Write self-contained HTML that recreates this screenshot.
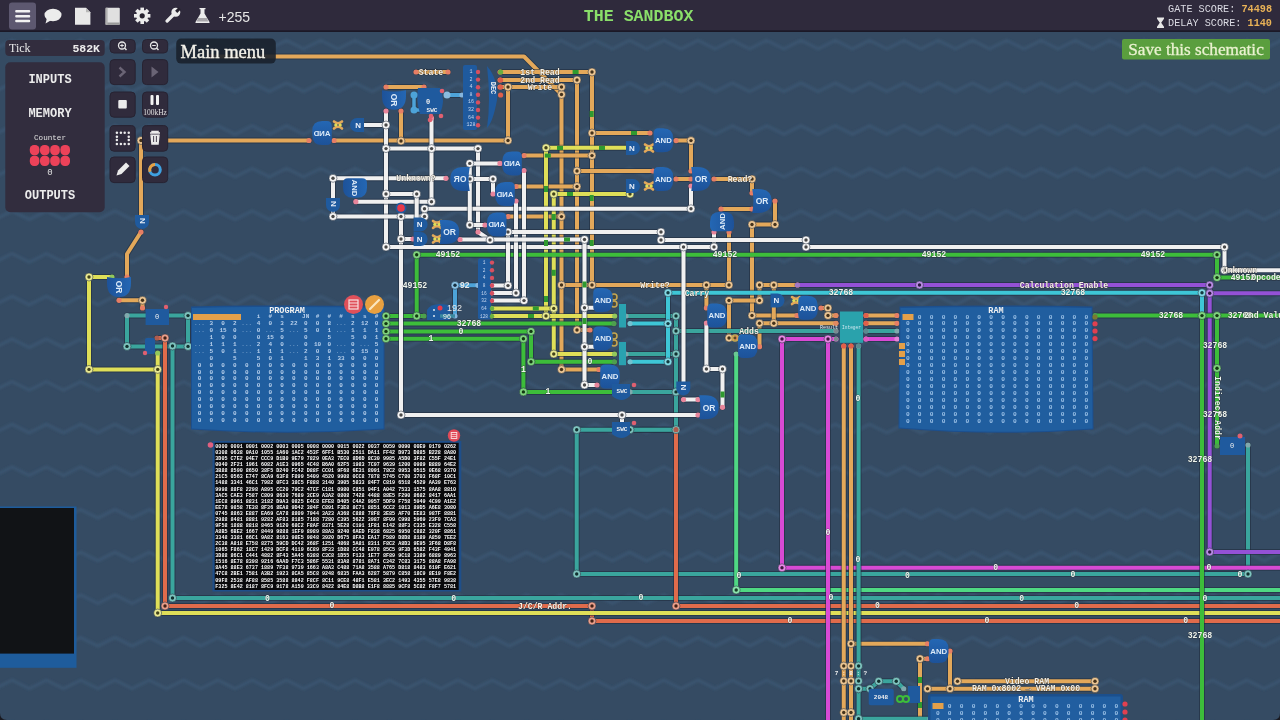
<!DOCTYPE html>
<html><head><meta charset="utf-8"><style>
html,body{margin:0;padding:0;width:1280px;height:720px;overflow:hidden;background:#354b63;}
svg{display:block;will-change:transform;}
</style></head><body>
<svg width="1280" height="720" viewBox="0 0 1280 720">
<defs><linearGradient id="gg" x1="0" y1="0" x2="0" y2="1"><stop offset="0" stop-color="#2467b4"/><stop offset="1" stop-color="#1d5299"/></linearGradient><filter id="bl" x="-5%" y="-50%" width="110%" height="200%"><feGaussianBlur stdDeviation="1.1"/></filter></defs>
<rect width="1280" height="720" fill="#354b63"/>
<path d="M-56.5,40.4 L-39.35,48.9 L-22.2,40.4 L-5.05,48.9 L12.1,40.4 L29.25,48.9 L46.4,40.4 L63.55,48.9 L80.7,40.4 L97.85,48.9 L115.0,40.4 L132.15,48.9 L149.3,40.4 L166.45,48.9 L183.6,40.4 L200.75,48.9 L217.9,40.4 L235.05,48.9 L252.2,40.4 L269.35,48.9 L286.5,40.4 L303.65,48.9 L320.8,40.4 L337.95,48.9 L355.1,40.4 L372.25,48.9 L389.4,40.4 L406.55,48.9 L423.7,40.4 L440.85,48.9 L458.0,40.4 L475.15,48.9 L492.3,40.4 L509.45,48.9 L526.6,40.4 L543.75,48.9 L560.9,40.4 L578.05,48.9 L595.2,40.4 L612.35,48.9 L629.5,40.4 L646.65,48.9 L663.8,40.4 L680.95,48.9 L698.1,40.4 L715.25,48.9 L732.4,40.4 L749.55,48.9 L766.7,40.4 L783.85,48.9 L801.0,40.4 L818.15,48.9 L835.3,40.4 L852.45,48.9 L869.6,40.4 L886.75,48.9 L903.9,40.4 L921.05,48.9 L938.2,40.4 L955.35,48.9 L972.5,40.4 L989.65,48.9 L1006.8,40.4 L1023.95,48.9 L1041.1,40.4 L1058.25,48.9 L1075.4,40.4 L1092.55,48.9 L1109.7,40.4 L1126.85,48.9 L1144.0,40.4 L1161.15,48.9 L1178.3,40.4 L1195.45,48.9 L1212.6,40.4 L1229.75,48.9 L1246.9,40.4 L1264.05,48.9 L1281.2,40.4 L1298.35,48.9 L1315.5,40.4 L1332.65,48.9" stroke="#3a5470" stroke-width="3.2" fill="none" stroke-linejoin="round" filter="url(#bl)"/>
<path d="M-56.5,83.05 L-39.35,91.55 L-22.2,83.05 L-5.05,91.55 L12.1,83.05 L29.25,91.55 L46.4,83.05 L63.55,91.55 L80.7,83.05 L97.85,91.55 L115.0,83.05 L132.15,91.55 L149.3,83.05 L166.45,91.55 L183.6,83.05 L200.75,91.55 L217.9,83.05 L235.05,91.55 L252.2,83.05 L269.35,91.55 L286.5,83.05 L303.65,91.55 L320.8,83.05 L337.95,91.55 L355.1,83.05 L372.25,91.55 L389.4,83.05 L406.55,91.55 L423.7,83.05 L440.85,91.55 L458.0,83.05 L475.15,91.55 L492.3,83.05 L509.45,91.55 L526.6,83.05 L543.75,91.55 L560.9,83.05 L578.05,91.55 L595.2,83.05 L612.35,91.55 L629.5,83.05 L646.65,91.55 L663.8,83.05 L680.95,91.55 L698.1,83.05 L715.25,91.55 L732.4,83.05 L749.55,91.55 L766.7,83.05 L783.85,91.55 L801.0,83.05 L818.15,91.55 L835.3,83.05 L852.45,91.55 L869.6,83.05 L886.75,91.55 L903.9,83.05 L921.05,91.55 L938.2,83.05 L955.35,91.55 L972.5,83.05 L989.65,91.55 L1006.8,83.05 L1023.95,91.55 L1041.1,83.05 L1058.25,91.55 L1075.4,83.05 L1092.55,91.55 L1109.7,83.05 L1126.85,91.55 L1144.0,83.05 L1161.15,91.55 L1178.3,83.05 L1195.45,91.55 L1212.6,83.05 L1229.75,91.55 L1246.9,83.05 L1264.05,91.55 L1281.2,83.05 L1298.35,91.55 L1315.5,83.05 L1332.65,91.55" stroke="#3a5470" stroke-width="3.2" fill="none" stroke-linejoin="round" filter="url(#bl)"/>
<path d="M-56.5,125.7 L-39.35,134.2 L-22.2,125.7 L-5.05,134.2 L12.1,125.7 L29.25,134.2 L46.4,125.7 L63.55,134.2 L80.7,125.7 L97.85,134.2 L115.0,125.7 L132.15,134.2 L149.3,125.7 L166.45,134.2 L183.6,125.7 L200.75,134.2 L217.9,125.7 L235.05,134.2 L252.2,125.7 L269.35,134.2 L286.5,125.7 L303.65,134.2 L320.8,125.7 L337.95,134.2 L355.1,125.7 L372.25,134.2 L389.4,125.7 L406.55,134.2 L423.7,125.7 L440.85,134.2 L458.0,125.7 L475.15,134.2 L492.3,125.7 L509.45,134.2 L526.6,125.7 L543.75,134.2 L560.9,125.7 L578.05,134.2 L595.2,125.7 L612.35,134.2 L629.5,125.7 L646.65,134.2 L663.8,125.7 L680.95,134.2 L698.1,125.7 L715.25,134.2 L732.4,125.7 L749.55,134.2 L766.7,125.7 L783.85,134.2 L801.0,125.7 L818.15,134.2 L835.3,125.7 L852.45,134.2 L869.6,125.7 L886.75,134.2 L903.9,125.7 L921.05,134.2 L938.2,125.7 L955.35,134.2 L972.5,125.7 L989.65,134.2 L1006.8,125.7 L1023.95,134.2 L1041.1,125.7 L1058.25,134.2 L1075.4,125.7 L1092.55,134.2 L1109.7,125.7 L1126.85,134.2 L1144.0,125.7 L1161.15,134.2 L1178.3,125.7 L1195.45,134.2 L1212.6,125.7 L1229.75,134.2 L1246.9,125.7 L1264.05,134.2 L1281.2,125.7 L1298.35,134.2 L1315.5,125.7 L1332.65,134.2" stroke="#3a5470" stroke-width="3.2" fill="none" stroke-linejoin="round" filter="url(#bl)"/>
<path d="M-56.5,168.35 L-39.35,176.85 L-22.2,168.35 L-5.05,176.85 L12.1,168.35 L29.25,176.85 L46.4,168.35 L63.55,176.85 L80.7,168.35 L97.85,176.85 L115.0,168.35 L132.15,176.85 L149.3,168.35 L166.45,176.85 L183.6,168.35 L200.75,176.85 L217.9,168.35 L235.05,176.85 L252.2,168.35 L269.35,176.85 L286.5,168.35 L303.65,176.85 L320.8,168.35 L337.95,176.85 L355.1,168.35 L372.25,176.85 L389.4,168.35 L406.55,176.85 L423.7,168.35 L440.85,176.85 L458.0,168.35 L475.15,176.85 L492.3,168.35 L509.45,176.85 L526.6,168.35 L543.75,176.85 L560.9,168.35 L578.05,176.85 L595.2,168.35 L612.35,176.85 L629.5,168.35 L646.65,176.85 L663.8,168.35 L680.95,176.85 L698.1,168.35 L715.25,176.85 L732.4,168.35 L749.55,176.85 L766.7,168.35 L783.85,176.85 L801.0,168.35 L818.15,176.85 L835.3,168.35 L852.45,176.85 L869.6,168.35 L886.75,176.85 L903.9,168.35 L921.05,176.85 L938.2,168.35 L955.35,176.85 L972.5,168.35 L989.65,176.85 L1006.8,168.35 L1023.95,176.85 L1041.1,168.35 L1058.25,176.85 L1075.4,168.35 L1092.55,176.85 L1109.7,168.35 L1126.85,176.85 L1144.0,168.35 L1161.15,176.85 L1178.3,168.35 L1195.45,176.85 L1212.6,168.35 L1229.75,176.85 L1246.9,168.35 L1264.05,176.85 L1281.2,168.35 L1298.35,176.85 L1315.5,168.35 L1332.65,176.85" stroke="#3a5470" stroke-width="3.2" fill="none" stroke-linejoin="round" filter="url(#bl)"/>
<path d="M-56.5,211.0 L-39.35,219.5 L-22.2,211.0 L-5.05,219.5 L12.1,211.0 L29.25,219.5 L46.4,211.0 L63.55,219.5 L80.7,211.0 L97.85,219.5 L115.0,211.0 L132.15,219.5 L149.3,211.0 L166.45,219.5 L183.6,211.0 L200.75,219.5 L217.9,211.0 L235.05,219.5 L252.2,211.0 L269.35,219.5 L286.5,211.0 L303.65,219.5 L320.8,211.0 L337.95,219.5 L355.1,211.0 L372.25,219.5 L389.4,211.0 L406.55,219.5 L423.7,211.0 L440.85,219.5 L458.0,211.0 L475.15,219.5 L492.3,211.0 L509.45,219.5 L526.6,211.0 L543.75,219.5 L560.9,211.0 L578.05,219.5 L595.2,211.0 L612.35,219.5 L629.5,211.0 L646.65,219.5 L663.8,211.0 L680.95,219.5 L698.1,211.0 L715.25,219.5 L732.4,211.0 L749.55,219.5 L766.7,211.0 L783.85,219.5 L801.0,211.0 L818.15,219.5 L835.3,211.0 L852.45,219.5 L869.6,211.0 L886.75,219.5 L903.9,211.0 L921.05,219.5 L938.2,211.0 L955.35,219.5 L972.5,211.0 L989.65,219.5 L1006.8,211.0 L1023.95,219.5 L1041.1,211.0 L1058.25,219.5 L1075.4,211.0 L1092.55,219.5 L1109.7,211.0 L1126.85,219.5 L1144.0,211.0 L1161.15,219.5 L1178.3,211.0 L1195.45,219.5 L1212.6,211.0 L1229.75,219.5 L1246.9,211.0 L1264.05,219.5 L1281.2,211.0 L1298.35,219.5 L1315.5,211.0 L1332.65,219.5" stroke="#3a5470" stroke-width="3.2" fill="none" stroke-linejoin="round" filter="url(#bl)"/>
<path d="M-56.5,253.65 L-39.35,262.15 L-22.2,253.65 L-5.05,262.15 L12.1,253.65 L29.25,262.15 L46.4,253.65 L63.55,262.15 L80.7,253.65 L97.85,262.15 L115.0,253.65 L132.15,262.15 L149.3,253.65 L166.45,262.15 L183.6,253.65 L200.75,262.15 L217.9,253.65 L235.05,262.15 L252.2,253.65 L269.35,262.15 L286.5,253.65 L303.65,262.15 L320.8,253.65 L337.95,262.15 L355.1,253.65 L372.25,262.15 L389.4,253.65 L406.55,262.15 L423.7,253.65 L440.85,262.15 L458.0,253.65 L475.15,262.15 L492.3,253.65 L509.45,262.15 L526.6,253.65 L543.75,262.15 L560.9,253.65 L578.05,262.15 L595.2,253.65 L612.35,262.15 L629.5,253.65 L646.65,262.15 L663.8,253.65 L680.95,262.15 L698.1,253.65 L715.25,262.15 L732.4,253.65 L749.55,262.15 L766.7,253.65 L783.85,262.15 L801.0,253.65 L818.15,262.15 L835.3,253.65 L852.45,262.15 L869.6,253.65 L886.75,262.15 L903.9,253.65 L921.05,262.15 L938.2,253.65 L955.35,262.15 L972.5,253.65 L989.65,262.15 L1006.8,253.65 L1023.95,262.15 L1041.1,253.65 L1058.25,262.15 L1075.4,253.65 L1092.55,262.15 L1109.7,253.65 L1126.85,262.15 L1144.0,253.65 L1161.15,262.15 L1178.3,253.65 L1195.45,262.15 L1212.6,253.65 L1229.75,262.15 L1246.9,253.65 L1264.05,262.15 L1281.2,253.65 L1298.35,262.15 L1315.5,253.65 L1332.65,262.15" stroke="#3a5470" stroke-width="3.2" fill="none" stroke-linejoin="round" filter="url(#bl)"/>
<path d="M-56.5,296.3 L-39.35,304.8 L-22.2,296.3 L-5.05,304.8 L12.1,296.3 L29.25,304.8 L46.4,296.3 L63.55,304.8 L80.7,296.3 L97.85,304.8 L115.0,296.3 L132.15,304.8 L149.3,296.3 L166.45,304.8 L183.6,296.3 L200.75,304.8 L217.9,296.3 L235.05,304.8 L252.2,296.3 L269.35,304.8 L286.5,296.3 L303.65,304.8 L320.8,296.3 L337.95,304.8 L355.1,296.3 L372.25,304.8 L389.4,296.3 L406.55,304.8 L423.7,296.3 L440.85,304.8 L458.0,296.3 L475.15,304.8 L492.3,296.3 L509.45,304.8 L526.6,296.3 L543.75,304.8 L560.9,296.3 L578.05,304.8 L595.2,296.3 L612.35,304.8 L629.5,296.3 L646.65,304.8 L663.8,296.3 L680.95,304.8 L698.1,296.3 L715.25,304.8 L732.4,296.3 L749.55,304.8 L766.7,296.3 L783.85,304.8 L801.0,296.3 L818.15,304.8 L835.3,296.3 L852.45,304.8 L869.6,296.3 L886.75,304.8 L903.9,296.3 L921.05,304.8 L938.2,296.3 L955.35,304.8 L972.5,296.3 L989.65,304.8 L1006.8,296.3 L1023.95,304.8 L1041.1,296.3 L1058.25,304.8 L1075.4,296.3 L1092.55,304.8 L1109.7,296.3 L1126.85,304.8 L1144.0,296.3 L1161.15,304.8 L1178.3,296.3 L1195.45,304.8 L1212.6,296.3 L1229.75,304.8 L1246.9,296.3 L1264.05,304.8 L1281.2,296.3 L1298.35,304.8 L1315.5,296.3 L1332.65,304.8" stroke="#3a5470" stroke-width="3.2" fill="none" stroke-linejoin="round" filter="url(#bl)"/>
<path d="M-56.5,338.95 L-39.35,347.45 L-22.2,338.95 L-5.05,347.45 L12.1,338.95 L29.25,347.45 L46.4,338.95 L63.55,347.45 L80.7,338.95 L97.85,347.45 L115.0,338.95 L132.15,347.45 L149.3,338.95 L166.45,347.45 L183.6,338.95 L200.75,347.45 L217.9,338.95 L235.05,347.45 L252.2,338.95 L269.35,347.45 L286.5,338.95 L303.65,347.45 L320.8,338.95 L337.95,347.45 L355.1,338.95 L372.25,347.45 L389.4,338.95 L406.55,347.45 L423.7,338.95 L440.85,347.45 L458.0,338.95 L475.15,347.45 L492.3,338.95 L509.45,347.45 L526.6,338.95 L543.75,347.45 L560.9,338.95 L578.05,347.45 L595.2,338.95 L612.35,347.45 L629.5,338.95 L646.65,347.45 L663.8,338.95 L680.95,347.45 L698.1,338.95 L715.25,347.45 L732.4,338.95 L749.55,347.45 L766.7,338.95 L783.85,347.45 L801.0,338.95 L818.15,347.45 L835.3,338.95 L852.45,347.45 L869.6,338.95 L886.75,347.45 L903.9,338.95 L921.05,347.45 L938.2,338.95 L955.35,347.45 L972.5,338.95 L989.65,347.45 L1006.8,338.95 L1023.95,347.45 L1041.1,338.95 L1058.25,347.45 L1075.4,338.95 L1092.55,347.45 L1109.7,338.95 L1126.85,347.45 L1144.0,338.95 L1161.15,347.45 L1178.3,338.95 L1195.45,347.45 L1212.6,338.95 L1229.75,347.45 L1246.9,338.95 L1264.05,347.45 L1281.2,338.95 L1298.35,347.45 L1315.5,338.95 L1332.65,347.45" stroke="#3a5470" stroke-width="3.2" fill="none" stroke-linejoin="round" filter="url(#bl)"/>
<path d="M-56.5,381.6 L-39.35,390.1 L-22.2,381.6 L-5.05,390.1 L12.1,381.6 L29.25,390.1 L46.4,381.6 L63.55,390.1 L80.7,381.6 L97.85,390.1 L115.0,381.6 L132.15,390.1 L149.3,381.6 L166.45,390.1 L183.6,381.6 L200.75,390.1 L217.9,381.6 L235.05,390.1 L252.2,381.6 L269.35,390.1 L286.5,381.6 L303.65,390.1 L320.8,381.6 L337.95,390.1 L355.1,381.6 L372.25,390.1 L389.4,381.6 L406.55,390.1 L423.7,381.6 L440.85,390.1 L458.0,381.6 L475.15,390.1 L492.3,381.6 L509.45,390.1 L526.6,381.6 L543.75,390.1 L560.9,381.6 L578.05,390.1 L595.2,381.6 L612.35,390.1 L629.5,381.6 L646.65,390.1 L663.8,381.6 L680.95,390.1 L698.1,381.6 L715.25,390.1 L732.4,381.6 L749.55,390.1 L766.7,381.6 L783.85,390.1 L801.0,381.6 L818.15,390.1 L835.3,381.6 L852.45,390.1 L869.6,381.6 L886.75,390.1 L903.9,381.6 L921.05,390.1 L938.2,381.6 L955.35,390.1 L972.5,381.6 L989.65,390.1 L1006.8,381.6 L1023.95,390.1 L1041.1,381.6 L1058.25,390.1 L1075.4,381.6 L1092.55,390.1 L1109.7,381.6 L1126.85,390.1 L1144.0,381.6 L1161.15,390.1 L1178.3,381.6 L1195.45,390.1 L1212.6,381.6 L1229.75,390.1 L1246.9,381.6 L1264.05,390.1 L1281.2,381.6 L1298.35,390.1 L1315.5,381.6 L1332.65,390.1" stroke="#3a5470" stroke-width="3.2" fill="none" stroke-linejoin="round" filter="url(#bl)"/>
<path d="M-56.5,424.25 L-39.35,432.75 L-22.2,424.25 L-5.05,432.75 L12.1,424.25 L29.25,432.75 L46.4,424.25 L63.55,432.75 L80.7,424.25 L97.85,432.75 L115.0,424.25 L132.15,432.75 L149.3,424.25 L166.45,432.75 L183.6,424.25 L200.75,432.75 L217.9,424.25 L235.05,432.75 L252.2,424.25 L269.35,432.75 L286.5,424.25 L303.65,432.75 L320.8,424.25 L337.95,432.75 L355.1,424.25 L372.25,432.75 L389.4,424.25 L406.55,432.75 L423.7,424.25 L440.85,432.75 L458.0,424.25 L475.15,432.75 L492.3,424.25 L509.45,432.75 L526.6,424.25 L543.75,432.75 L560.9,424.25 L578.05,432.75 L595.2,424.25 L612.35,432.75 L629.5,424.25 L646.65,432.75 L663.8,424.25 L680.95,432.75 L698.1,424.25 L715.25,432.75 L732.4,424.25 L749.55,432.75 L766.7,424.25 L783.85,432.75 L801.0,424.25 L818.15,432.75 L835.3,424.25 L852.45,432.75 L869.6,424.25 L886.75,432.75 L903.9,424.25 L921.05,432.75 L938.2,424.25 L955.35,432.75 L972.5,424.25 L989.65,432.75 L1006.8,424.25 L1023.95,432.75 L1041.1,424.25 L1058.25,432.75 L1075.4,424.25 L1092.55,432.75 L1109.7,424.25 L1126.85,432.75 L1144.0,424.25 L1161.15,432.75 L1178.3,424.25 L1195.45,432.75 L1212.6,424.25 L1229.75,432.75 L1246.9,424.25 L1264.05,432.75 L1281.2,424.25 L1298.35,432.75 L1315.5,424.25 L1332.65,432.75" stroke="#3a5470" stroke-width="3.2" fill="none" stroke-linejoin="round" filter="url(#bl)"/>
<path d="M-56.5,466.9 L-39.35,475.4 L-22.2,466.9 L-5.05,475.4 L12.1,466.9 L29.25,475.4 L46.4,466.9 L63.55,475.4 L80.7,466.9 L97.85,475.4 L115.0,466.9 L132.15,475.4 L149.3,466.9 L166.45,475.4 L183.6,466.9 L200.75,475.4 L217.9,466.9 L235.05,475.4 L252.2,466.9 L269.35,475.4 L286.5,466.9 L303.65,475.4 L320.8,466.9 L337.95,475.4 L355.1,466.9 L372.25,475.4 L389.4,466.9 L406.55,475.4 L423.7,466.9 L440.85,475.4 L458.0,466.9 L475.15,475.4 L492.3,466.9 L509.45,475.4 L526.6,466.9 L543.75,475.4 L560.9,466.9 L578.05,475.4 L595.2,466.9 L612.35,475.4 L629.5,466.9 L646.65,475.4 L663.8,466.9 L680.95,475.4 L698.1,466.9 L715.25,475.4 L732.4,466.9 L749.55,475.4 L766.7,466.9 L783.85,475.4 L801.0,466.9 L818.15,475.4 L835.3,466.9 L852.45,475.4 L869.6,466.9 L886.75,475.4 L903.9,466.9 L921.05,475.4 L938.2,466.9 L955.35,475.4 L972.5,466.9 L989.65,475.4 L1006.8,466.9 L1023.95,475.4 L1041.1,466.9 L1058.25,475.4 L1075.4,466.9 L1092.55,475.4 L1109.7,466.9 L1126.85,475.4 L1144.0,466.9 L1161.15,475.4 L1178.3,466.9 L1195.45,475.4 L1212.6,466.9 L1229.75,475.4 L1246.9,466.9 L1264.05,475.4 L1281.2,466.9 L1298.35,475.4 L1315.5,466.9 L1332.65,475.4" stroke="#3a5470" stroke-width="3.2" fill="none" stroke-linejoin="round" filter="url(#bl)"/>
<path d="M-56.5,509.55 L-39.35,518.05 L-22.2,509.55 L-5.05,518.05 L12.1,509.55 L29.25,518.05 L46.4,509.55 L63.55,518.05 L80.7,509.55 L97.85,518.05 L115.0,509.55 L132.15,518.05 L149.3,509.55 L166.45,518.05 L183.6,509.55 L200.75,518.05 L217.9,509.55 L235.05,518.05 L252.2,509.55 L269.35,518.05 L286.5,509.55 L303.65,518.05 L320.8,509.55 L337.95,518.05 L355.1,509.55 L372.25,518.05 L389.4,509.55 L406.55,518.05 L423.7,509.55 L440.85,518.05 L458.0,509.55 L475.15,518.05 L492.3,509.55 L509.45,518.05 L526.6,509.55 L543.75,518.05 L560.9,509.55 L578.05,518.05 L595.2,509.55 L612.35,518.05 L629.5,509.55 L646.65,518.05 L663.8,509.55 L680.95,518.05 L698.1,509.55 L715.25,518.05 L732.4,509.55 L749.55,518.05 L766.7,509.55 L783.85,518.05 L801.0,509.55 L818.15,518.05 L835.3,509.55 L852.45,518.05 L869.6,509.55 L886.75,518.05 L903.9,509.55 L921.05,518.05 L938.2,509.55 L955.35,518.05 L972.5,509.55 L989.65,518.05 L1006.8,509.55 L1023.95,518.05 L1041.1,509.55 L1058.25,518.05 L1075.4,509.55 L1092.55,518.05 L1109.7,509.55 L1126.85,518.05 L1144.0,509.55 L1161.15,518.05 L1178.3,509.55 L1195.45,518.05 L1212.6,509.55 L1229.75,518.05 L1246.9,509.55 L1264.05,518.05 L1281.2,509.55 L1298.35,518.05 L1315.5,509.55 L1332.65,518.05" stroke="#3a5470" stroke-width="3.2" fill="none" stroke-linejoin="round" filter="url(#bl)"/>
<path d="M-56.5,552.2 L-39.35,560.7 L-22.2,552.2 L-5.05,560.7 L12.1,552.2 L29.25,560.7 L46.4,552.2 L63.55,560.7 L80.7,552.2 L97.85,560.7 L115.0,552.2 L132.15,560.7 L149.3,552.2 L166.45,560.7 L183.6,552.2 L200.75,560.7 L217.9,552.2 L235.05,560.7 L252.2,552.2 L269.35,560.7 L286.5,552.2 L303.65,560.7 L320.8,552.2 L337.95,560.7 L355.1,552.2 L372.25,560.7 L389.4,552.2 L406.55,560.7 L423.7,552.2 L440.85,560.7 L458.0,552.2 L475.15,560.7 L492.3,552.2 L509.45,560.7 L526.6,552.2 L543.75,560.7 L560.9,552.2 L578.05,560.7 L595.2,552.2 L612.35,560.7 L629.5,552.2 L646.65,560.7 L663.8,552.2 L680.95,560.7 L698.1,552.2 L715.25,560.7 L732.4,552.2 L749.55,560.7 L766.7,552.2 L783.85,560.7 L801.0,552.2 L818.15,560.7 L835.3,552.2 L852.45,560.7 L869.6,552.2 L886.75,560.7 L903.9,552.2 L921.05,560.7 L938.2,552.2 L955.35,560.7 L972.5,552.2 L989.65,560.7 L1006.8,552.2 L1023.95,560.7 L1041.1,552.2 L1058.25,560.7 L1075.4,552.2 L1092.55,560.7 L1109.7,552.2 L1126.85,560.7 L1144.0,552.2 L1161.15,560.7 L1178.3,552.2 L1195.45,560.7 L1212.6,552.2 L1229.75,560.7 L1246.9,552.2 L1264.05,560.7 L1281.2,552.2 L1298.35,560.7 L1315.5,552.2 L1332.65,560.7" stroke="#3a5470" stroke-width="3.2" fill="none" stroke-linejoin="round" filter="url(#bl)"/>
<path d="M-56.5,594.85 L-39.35,603.35 L-22.2,594.85 L-5.05,603.35 L12.1,594.85 L29.25,603.35 L46.4,594.85 L63.55,603.35 L80.7,594.85 L97.85,603.35 L115.0,594.85 L132.15,603.35 L149.3,594.85 L166.45,603.35 L183.6,594.85 L200.75,603.35 L217.9,594.85 L235.05,603.35 L252.2,594.85 L269.35,603.35 L286.5,594.85 L303.65,603.35 L320.8,594.85 L337.95,603.35 L355.1,594.85 L372.25,603.35 L389.4,594.85 L406.55,603.35 L423.7,594.85 L440.85,603.35 L458.0,594.85 L475.15,603.35 L492.3,594.85 L509.45,603.35 L526.6,594.85 L543.75,603.35 L560.9,594.85 L578.05,603.35 L595.2,594.85 L612.35,603.35 L629.5,594.85 L646.65,603.35 L663.8,594.85 L680.95,603.35 L698.1,594.85 L715.25,603.35 L732.4,594.85 L749.55,603.35 L766.7,594.85 L783.85,603.35 L801.0,594.85 L818.15,603.35 L835.3,594.85 L852.45,603.35 L869.6,594.85 L886.75,603.35 L903.9,594.85 L921.05,603.35 L938.2,594.85 L955.35,603.35 L972.5,594.85 L989.65,603.35 L1006.8,594.85 L1023.95,603.35 L1041.1,594.85 L1058.25,603.35 L1075.4,594.85 L1092.55,603.35 L1109.7,594.85 L1126.85,603.35 L1144.0,594.85 L1161.15,603.35 L1178.3,594.85 L1195.45,603.35 L1212.6,594.85 L1229.75,603.35 L1246.9,594.85 L1264.05,603.35 L1281.2,594.85 L1298.35,603.35 L1315.5,594.85 L1332.65,603.35" stroke="#3a5470" stroke-width="3.2" fill="none" stroke-linejoin="round" filter="url(#bl)"/>
<path d="M-56.5,637.5 L-39.35,646.0 L-22.2,637.5 L-5.05,646.0 L12.1,637.5 L29.25,646.0 L46.4,637.5 L63.55,646.0 L80.7,637.5 L97.85,646.0 L115.0,637.5 L132.15,646.0 L149.3,637.5 L166.45,646.0 L183.6,637.5 L200.75,646.0 L217.9,637.5 L235.05,646.0 L252.2,637.5 L269.35,646.0 L286.5,637.5 L303.65,646.0 L320.8,637.5 L337.95,646.0 L355.1,637.5 L372.25,646.0 L389.4,637.5 L406.55,646.0 L423.7,637.5 L440.85,646.0 L458.0,637.5 L475.15,646.0 L492.3,637.5 L509.45,646.0 L526.6,637.5 L543.75,646.0 L560.9,637.5 L578.05,646.0 L595.2,637.5 L612.35,646.0 L629.5,637.5 L646.65,646.0 L663.8,637.5 L680.95,646.0 L698.1,637.5 L715.25,646.0 L732.4,637.5 L749.55,646.0 L766.7,637.5 L783.85,646.0 L801.0,637.5 L818.15,646.0 L835.3,637.5 L852.45,646.0 L869.6,637.5 L886.75,646.0 L903.9,637.5 L921.05,646.0 L938.2,637.5 L955.35,646.0 L972.5,637.5 L989.65,646.0 L1006.8,637.5 L1023.95,646.0 L1041.1,637.5 L1058.25,646.0 L1075.4,637.5 L1092.55,646.0 L1109.7,637.5 L1126.85,646.0 L1144.0,637.5 L1161.15,646.0 L1178.3,637.5 L1195.45,646.0 L1212.6,637.5 L1229.75,646.0 L1246.9,637.5 L1264.05,646.0 L1281.2,637.5 L1298.35,646.0 L1315.5,637.5 L1332.65,646.0" stroke="#3a5470" stroke-width="3.2" fill="none" stroke-linejoin="round" filter="url(#bl)"/>
<path d="M-56.5,680.15 L-39.35,688.65 L-22.2,680.15 L-5.05,688.65 L12.1,680.15 L29.25,688.65 L46.4,680.15 L63.55,688.65 L80.7,680.15 L97.85,688.65 L115.0,680.15 L132.15,688.65 L149.3,680.15 L166.45,688.65 L183.6,680.15 L200.75,688.65 L217.9,680.15 L235.05,688.65 L252.2,680.15 L269.35,688.65 L286.5,680.15 L303.65,688.65 L320.8,680.15 L337.95,688.65 L355.1,680.15 L372.25,688.65 L389.4,680.15 L406.55,688.65 L423.7,680.15 L440.85,688.65 L458.0,680.15 L475.15,688.65 L492.3,680.15 L509.45,688.65 L526.6,680.15 L543.75,688.65 L560.9,680.15 L578.05,688.65 L595.2,680.15 L612.35,688.65 L629.5,680.15 L646.65,688.65 L663.8,680.15 L680.95,688.65 L698.1,680.15 L715.25,688.65 L732.4,680.15 L749.55,688.65 L766.7,680.15 L783.85,688.65 L801.0,680.15 L818.15,688.65 L835.3,680.15 L852.45,688.65 L869.6,680.15 L886.75,688.65 L903.9,680.15 L921.05,688.65 L938.2,680.15 L955.35,688.65 L972.5,680.15 L989.65,688.65 L1006.8,680.15 L1023.95,688.65 L1041.1,680.15 L1058.25,688.65 L1075.4,680.15 L1092.55,688.65 L1109.7,680.15 L1126.85,688.65 L1144.0,680.15 L1161.15,688.65 L1178.3,680.15 L1195.45,688.65 L1212.6,680.15 L1229.75,688.65 L1246.9,680.15 L1264.05,688.65 L1281.2,680.15 L1298.35,688.65 L1315.5,680.15 L1332.65,688.65" stroke="#3a5470" stroke-width="3.2" fill="none" stroke-linejoin="round" filter="url(#bl)"/>
<path d="M-56.5,722.8 L-39.35,731.3 L-22.2,722.8 L-5.05,731.3 L12.1,722.8 L29.25,731.3 L46.4,722.8 L63.55,731.3 L80.7,722.8 L97.85,731.3 L115.0,722.8 L132.15,731.3 L149.3,722.8 L166.45,731.3 L183.6,722.8 L200.75,731.3 L217.9,722.8 L235.05,731.3 L252.2,722.8 L269.35,731.3 L286.5,722.8 L303.65,731.3 L320.8,722.8 L337.95,731.3 L355.1,722.8 L372.25,731.3 L389.4,722.8 L406.55,731.3 L423.7,722.8 L440.85,731.3 L458.0,722.8 L475.15,731.3 L492.3,722.8 L509.45,731.3 L526.6,722.8 L543.75,731.3 L560.9,722.8 L578.05,731.3 L595.2,722.8 L612.35,731.3 L629.5,722.8 L646.65,731.3 L663.8,722.8 L680.95,731.3 L698.1,722.8 L715.25,731.3 L732.4,722.8 L749.55,731.3 L766.7,722.8 L783.85,731.3 L801.0,722.8 L818.15,731.3 L835.3,722.8 L852.45,731.3 L869.6,722.8 L886.75,731.3 L903.9,722.8 L921.05,731.3 L938.2,722.8 L955.35,731.3 L972.5,722.8 L989.65,731.3 L1006.8,722.8 L1023.95,731.3 L1041.1,722.8 L1058.25,731.3 L1075.4,722.8 L1092.55,731.3 L1109.7,722.8 L1126.85,731.3 L1144.0,722.8 L1161.15,731.3 L1178.3,722.8 L1195.45,731.3 L1212.6,722.8 L1229.75,731.3 L1246.9,722.8 L1264.05,731.3 L1281.2,722.8 L1298.35,731.3 L1315.5,722.8 L1332.65,731.3" stroke="#3a5470" stroke-width="3.2" fill="none" stroke-linejoin="round" filter="url(#bl)"/>
<path d="M210,56.5 L524,56.5 L561.5,94.5" stroke="#1d2a3a" stroke-opacity="0.55" stroke-width="6" fill="none" stroke-linecap="round" stroke-linejoin="round"/>
<path d="M210,56.5 L524,56.5 L561.5,94.5" stroke="#e3a85a" stroke-width="4" fill="none" stroke-linecap="round" stroke-linejoin="round"/>
<path d="M141,140.5 L309,140.5" stroke="#1d2a3a" stroke-opacity="0.55" stroke-width="6" fill="none" stroke-linecap="round" stroke-linejoin="round"/>
<path d="M141,140.5 L309,140.5" stroke="#e3a85a" stroke-width="4" fill="none" stroke-linecap="round" stroke-linejoin="round"/>
<path d="M141,140.5 L141,218" stroke="#1d2a3a" stroke-opacity="0.55" stroke-width="6" fill="none" stroke-linecap="round" stroke-linejoin="round"/>
<path d="M141,140.5 L141,218" stroke="#e3a85a" stroke-width="4" fill="none" stroke-linecap="round" stroke-linejoin="round"/>
<path d="M141,232 L127,254 L127,277" stroke="#1d2a3a" stroke-opacity="0.55" stroke-width="6" fill="none" stroke-linecap="round" stroke-linejoin="round"/>
<path d="M141,232 L127,254 L127,277" stroke="#e3a85a" stroke-width="4" fill="none" stroke-linecap="round" stroke-linejoin="round"/>
<path d="M119,300.3 L142.5,300.3 L142.5,308" stroke="#1d2a3a" stroke-opacity="0.55" stroke-width="6" fill="none" stroke-linecap="round" stroke-linejoin="round"/>
<path d="M119,300.3 L142.5,300.3 L142.5,308" stroke="#e3a85a" stroke-width="4" fill="none" stroke-linecap="round" stroke-linejoin="round"/>
<path d="M334,140.5 L508,140.5 L508,87" stroke="#1d2a3a" stroke-opacity="0.55" stroke-width="6" fill="none" stroke-linecap="round" stroke-linejoin="round"/>
<path d="M334,140.5 L508,140.5 L508,87" stroke="#e3a85a" stroke-width="4" fill="none" stroke-linecap="round" stroke-linejoin="round"/>
<path d="M386,87 L424,87" stroke="#1d2a3a" stroke-opacity="0.55" stroke-width="6" fill="none" stroke-linecap="round" stroke-linejoin="round"/>
<path d="M386,87 L424,87" stroke="#e3a85a" stroke-width="4" fill="none" stroke-linecap="round" stroke-linejoin="round"/>
<path d="M401,111 L401,141" stroke="#1d2a3a" stroke-opacity="0.55" stroke-width="6" fill="none" stroke-linecap="round" stroke-linejoin="round"/>
<path d="M401,111 L401,141" stroke="#e3a85a" stroke-width="4" fill="none" stroke-linecap="round" stroke-linejoin="round"/>
<path d="M416,72 L448,72" stroke="#1d2a3a" stroke-opacity="0.55" stroke-width="6" fill="none" stroke-linecap="round" stroke-linejoin="round"/>
<path d="M416,72 L448,72" stroke="#e3a85a" stroke-width="4" fill="none" stroke-linecap="round" stroke-linejoin="round"/>
<path d="M500,72 L592,72 L592,285" stroke="#1d2a3a" stroke-opacity="0.55" stroke-width="6" fill="none" stroke-linecap="round" stroke-linejoin="round"/>
<path d="M500,72 L592,72 L592,285" stroke="#e3a85a" stroke-width="4" fill="none" stroke-linecap="round" stroke-linejoin="round"/>
<path d="M592,133 L650,133" stroke="#1d2a3a" stroke-opacity="0.55" stroke-width="6" fill="none" stroke-linecap="round" stroke-linejoin="round"/>
<path d="M592,133 L650,133" stroke="#e3a85a" stroke-width="4" fill="none" stroke-linecap="round" stroke-linejoin="round"/>
<path d="M500,80 L577,80 L577,330 L590,330" stroke="#1d2a3a" stroke-opacity="0.55" stroke-width="6" fill="none" stroke-linecap="round" stroke-linejoin="round"/>
<path d="M500,80 L577,80 L577,330 L590,330" stroke="#e3a85a" stroke-width="4" fill="none" stroke-linecap="round" stroke-linejoin="round"/>
<path d="M500,87 L561.5,87 L561.5,369.5 L599,369.5" stroke="#1d2a3a" stroke-opacity="0.55" stroke-width="6" fill="none" stroke-linecap="round" stroke-linejoin="round"/>
<path d="M500,87 L561.5,87 L561.5,369.5 L599,369.5" stroke="#e3a85a" stroke-width="4" fill="none" stroke-linecap="round" stroke-linejoin="round"/>
<path d="M524,155.6 L592,155.6" stroke="#1d2a3a" stroke-opacity="0.55" stroke-width="6" fill="none" stroke-linecap="round" stroke-linejoin="round"/>
<path d="M524,155.6 L592,155.6" stroke="#e3a85a" stroke-width="4" fill="none" stroke-linecap="round" stroke-linejoin="round"/>
<path d="M577,171 L653,171" stroke="#1d2a3a" stroke-opacity="0.55" stroke-width="6" fill="none" stroke-linecap="round" stroke-linejoin="round"/>
<path d="M577,171 L653,171" stroke="#e3a85a" stroke-width="4" fill="none" stroke-linecap="round" stroke-linejoin="round"/>
<path d="M516,186.5 L577,186.5" stroke="#1d2a3a" stroke-opacity="0.55" stroke-width="6" fill="none" stroke-linecap="round" stroke-linejoin="round"/>
<path d="M516,186.5 L577,186.5" stroke="#e3a85a" stroke-width="4" fill="none" stroke-linecap="round" stroke-linejoin="round"/>
<path d="M508,216.6 L561.5,216.6" stroke="#1d2a3a" stroke-opacity="0.55" stroke-width="6" fill="none" stroke-linecap="round" stroke-linejoin="round"/>
<path d="M508,216.6 L561.5,216.6" stroke="#e3a85a" stroke-width="4" fill="none" stroke-linecap="round" stroke-linejoin="round"/>
<path d="M676,140.6 L691,140.6 L691,171" stroke="#1d2a3a" stroke-opacity="0.55" stroke-width="6" fill="none" stroke-linecap="round" stroke-linejoin="round"/>
<path d="M676,140.6 L691,140.6 L691,171" stroke="#e3a85a" stroke-width="4" fill="none" stroke-linecap="round" stroke-linejoin="round"/>
<path d="M676,179 L691,179" stroke="#1d2a3a" stroke-opacity="0.55" stroke-width="6" fill="none" stroke-linecap="round" stroke-linejoin="round"/>
<path d="M676,179 L691,179" stroke="#e3a85a" stroke-width="4" fill="none" stroke-linecap="round" stroke-linejoin="round"/>
<path d="M714,179 L752,179 L752,193" stroke="#1d2a3a" stroke-opacity="0.55" stroke-width="6" fill="none" stroke-linecap="round" stroke-linejoin="round"/>
<path d="M714,179 L752,179 L752,193" stroke="#e3a85a" stroke-width="4" fill="none" stroke-linecap="round" stroke-linejoin="round"/>
<path d="M775,201 L775,224.5 L752,224.5 L752,315.5 L797,315.5" stroke="#1d2a3a" stroke-opacity="0.55" stroke-width="6" fill="none" stroke-linecap="round" stroke-linejoin="round"/>
<path d="M775,201 L775,224.5 L752,224.5 L752,315.5 L797,315.5" stroke="#e3a85a" stroke-width="4" fill="none" stroke-linecap="round" stroke-linejoin="round"/>
<path d="M721,209 L752,209" stroke="#1d2a3a" stroke-opacity="0.55" stroke-width="6" fill="none" stroke-linecap="round" stroke-linejoin="round"/>
<path d="M721,209 L752,209" stroke="#e3a85a" stroke-width="4" fill="none" stroke-linecap="round" stroke-linejoin="round"/>
<path d="M729,232 L729,285" stroke="#1d2a3a" stroke-opacity="0.55" stroke-width="6" fill="none" stroke-linecap="round" stroke-linejoin="round"/>
<path d="M729,232 L729,285" stroke="#e3a85a" stroke-width="4" fill="none" stroke-linecap="round" stroke-linejoin="round"/>
<path d="M729,300.5 L729,338 L737,338" stroke="#1d2a3a" stroke-opacity="0.55" stroke-width="6" fill="none" stroke-linecap="round" stroke-linejoin="round"/>
<path d="M729,300.5 L729,338 L737,338" stroke="#e3a85a" stroke-width="4" fill="none" stroke-linecap="round" stroke-linejoin="round"/>
<path d="M561.5,285 L729,285" stroke="#1d2a3a" stroke-opacity="0.55" stroke-width="6" fill="none" stroke-linecap="round" stroke-linejoin="round"/>
<path d="M561.5,285 L729,285" stroke="#e3a85a" stroke-width="4" fill="none" stroke-linecap="round" stroke-linejoin="round"/>
<path d="M706.4,285 L706.4,308" stroke="#1d2a3a" stroke-opacity="0.55" stroke-width="6" fill="none" stroke-linecap="round" stroke-linejoin="round"/>
<path d="M706.4,285 L706.4,308" stroke="#e3a85a" stroke-width="4" fill="none" stroke-linecap="round" stroke-linejoin="round"/>
<path d="M729,300.5 L759.5,300.5 L759.5,285 L797.5,285" stroke="#1d2a3a" stroke-opacity="0.55" stroke-width="6" fill="none" stroke-linecap="round" stroke-linejoin="round"/>
<path d="M729,300.5 L759.5,300.5 L759.5,285 L797.5,285" stroke="#e3a85a" stroke-width="4" fill="none" stroke-linecap="round" stroke-linejoin="round"/>
<path d="M759.5,323.3 L836,323.3" stroke="#1d2a3a" stroke-opacity="0.55" stroke-width="6" fill="none" stroke-linecap="round" stroke-linejoin="round"/>
<path d="M759.5,323.3 L836,323.3" stroke="#e3a85a" stroke-width="4" fill="none" stroke-linecap="round" stroke-linejoin="round"/>
<path d="M773.8,285 L773.8,323.3" stroke="#1d2a3a" stroke-opacity="0.55" stroke-width="6" fill="none" stroke-linecap="round" stroke-linejoin="round"/>
<path d="M773.8,285 L773.8,323.3" stroke="#e3a85a" stroke-width="4" fill="none" stroke-linecap="round" stroke-linejoin="round"/>
<path d="M821,308 L828,308 L828,315.5 L836,315.5" stroke="#1d2a3a" stroke-opacity="0.55" stroke-width="6" fill="none" stroke-linecap="round" stroke-linejoin="round"/>
<path d="M821,308 L828,308 L828,315.5 L836,315.5" stroke="#e3a85a" stroke-width="4" fill="none" stroke-linecap="round" stroke-linejoin="round"/>
<path d="M759.5,323.3 L759.5,346.7" stroke="#1d2a3a" stroke-opacity="0.55" stroke-width="6" fill="none" stroke-linecap="round" stroke-linejoin="round"/>
<path d="M759.5,323.3 L759.5,346.7" stroke="#e3a85a" stroke-width="4" fill="none" stroke-linecap="round" stroke-linejoin="round"/>
<path d="M866,315.5 L897,315.5" stroke="#1d2a3a" stroke-opacity="0.55" stroke-width="6" fill="none" stroke-linecap="round" stroke-linejoin="round"/>
<path d="M866,315.5 L897,315.5" stroke="#e3a85a" stroke-width="4" fill="none" stroke-linecap="round" stroke-linejoin="round"/>
<path d="M866,323.3 L897,323.3" stroke="#1d2a3a" stroke-opacity="0.55" stroke-width="6" fill="none" stroke-linecap="round" stroke-linejoin="round"/>
<path d="M866,323.3 L897,323.3" stroke="#e3a85a" stroke-width="4" fill="none" stroke-linecap="round" stroke-linejoin="round"/>
<path d="M851,643.75 L927.5,643.75" stroke="#1d2a3a" stroke-opacity="0.55" stroke-width="6" fill="none" stroke-linecap="round" stroke-linejoin="round"/>
<path d="M851,643.75 L927.5,643.75" stroke="#e3a85a" stroke-width="4" fill="none" stroke-linecap="round" stroke-linejoin="round"/>
<path d="M950,651 L950,688.75" stroke="#1d2a3a" stroke-opacity="0.55" stroke-width="6" fill="none" stroke-linecap="round" stroke-linejoin="round"/>
<path d="M950,651 L950,688.75" stroke="#e3a85a" stroke-width="4" fill="none" stroke-linecap="round" stroke-linejoin="round"/>
<path d="M920,658.75 L927.5,658.75" stroke="#1d2a3a" stroke-opacity="0.55" stroke-width="6" fill="none" stroke-linecap="round" stroke-linejoin="round"/>
<path d="M920,658.75 L927.5,658.75" stroke="#e3a85a" stroke-width="4" fill="none" stroke-linecap="round" stroke-linejoin="round"/>
<path d="M920,658.75 L920,720" stroke="#1d2a3a" stroke-opacity="0.55" stroke-width="6" fill="none" stroke-linecap="round" stroke-linejoin="round"/>
<path d="M920,658.75 L920,720" stroke="#e3a85a" stroke-width="4" fill="none" stroke-linecap="round" stroke-linejoin="round"/>
<path d="M957.5,681.25 L1095,681.25" stroke="#1d2a3a" stroke-opacity="0.55" stroke-width="6" fill="none" stroke-linecap="round" stroke-linejoin="round"/>
<path d="M957.5,681.25 L1095,681.25" stroke="#e3a85a" stroke-width="4" fill="none" stroke-linecap="round" stroke-linejoin="round"/>
<path d="M927.5,688.75 L1095,688.75" stroke="#1d2a3a" stroke-opacity="0.55" stroke-width="6" fill="none" stroke-linecap="round" stroke-linejoin="round"/>
<path d="M927.5,688.75 L1095,688.75" stroke="#e3a85a" stroke-width="4" fill="none" stroke-linecap="round" stroke-linejoin="round"/>
<path d="M172.5,346 L172.5,598 L1280,598" stroke="#1d2a3a" stroke-opacity="0.55" stroke-width="6" fill="none" stroke-linecap="round" stroke-linejoin="round"/>
<path d="M172.5,346 L172.5,598 L1280,598" stroke="#3aa59d" stroke-width="4" fill="none" stroke-linecap="round" stroke-linejoin="round"/>
<path d="M127,315.6 L127,346.4 L188,346.4 L188,315.6 L127,315.6" stroke="#1d2a3a" stroke-opacity="0.55" stroke-width="6" fill="none" stroke-linecap="round" stroke-linejoin="round"/>
<path d="M127,315.6 L127,346.4 L188,346.4 L188,315.6 L127,315.6" stroke="#3aa59d" stroke-width="4" fill="none" stroke-linecap="round" stroke-linejoin="round"/>
<path d="M626,316 L676,316" stroke="#1d2a3a" stroke-opacity="0.55" stroke-width="6" fill="none" stroke-linecap="round" stroke-linejoin="round"/>
<path d="M626,316 L676,316" stroke="#3aa59d" stroke-width="4" fill="none" stroke-linecap="round" stroke-linejoin="round"/>
<path d="M676,315.5 L676,429.7" stroke="#1d2a3a" stroke-opacity="0.55" stroke-width="6" fill="none" stroke-linecap="round" stroke-linejoin="round"/>
<path d="M676,315.5 L676,429.7" stroke="#3aa59d" stroke-width="4" fill="none" stroke-linecap="round" stroke-linejoin="round"/>
<path d="M576.7,429.7 L676,429.7" stroke="#1d2a3a" stroke-opacity="0.55" stroke-width="6" fill="none" stroke-linecap="round" stroke-linejoin="round"/>
<path d="M576.7,429.7 L676,429.7" stroke="#3aa59d" stroke-width="4" fill="none" stroke-linecap="round" stroke-linejoin="round"/>
<path d="M576.7,429.7 L576.7,574 L1248,574 L1248,445" stroke="#1d2a3a" stroke-opacity="0.55" stroke-width="6" fill="none" stroke-linecap="round" stroke-linejoin="round"/>
<path d="M576.7,429.7 L576.7,574 L1248,574 L1248,445" stroke="#3aa59d" stroke-width="4" fill="none" stroke-linecap="round" stroke-linejoin="round"/>
<path d="M676,331 L836,331" stroke="#1d2a3a" stroke-opacity="0.55" stroke-width="6" fill="none" stroke-linecap="round" stroke-linejoin="round"/>
<path d="M676,331 L836,331" stroke="#3aa59d" stroke-width="4" fill="none" stroke-linecap="round" stroke-linejoin="round"/>
<path d="M866,331 L897,331" stroke="#1d2a3a" stroke-opacity="0.55" stroke-width="6" fill="none" stroke-linecap="round" stroke-linejoin="round"/>
<path d="M866,331 L897,331" stroke="#3aa59d" stroke-width="4" fill="none" stroke-linecap="round" stroke-linejoin="round"/>
<path d="M626,354 L676,354" stroke="#1d2a3a" stroke-opacity="0.55" stroke-width="6" fill="none" stroke-linecap="round" stroke-linejoin="round"/>
<path d="M626,354 L676,354" stroke="#3aa59d" stroke-width="4" fill="none" stroke-linecap="round" stroke-linejoin="round"/>
<path d="M630,391.9 L676,391.9" stroke="#1d2a3a" stroke-opacity="0.55" stroke-width="6" fill="none" stroke-linecap="round" stroke-linejoin="round"/>
<path d="M630,391.9 L676,391.9" stroke="#3aa59d" stroke-width="4" fill="none" stroke-linecap="round" stroke-linejoin="round"/>
<path d="M630,429.7 L676,429.7" stroke="#1d2a3a" stroke-opacity="0.55" stroke-width="6" fill="none" stroke-linecap="round" stroke-linejoin="round"/>
<path d="M630,429.7 L676,429.7" stroke="#3aa59d" stroke-width="4" fill="none" stroke-linecap="round" stroke-linejoin="round"/>
<path d="M858.6,688.75 L870,688.75 L878.75,681.25 L896.25,681.25 L903.75,688.75" stroke="#1d2a3a" stroke-opacity="0.55" stroke-width="6" fill="none" stroke-linecap="round" stroke-linejoin="round"/>
<path d="M858.6,688.75 L870,688.75 L878.75,681.25 L896.25,681.25 L903.75,688.75" stroke="#3aa59d" stroke-width="4" fill="none" stroke-linecap="round" stroke-linejoin="round"/>
<path d="M858.6,718.75 L930,718.75" stroke="#1d2a3a" stroke-opacity="0.55" stroke-width="6" fill="none" stroke-linecap="round" stroke-linejoin="round"/>
<path d="M858.6,718.75 L930,718.75" stroke="#3aa59d" stroke-width="4" fill="none" stroke-linecap="round" stroke-linejoin="round"/>
<path d="M668,292.8 L1202,292.8 L1202,316" stroke="#1d2a3a" stroke-opacity="0.55" stroke-width="6" fill="none" stroke-linecap="round" stroke-linejoin="round"/>
<path d="M668,292.8 L1202,292.8 L1202,316" stroke="#3ec6d6" stroke-width="4" fill="none" stroke-linecap="round" stroke-linejoin="round"/>
<path d="M668,292.8 L668,361.8 L630,361.8" stroke="#1d2a3a" stroke-opacity="0.55" stroke-width="6" fill="none" stroke-linecap="round" stroke-linejoin="round"/>
<path d="M668,292.8 L668,361.8 L630,361.8" stroke="#3ec6d6" stroke-width="4" fill="none" stroke-linecap="round" stroke-linejoin="round"/>
<path d="M630,323.6 L668,323.6" stroke="#1d2a3a" stroke-opacity="0.55" stroke-width="6" fill="none" stroke-linecap="round" stroke-linejoin="round"/>
<path d="M630,323.6 L668,323.6" stroke="#3ec6d6" stroke-width="4" fill="none" stroke-linecap="round" stroke-linejoin="round"/>
<path d="M157,338 L165,338 L165,606 L592,606 L592,621 L1280,621" stroke="#1d2a3a" stroke-opacity="0.55" stroke-width="6" fill="none" stroke-linecap="round" stroke-linejoin="round"/>
<path d="M157,338 L165,338 L165,606 L592,606 L592,621 L1280,621" stroke="#e06b4b" stroke-width="4" fill="none" stroke-linecap="round" stroke-linejoin="round"/>
<path d="M676,429.7 L676,606 L1280,606" stroke="#1d2a3a" stroke-opacity="0.55" stroke-width="6" fill="none" stroke-linecap="round" stroke-linejoin="round"/>
<path d="M676,429.7 L676,606 L1280,606" stroke="#e06b4b" stroke-width="4" fill="none" stroke-linecap="round" stroke-linejoin="round"/>
<path d="M836,339 L782,339 L782,567.8 L1280,567.8" stroke="#1d2a3a" stroke-opacity="0.55" stroke-width="6" fill="none" stroke-linecap="round" stroke-linejoin="round"/>
<path d="M836,339 L782,339 L782,567.8 L1280,567.8" stroke="#d84ad4" stroke-width="4" fill="none" stroke-linecap="round" stroke-linejoin="round"/>
<path d="M866,339 L897,339" stroke="#1d2a3a" stroke-opacity="0.55" stroke-width="6" fill="none" stroke-linecap="round" stroke-linejoin="round"/>
<path d="M866,339 L897,339" stroke="#d84ad4" stroke-width="4" fill="none" stroke-linecap="round" stroke-linejoin="round"/>
<path d="M797.5,285 L1209.7,285 L1209.7,552 L1280,552" stroke="#1d2a3a" stroke-opacity="0.55" stroke-width="6" fill="none" stroke-linecap="round" stroke-linejoin="round"/>
<path d="M797.5,285 L1209.7,285 L1209.7,552 L1280,552" stroke="#9451d6" stroke-width="4" fill="none" stroke-linecap="round" stroke-linejoin="round"/>
<path d="M1209.7,293.3 L1280,293.3" stroke="#1d2a3a" stroke-opacity="0.55" stroke-width="6" fill="none" stroke-linecap="round" stroke-linejoin="round"/>
<path d="M1209.7,293.3 L1280,293.3" stroke="#9451d6" stroke-width="4" fill="none" stroke-linecap="round" stroke-linejoin="round"/>
<path d="M736.2,354 L736.2,590 L1280,590" stroke="#1d2a3a" stroke-opacity="0.55" stroke-width="6" fill="none" stroke-linecap="round" stroke-linejoin="round"/>
<path d="M736.2,354 L736.2,590 L1280,590" stroke="#4fd883" stroke-width="4" fill="none" stroke-linecap="round" stroke-linejoin="round"/>
<path d="M447,95 L462,95" stroke="#1d2a3a" stroke-opacity="0.55" stroke-width="6" fill="none" stroke-linecap="round" stroke-linejoin="round"/>
<path d="M447,95 L462,95" stroke="#4da3d8" stroke-width="4" fill="none" stroke-linecap="round" stroke-linejoin="round"/>
<path d="M455,316 L455,285.3 L478,285.3" stroke="#1d2a3a" stroke-opacity="0.55" stroke-width="6" fill="none" stroke-linecap="round" stroke-linejoin="round"/>
<path d="M455,316 L455,285.3 L478,285.3" stroke="#4da3d8" stroke-width="4" fill="none" stroke-linecap="round" stroke-linejoin="round"/>
<path d="M629,147.8 L546,147.8 L546,316" stroke="#1d2a3a" stroke-opacity="0.55" stroke-width="6" fill="none" stroke-linecap="round" stroke-linejoin="round"/>
<path d="M629,147.8 L546,147.8 L546,316" stroke="#dfdf58" stroke-width="4" fill="none" stroke-linecap="round" stroke-linejoin="round"/>
<path d="M630,186 L630,194 L553.75,194 L553.75,354 L614.5,354" stroke="#1d2a3a" stroke-opacity="0.55" stroke-width="6" fill="none" stroke-linecap="round" stroke-linejoin="round"/>
<path d="M630,186 L630,194 L553.75,194 L553.75,354 L614.5,354" stroke="#dfdf58" stroke-width="4" fill="none" stroke-linecap="round" stroke-linejoin="round"/>
<path d="M491,308.4 L553.75,308.4" stroke="#1d2a3a" stroke-opacity="0.55" stroke-width="6" fill="none" stroke-linecap="round" stroke-linejoin="round"/>
<path d="M491,308.4 L553.75,308.4" stroke="#dfdf58" stroke-width="4" fill="none" stroke-linecap="round" stroke-linejoin="round"/>
<path d="M491,316 L614.7,316" stroke="#1d2a3a" stroke-opacity="0.55" stroke-width="6" fill="none" stroke-linecap="round" stroke-linejoin="round"/>
<path d="M491,316 L614.7,316" stroke="#dfdf58" stroke-width="4" fill="none" stroke-linecap="round" stroke-linejoin="round"/>
<path d="M157.7,353 L157.7,369.4" stroke="#1d2a3a" stroke-opacity="0.55" stroke-width="6" fill="none" stroke-linecap="round" stroke-linejoin="round"/>
<path d="M157.7,353 L157.7,369.4" stroke="#dfdf58" stroke-width="4" fill="none" stroke-linecap="round" stroke-linejoin="round"/>
<path d="M112,277 L89,277 L89,369.4 L157.7,369.4 L157.7,613 L1280,613" stroke="#1d2a3a" stroke-opacity="0.55" stroke-width="6" fill="none" stroke-linecap="round" stroke-linejoin="round"/>
<path d="M112,277 L89,277 L89,369.4 L157.7,369.4 L157.7,613 L1280,613" stroke="#dfdf58" stroke-width="4" fill="none" stroke-linecap="round" stroke-linejoin="round"/>
<path d="M416.7,254.8 L1217,254.8 L1217,277.6 L1280,277.6" stroke="#1d2a3a" stroke-opacity="0.55" stroke-width="6" fill="none" stroke-linecap="round" stroke-linejoin="round"/>
<path d="M416.7,254.8 L1217,254.8 L1217,277.6 L1280,277.6" stroke="#3dbd3a" stroke-width="4" fill="none" stroke-linecap="round" stroke-linejoin="round"/>
<path d="M416.7,254.8 L416.7,316" stroke="#1d2a3a" stroke-opacity="0.55" stroke-width="6" fill="none" stroke-linecap="round" stroke-linejoin="round"/>
<path d="M416.7,254.8 L416.7,316" stroke="#3dbd3a" stroke-width="4" fill="none" stroke-linecap="round" stroke-linejoin="round"/>
<path d="M386,316 L424,316" stroke="#1d2a3a" stroke-opacity="0.55" stroke-width="6" fill="none" stroke-linecap="round" stroke-linejoin="round"/>
<path d="M386,316 L424,316" stroke="#3dbd3a" stroke-width="4" fill="none" stroke-linecap="round" stroke-linejoin="round"/>
<path d="M386,323.6 L614,323.6" stroke="#1d2a3a" stroke-opacity="0.55" stroke-width="6" fill="none" stroke-linecap="round" stroke-linejoin="round"/>
<path d="M386,323.6 L614,323.6" stroke="#3dbd3a" stroke-width="4" fill="none" stroke-linecap="round" stroke-linejoin="round"/>
<path d="M386,331.4 L531,331.4 L531,361.8 L614.5,361.8" stroke="#1d2a3a" stroke-opacity="0.55" stroke-width="6" fill="none" stroke-linecap="round" stroke-linejoin="round"/>
<path d="M386,331.4 L531,331.4 L531,361.8 L614.5,361.8" stroke="#3dbd3a" stroke-width="4" fill="none" stroke-linecap="round" stroke-linejoin="round"/>
<path d="M386,338.75 L523.4,338.75 L523.4,391.9 L614.5,391.9" stroke="#1d2a3a" stroke-opacity="0.55" stroke-width="6" fill="none" stroke-linecap="round" stroke-linejoin="round"/>
<path d="M386,338.75 L523.4,338.75 L523.4,391.9 L614.5,391.9" stroke="#3dbd3a" stroke-width="4" fill="none" stroke-linecap="round" stroke-linejoin="round"/>
<path d="M1095,315.6 L1280,315.6" stroke="#1d2a3a" stroke-opacity="0.55" stroke-width="6" fill="none" stroke-linecap="round" stroke-linejoin="round"/>
<path d="M1095,315.6 L1280,315.6" stroke="#3dbd3a" stroke-width="4" fill="none" stroke-linecap="round" stroke-linejoin="round"/>
<path d="M1217,315.6 L1217,446" stroke="#1d2a3a" stroke-opacity="0.55" stroke-width="6" fill="none" stroke-linecap="round" stroke-linejoin="round"/>
<path d="M1217,315.6 L1217,446" stroke="#3dbd3a" stroke-width="4" fill="none" stroke-linecap="round" stroke-linejoin="round"/>
<path d="M333,178.3 L446,178.3" stroke="#1d2a3a" stroke-opacity="0.55" stroke-width="6" fill="none" stroke-linecap="round" stroke-linejoin="round"/>
<path d="M333,178.3 L446,178.3" stroke="#f0f0f0" stroke-width="4" fill="none" stroke-linecap="round" stroke-linejoin="round"/>
<path d="M386,111 L386,247" stroke="#1d2a3a" stroke-opacity="0.55" stroke-width="6" fill="none" stroke-linecap="round" stroke-linejoin="round"/>
<path d="M386,111 L386,247" stroke="#f0f0f0" stroke-width="4" fill="none" stroke-linecap="round" stroke-linejoin="round"/>
<path d="M358,125 L386,125" stroke="#1d2a3a" stroke-opacity="0.55" stroke-width="6" fill="none" stroke-linecap="round" stroke-linejoin="round"/>
<path d="M358,125 L386,125" stroke="#f0f0f0" stroke-width="4" fill="none" stroke-linecap="round" stroke-linejoin="round"/>
<path d="M431.5,118 L431.5,201.7" stroke="#1d2a3a" stroke-opacity="0.55" stroke-width="6" fill="none" stroke-linecap="round" stroke-linejoin="round"/>
<path d="M431.5,118 L431.5,201.7" stroke="#f0f0f0" stroke-width="4" fill="none" stroke-linecap="round" stroke-linejoin="round"/>
<path d="M386,148.6 L478,148.6 L478,232" stroke="#1d2a3a" stroke-opacity="0.55" stroke-width="6" fill="none" stroke-linecap="round" stroke-linejoin="round"/>
<path d="M386,148.6 L478,148.6 L478,232" stroke="#f0f0f0" stroke-width="4" fill="none" stroke-linecap="round" stroke-linejoin="round"/>
<path d="M355.8,201.7 L431.6,201.7" stroke="#1d2a3a" stroke-opacity="0.55" stroke-width="6" fill="none" stroke-linecap="round" stroke-linejoin="round"/>
<path d="M355.8,201.7 L431.6,201.7" stroke="#f0f0f0" stroke-width="4" fill="none" stroke-linecap="round" stroke-linejoin="round"/>
<path d="M333,178.3 L333,216.5 L424.5,216.5 L424.5,208.75 L691,208.75 L691,186" stroke="#1d2a3a" stroke-opacity="0.55" stroke-width="6" fill="none" stroke-linecap="round" stroke-linejoin="round"/>
<path d="M333,178.3 L333,216.5 L424.5,216.5 L424.5,208.75 L691,208.75 L691,186" stroke="#f0f0f0" stroke-width="4" fill="none" stroke-linecap="round" stroke-linejoin="round"/>
<path d="M386,194 L416.7,194 L416.7,224" stroke="#1d2a3a" stroke-opacity="0.55" stroke-width="6" fill="none" stroke-linecap="round" stroke-linejoin="round"/>
<path d="M386,194 L416.7,194 L416.7,224" stroke="#f0f0f0" stroke-width="4" fill="none" stroke-linecap="round" stroke-linejoin="round"/>
<path d="M401,216.5 L401,415 L698,415" stroke="#1d2a3a" stroke-opacity="0.55" stroke-width="6" fill="none" stroke-linecap="round" stroke-linejoin="round"/>
<path d="M401,216.5 L401,415 L698,415" stroke="#f0f0f0" stroke-width="4" fill="none" stroke-linecap="round" stroke-linejoin="round"/>
<path d="M401,239 L413,239" stroke="#1d2a3a" stroke-opacity="0.55" stroke-width="6" fill="none" stroke-linecap="round" stroke-linejoin="round"/>
<path d="M401,239 L413,239" stroke="#f0f0f0" stroke-width="4" fill="none" stroke-linecap="round" stroke-linejoin="round"/>
<path d="M386,247 L714,247 L714,232" stroke="#1d2a3a" stroke-opacity="0.55" stroke-width="6" fill="none" stroke-linecap="round" stroke-linejoin="round"/>
<path d="M386,247 L714,247 L714,232" stroke="#f0f0f0" stroke-width="4" fill="none" stroke-linecap="round" stroke-linejoin="round"/>
<path d="M806,247 L1224.5,247 L1224.5,270.3 L1280,270.3" stroke="#1d2a3a" stroke-opacity="0.55" stroke-width="6" fill="none" stroke-linecap="round" stroke-linejoin="round"/>
<path d="M806,247 L1224.5,247 L1224.5,270.3 L1280,270.3" stroke="#f0f0f0" stroke-width="4" fill="none" stroke-linecap="round" stroke-linejoin="round"/>
<path d="M469.8,163.4 L469.8,225 L485,225" stroke="#1d2a3a" stroke-opacity="0.55" stroke-width="6" fill="none" stroke-linecap="round" stroke-linejoin="round"/>
<path d="M469.8,163.4 L469.8,225 L485,225" stroke="#f0f0f0" stroke-width="4" fill="none" stroke-linecap="round" stroke-linejoin="round"/>
<path d="M470,163.4 L500,163.4" stroke="#1d2a3a" stroke-opacity="0.55" stroke-width="6" fill="none" stroke-linecap="round" stroke-linejoin="round"/>
<path d="M470,163.4 L500,163.4" stroke="#f0f0f0" stroke-width="4" fill="none" stroke-linecap="round" stroke-linejoin="round"/>
<path d="M470,179 L493,179 L493,194" stroke="#1d2a3a" stroke-opacity="0.55" stroke-width="6" fill="none" stroke-linecap="round" stroke-linejoin="round"/>
<path d="M470,179 L493,179 L493,194" stroke="#f0f0f0" stroke-width="4" fill="none" stroke-linecap="round" stroke-linejoin="round"/>
<path d="M524,170.5 L524,300.6 L491,300.6" stroke="#1d2a3a" stroke-opacity="0.55" stroke-width="6" fill="none" stroke-linecap="round" stroke-linejoin="round"/>
<path d="M524,170.5 L524,300.6 L491,300.6" stroke="#f0f0f0" stroke-width="4" fill="none" stroke-linecap="round" stroke-linejoin="round"/>
<path d="M516,201 L516,293 L491,293" stroke="#1d2a3a" stroke-opacity="0.55" stroke-width="6" fill="none" stroke-linecap="round" stroke-linejoin="round"/>
<path d="M516,201 L516,293 L491,293" stroke="#f0f0f0" stroke-width="4" fill="none" stroke-linecap="round" stroke-linejoin="round"/>
<path d="M478,232 L490,240" stroke="#1d2a3a" stroke-opacity="0.55" stroke-width="6" fill="none" stroke-linecap="round" stroke-linejoin="round"/>
<path d="M478,232 L490,240" stroke="#f0f0f0" stroke-width="4" fill="none" stroke-linecap="round" stroke-linejoin="round"/>
<path d="M508,232 L508,285.6 L491,285.6" stroke="#1d2a3a" stroke-opacity="0.55" stroke-width="6" fill="none" stroke-linecap="round" stroke-linejoin="round"/>
<path d="M508,232 L508,285.6 L491,285.6" stroke="#f0f0f0" stroke-width="4" fill="none" stroke-linecap="round" stroke-linejoin="round"/>
<path d="M508,232 L661,232 L661,240 L806,240 L806,247" stroke="#1d2a3a" stroke-opacity="0.55" stroke-width="6" fill="none" stroke-linecap="round" stroke-linejoin="round"/>
<path d="M508,232 L661,232 L661,240 L806,240 L806,247" stroke="#f0f0f0" stroke-width="4" fill="none" stroke-linecap="round" stroke-linejoin="round"/>
<path d="M460,239.5 L584.5,239.5 L584.5,385 L597,385" stroke="#1d2a3a" stroke-opacity="0.55" stroke-width="6" fill="none" stroke-linecap="round" stroke-linejoin="round"/>
<path d="M460,239.5 L584.5,239.5 L584.5,385 L597,385" stroke="#f0f0f0" stroke-width="4" fill="none" stroke-linecap="round" stroke-linejoin="round"/>
<path d="M683.5,247 L683.5,385" stroke="#1d2a3a" stroke-opacity="0.55" stroke-width="6" fill="none" stroke-linecap="round" stroke-linejoin="round"/>
<path d="M683.5,247 L683.5,385" stroke="#f0f0f0" stroke-width="4" fill="none" stroke-linecap="round" stroke-linejoin="round"/>
<path d="M683.5,399.6 L698,399.6" stroke="#1d2a3a" stroke-opacity="0.55" stroke-width="6" fill="none" stroke-linecap="round" stroke-linejoin="round"/>
<path d="M683.5,399.6 L698,399.6" stroke="#f0f0f0" stroke-width="4" fill="none" stroke-linecap="round" stroke-linejoin="round"/>
<path d="M706.4,323 L706.4,369 L722.5,369 L722.5,407.3" stroke="#1d2a3a" stroke-opacity="0.55" stroke-width="6" fill="none" stroke-linecap="round" stroke-linejoin="round"/>
<path d="M706.4,323 L706.4,369 L722.5,369 L722.5,407.3" stroke="#f0f0f0" stroke-width="4" fill="none" stroke-linecap="round" stroke-linejoin="round"/>
<path d="M622,415 L622,425" stroke="#1d2a3a" stroke-opacity="0.55" stroke-width="6" fill="none" stroke-linecap="round" stroke-linejoin="round"/>
<path d="M622,415 L622,425" stroke="#f0f0f0" stroke-width="4" fill="none" stroke-linecap="round" stroke-linejoin="round"/>
<path d="M584.5,307.8 L597,307.8" stroke="#1d2a3a" stroke-opacity="0.55" stroke-width="6" fill="none" stroke-linecap="round" stroke-linejoin="round"/>
<path d="M584.5,307.8 L597,307.8" stroke="#f0f0f0" stroke-width="4" fill="none" stroke-linecap="round" stroke-linejoin="round"/>
<path d="M584.5,346.7 L597,346.7" stroke="#1d2a3a" stroke-opacity="0.55" stroke-width="6" fill="none" stroke-linecap="round" stroke-linejoin="round"/>
<path d="M584.5,346.7 L597,346.7" stroke="#f0f0f0" stroke-width="4" fill="none" stroke-linecap="round" stroke-linejoin="round"/>
<path d="M843.75,346 L843.75,720" stroke="#1d2a3a" stroke-opacity="0.55" stroke-width="6" fill="none" stroke-linecap="round" stroke-linejoin="round"/>
<path d="M843.75,346 L843.75,720" stroke="#e3a85a" stroke-width="4" fill="none" stroke-linecap="round" stroke-linejoin="round"/>
<path d="M851,346 L851,720" stroke="#1d2a3a" stroke-opacity="0.55" stroke-width="6" fill="none" stroke-linecap="round" stroke-linejoin="round"/>
<path d="M851,346 L851,720" stroke="#e3a85a" stroke-width="4" fill="none" stroke-linecap="round" stroke-linejoin="round"/>
<path d="M858.6,346 L858.6,720" stroke="#1d2a3a" stroke-opacity="0.55" stroke-width="6" fill="none" stroke-linecap="round" stroke-linejoin="round"/>
<path d="M858.6,346 L858.6,720" stroke="#3aa59d" stroke-width="4" fill="none" stroke-linecap="round" stroke-linejoin="round"/>
<path d="M828,339 L828,720" stroke="#1d2a3a" stroke-opacity="0.55" stroke-width="6" fill="none" stroke-linecap="round" stroke-linejoin="round"/>
<path d="M828,339 L828,720" stroke="#d84ad4" stroke-width="4" fill="none" stroke-linecap="round" stroke-linejoin="round"/>
<path d="M1202,315.6 L1202,720" stroke="#1d2a3a" stroke-opacity="0.55" stroke-width="6" fill="none" stroke-linecap="round" stroke-linejoin="round"/>
<path d="M1202,315.6 L1202,720" stroke="#3dbd3a" stroke-width="4" fill="none" stroke-linecap="round" stroke-linejoin="round"/>
<circle cx="210" cy="56.5" r="2.6" fill="#e67e65"/>
<circle cx="561.5" cy="94.5" r="4" fill="#ecc693" stroke="#1d2a3a" stroke-opacity="0.5" stroke-width="1"/>
<circle cx="561.5" cy="94.5" r="1.7" fill="#44321b"/>
<circle cx="141" cy="140.5" r="4" fill="#ecc693" stroke="#1d2a3a" stroke-opacity="0.5" stroke-width="1"/>
<circle cx="141" cy="140.5" r="1.7" fill="#44321b"/>
<circle cx="309" cy="140.5" r="2.6" fill="#e67e65"/>
<circle cx="141" cy="218" r="2.6" fill="#e67e65"/>
<circle cx="141" cy="232" r="2.6" fill="#e67e65"/>
<circle cx="127" cy="277" r="2.6" fill="#e67e65"/>
<circle cx="119" cy="300.3" r="2.6" fill="#e67e65"/>
<circle cx="142.5" cy="300.3" r="4" fill="#ecc693" stroke="#1d2a3a" stroke-opacity="0.5" stroke-width="1"/>
<circle cx="142.5" cy="300.3" r="1.7" fill="#44321b"/>
<circle cx="142.5" cy="308" r="2.6" fill="#e67e65"/>
<circle cx="334" cy="140.5" r="2.6" fill="#e67e65"/>
<circle cx="508" cy="140.5" r="4" fill="#ecc693" stroke="#1d2a3a" stroke-opacity="0.5" stroke-width="1"/>
<circle cx="508" cy="140.5" r="1.7" fill="#44321b"/>
<circle cx="508" cy="87" r="4" fill="#ecc693" stroke="#1d2a3a" stroke-opacity="0.5" stroke-width="1"/>
<circle cx="508" cy="87" r="1.7" fill="#44321b"/>
<circle cx="386" cy="87" r="2.6" fill="#e67e65"/>
<circle cx="424" cy="87" r="2.6" fill="#e67e65"/>
<circle cx="401" cy="111" r="2.6" fill="#e67e65"/>
<circle cx="401" cy="141" r="4" fill="#ecc693" stroke="#1d2a3a" stroke-opacity="0.5" stroke-width="1"/>
<circle cx="401" cy="141" r="1.7" fill="#44321b"/>
<circle cx="416" cy="72" r="2.6" fill="#e67e65"/>
<circle cx="448" cy="72" r="2.6" fill="#e67e65"/>
<circle cx="500" cy="72" r="2.6" fill="#e67e65"/>
<circle cx="592" cy="72" r="4" fill="#ecc693" stroke="#1d2a3a" stroke-opacity="0.5" stroke-width="1"/>
<circle cx="592" cy="72" r="1.7" fill="#44321b"/>
<circle cx="592" cy="285" r="4" fill="#ecc693" stroke="#1d2a3a" stroke-opacity="0.5" stroke-width="1"/>
<circle cx="592" cy="285" r="1.7" fill="#44321b"/>
<circle cx="592" cy="133" r="4" fill="#ecc693" stroke="#1d2a3a" stroke-opacity="0.5" stroke-width="1"/>
<circle cx="592" cy="133" r="1.7" fill="#44321b"/>
<circle cx="650" cy="133" r="2.6" fill="#e67e65"/>
<circle cx="500" cy="80" r="2.6" fill="#e67e65"/>
<circle cx="577" cy="80" r="4" fill="#ecc693" stroke="#1d2a3a" stroke-opacity="0.5" stroke-width="1"/>
<circle cx="577" cy="80" r="1.7" fill="#44321b"/>
<circle cx="577" cy="330" r="4" fill="#ecc693" stroke="#1d2a3a" stroke-opacity="0.5" stroke-width="1"/>
<circle cx="577" cy="330" r="1.7" fill="#44321b"/>
<circle cx="590" cy="330" r="2.6" fill="#e67e65"/>
<circle cx="500" cy="87" r="2.6" fill="#e67e65"/>
<circle cx="561.5" cy="87" r="4" fill="#ecc693" stroke="#1d2a3a" stroke-opacity="0.5" stroke-width="1"/>
<circle cx="561.5" cy="87" r="1.7" fill="#44321b"/>
<circle cx="561.5" cy="369.5" r="4" fill="#ecc693" stroke="#1d2a3a" stroke-opacity="0.5" stroke-width="1"/>
<circle cx="561.5" cy="369.5" r="1.7" fill="#44321b"/>
<circle cx="599" cy="369.5" r="2.6" fill="#e67e65"/>
<circle cx="524" cy="155.6" r="2.6" fill="#e67e65"/>
<circle cx="592" cy="155.6" r="4" fill="#ecc693" stroke="#1d2a3a" stroke-opacity="0.5" stroke-width="1"/>
<circle cx="592" cy="155.6" r="1.7" fill="#44321b"/>
<circle cx="577" cy="171" r="4" fill="#ecc693" stroke="#1d2a3a" stroke-opacity="0.5" stroke-width="1"/>
<circle cx="577" cy="171" r="1.7" fill="#44321b"/>
<circle cx="653" cy="171" r="2.6" fill="#e67e65"/>
<circle cx="516" cy="186.5" r="2.6" fill="#e67e65"/>
<circle cx="577" cy="186.5" r="4" fill="#ecc693" stroke="#1d2a3a" stroke-opacity="0.5" stroke-width="1"/>
<circle cx="577" cy="186.5" r="1.7" fill="#44321b"/>
<circle cx="508" cy="216.6" r="2.6" fill="#e67e65"/>
<circle cx="561.5" cy="216.6" r="4" fill="#ecc693" stroke="#1d2a3a" stroke-opacity="0.5" stroke-width="1"/>
<circle cx="561.5" cy="216.6" r="1.7" fill="#44321b"/>
<circle cx="676" cy="140.6" r="2.6" fill="#e67e65"/>
<circle cx="691" cy="140.6" r="4" fill="#ecc693" stroke="#1d2a3a" stroke-opacity="0.5" stroke-width="1"/>
<circle cx="691" cy="140.6" r="1.7" fill="#44321b"/>
<circle cx="691" cy="171" r="2.6" fill="#e67e65"/>
<circle cx="676" cy="179" r="2.6" fill="#e67e65"/>
<circle cx="691" cy="179" r="2.6" fill="#e67e65"/>
<circle cx="714" cy="179" r="2.6" fill="#e67e65"/>
<circle cx="752" cy="179" r="4" fill="#ecc693" stroke="#1d2a3a" stroke-opacity="0.5" stroke-width="1"/>
<circle cx="752" cy="179" r="1.7" fill="#44321b"/>
<circle cx="752" cy="193" r="2.6" fill="#e67e65"/>
<circle cx="775" cy="201" r="2.6" fill="#e67e65"/>
<circle cx="775" cy="224.5" r="4" fill="#ecc693" stroke="#1d2a3a" stroke-opacity="0.5" stroke-width="1"/>
<circle cx="775" cy="224.5" r="1.7" fill="#44321b"/>
<circle cx="752" cy="224.5" r="4" fill="#ecc693" stroke="#1d2a3a" stroke-opacity="0.5" stroke-width="1"/>
<circle cx="752" cy="224.5" r="1.7" fill="#44321b"/>
<circle cx="752" cy="315.5" r="4" fill="#ecc693" stroke="#1d2a3a" stroke-opacity="0.5" stroke-width="1"/>
<circle cx="752" cy="315.5" r="1.7" fill="#44321b"/>
<circle cx="797" cy="315.5" r="2.6" fill="#e67e65"/>
<circle cx="721" cy="209" r="2.6" fill="#e67e65"/>
<circle cx="752" cy="209" r="2.6" fill="#e67e65"/>
<circle cx="729" cy="232" r="2.6" fill="#e67e65"/>
<circle cx="729" cy="285" r="4" fill="#ecc693" stroke="#1d2a3a" stroke-opacity="0.5" stroke-width="1"/>
<circle cx="729" cy="285" r="1.7" fill="#44321b"/>
<circle cx="729" cy="300.5" r="4" fill="#ecc693" stroke="#1d2a3a" stroke-opacity="0.5" stroke-width="1"/>
<circle cx="729" cy="300.5" r="1.7" fill="#44321b"/>
<circle cx="729" cy="338" r="4" fill="#ecc693" stroke="#1d2a3a" stroke-opacity="0.5" stroke-width="1"/>
<circle cx="729" cy="338" r="1.7" fill="#44321b"/>
<circle cx="737" cy="338" r="2.6" fill="#e67e65"/>
<circle cx="561.5" cy="285" r="4" fill="#ecc693" stroke="#1d2a3a" stroke-opacity="0.5" stroke-width="1"/>
<circle cx="561.5" cy="285" r="1.7" fill="#44321b"/>
<circle cx="706.4" cy="285" r="4" fill="#ecc693" stroke="#1d2a3a" stroke-opacity="0.5" stroke-width="1"/>
<circle cx="706.4" cy="285" r="1.7" fill="#44321b"/>
<circle cx="706.4" cy="308" r="2.6" fill="#e67e65"/>
<circle cx="759.5" cy="300.5" r="4" fill="#ecc693" stroke="#1d2a3a" stroke-opacity="0.5" stroke-width="1"/>
<circle cx="759.5" cy="300.5" r="1.7" fill="#44321b"/>
<circle cx="759.5" cy="285" r="4" fill="#ecc693" stroke="#1d2a3a" stroke-opacity="0.5" stroke-width="1"/>
<circle cx="759.5" cy="285" r="1.7" fill="#44321b"/>
<circle cx="797.5" cy="285" r="2.6" fill="#e67e65"/>
<circle cx="759.5" cy="323.3" r="4" fill="#ecc693" stroke="#1d2a3a" stroke-opacity="0.5" stroke-width="1"/>
<circle cx="759.5" cy="323.3" r="1.7" fill="#44321b"/>
<circle cx="836" cy="323.3" r="2.6" fill="#e67e65"/>
<circle cx="773.8" cy="285" r="4" fill="#ecc693" stroke="#1d2a3a" stroke-opacity="0.5" stroke-width="1"/>
<circle cx="773.8" cy="285" r="1.7" fill="#44321b"/>
<circle cx="773.8" cy="323.3" r="4" fill="#ecc693" stroke="#1d2a3a" stroke-opacity="0.5" stroke-width="1"/>
<circle cx="773.8" cy="323.3" r="1.7" fill="#44321b"/>
<circle cx="821" cy="308" r="2.6" fill="#e67e65"/>
<circle cx="828" cy="308" r="4" fill="#ecc693" stroke="#1d2a3a" stroke-opacity="0.5" stroke-width="1"/>
<circle cx="828" cy="308" r="1.7" fill="#44321b"/>
<circle cx="828" cy="315.5" r="4" fill="#ecc693" stroke="#1d2a3a" stroke-opacity="0.5" stroke-width="1"/>
<circle cx="828" cy="315.5" r="1.7" fill="#44321b"/>
<circle cx="836" cy="315.5" r="2.6" fill="#e67e65"/>
<circle cx="759.5" cy="346.7" r="2.6" fill="#e67e65"/>
<circle cx="843.75" cy="346" r="2.6" fill="#e67e65"/>
<circle cx="851" cy="346" r="2.6" fill="#e67e65"/>
<circle cx="866" cy="315.5" r="2.6" fill="#e67e65"/>
<circle cx="897" cy="315.5" r="2.6" fill="#e67e65"/>
<circle cx="866" cy="323.3" r="2.6" fill="#e67e65"/>
<circle cx="897" cy="323.3" r="2.6" fill="#e67e65"/>
<circle cx="851" cy="643.75" r="4" fill="#ecc693" stroke="#1d2a3a" stroke-opacity="0.5" stroke-width="1"/>
<circle cx="851" cy="643.75" r="1.7" fill="#44321b"/>
<circle cx="927.5" cy="643.75" r="2.6" fill="#e67e65"/>
<circle cx="950" cy="651" r="2.6" fill="#e67e65"/>
<circle cx="950" cy="688.75" r="4" fill="#ecc693" stroke="#1d2a3a" stroke-opacity="0.5" stroke-width="1"/>
<circle cx="950" cy="688.75" r="1.7" fill="#44321b"/>
<circle cx="920" cy="658.75" r="4" fill="#ecc693" stroke="#1d2a3a" stroke-opacity="0.5" stroke-width="1"/>
<circle cx="920" cy="658.75" r="1.7" fill="#44321b"/>
<circle cx="927.5" cy="658.75" r="2.6" fill="#e67e65"/>
<circle cx="957.5" cy="681.25" r="2.6" fill="#e67e65"/>
<circle cx="1095" cy="681.25" r="2.6" fill="#e67e65"/>
<circle cx="927.5" cy="688.75" r="2.6" fill="#e67e65"/>
<circle cx="1095" cy="688.75" r="2.6" fill="#e67e65"/>
<circle cx="172.5" cy="346" r="4" fill="#7ec4bf" stroke="#1d2a3a" stroke-opacity="0.5" stroke-width="1"/>
<circle cx="172.5" cy="346" r="1.7" fill="#11312f"/>
<circle cx="172.5" cy="598" r="4" fill="#7ec4bf" stroke="#1d2a3a" stroke-opacity="0.5" stroke-width="1"/>
<circle cx="172.5" cy="598" r="1.7" fill="#11312f"/>
<circle cx="127" cy="315.6" r="2.6" fill="#80a9ae"/>
<circle cx="127" cy="346.4" r="4" fill="#7ec4bf" stroke="#1d2a3a" stroke-opacity="0.5" stroke-width="1"/>
<circle cx="127" cy="346.4" r="1.7" fill="#11312f"/>
<circle cx="188" cy="346.4" r="4" fill="#7ec4bf" stroke="#1d2a3a" stroke-opacity="0.5" stroke-width="1"/>
<circle cx="188" cy="346.4" r="1.7" fill="#11312f"/>
<circle cx="188" cy="315.6" r="4" fill="#7ec4bf" stroke="#1d2a3a" stroke-opacity="0.5" stroke-width="1"/>
<circle cx="188" cy="315.6" r="1.7" fill="#11312f"/>
<circle cx="626" cy="316" r="2.6" fill="#80a9ae"/>
<circle cx="676" cy="316" r="4" fill="#7ec4bf" stroke="#1d2a3a" stroke-opacity="0.5" stroke-width="1"/>
<circle cx="676" cy="316" r="1.7" fill="#11312f"/>
<circle cx="676" cy="429.7" r="4" fill="#7ec4bf" stroke="#1d2a3a" stroke-opacity="0.5" stroke-width="1"/>
<circle cx="676" cy="429.7" r="1.7" fill="#11312f"/>
<circle cx="576.7" cy="429.7" r="4" fill="#7ec4bf" stroke="#1d2a3a" stroke-opacity="0.5" stroke-width="1"/>
<circle cx="576.7" cy="429.7" r="1.7" fill="#11312f"/>
<circle cx="576.7" cy="574" r="4" fill="#7ec4bf" stroke="#1d2a3a" stroke-opacity="0.5" stroke-width="1"/>
<circle cx="576.7" cy="574" r="1.7" fill="#11312f"/>
<circle cx="1248" cy="574" r="4" fill="#7ec4bf" stroke="#1d2a3a" stroke-opacity="0.5" stroke-width="1"/>
<circle cx="1248" cy="574" r="1.7" fill="#11312f"/>
<circle cx="1248" cy="445" r="2.6" fill="#80a9ae"/>
<circle cx="676" cy="331" r="4" fill="#7ec4bf" stroke="#1d2a3a" stroke-opacity="0.5" stroke-width="1"/>
<circle cx="676" cy="331" r="1.7" fill="#11312f"/>
<circle cx="836" cy="331" r="2.6" fill="#80a9ae"/>
<circle cx="858.6" cy="346" r="2.6" fill="#80a9ae"/>
<circle cx="866" cy="331" r="2.6" fill="#80a9ae"/>
<circle cx="897" cy="331" r="2.6" fill="#80a9ae"/>
<circle cx="626" cy="354" r="2.6" fill="#80a9ae"/>
<circle cx="676" cy="354" r="4" fill="#7ec4bf" stroke="#1d2a3a" stroke-opacity="0.5" stroke-width="1"/>
<circle cx="676" cy="354" r="1.7" fill="#11312f"/>
<circle cx="630" cy="391.9" r="2.6" fill="#80a9ae"/>
<circle cx="676" cy="391.9" r="4" fill="#7ec4bf" stroke="#1d2a3a" stroke-opacity="0.5" stroke-width="1"/>
<circle cx="676" cy="391.9" r="1.7" fill="#11312f"/>
<circle cx="630" cy="429.7" r="4" fill="#7ec4bf" stroke="#1d2a3a" stroke-opacity="0.5" stroke-width="1"/>
<circle cx="630" cy="429.7" r="1.7" fill="#11312f"/>
<circle cx="858.6" cy="688.75" r="4" fill="#7ec4bf" stroke="#1d2a3a" stroke-opacity="0.5" stroke-width="1"/>
<circle cx="858.6" cy="688.75" r="1.7" fill="#11312f"/>
<circle cx="870" cy="688.75" r="4" fill="#7ec4bf" stroke="#1d2a3a" stroke-opacity="0.5" stroke-width="1"/>
<circle cx="870" cy="688.75" r="1.7" fill="#11312f"/>
<circle cx="878.75" cy="681.25" r="4" fill="#7ec4bf" stroke="#1d2a3a" stroke-opacity="0.5" stroke-width="1"/>
<circle cx="878.75" cy="681.25" r="1.7" fill="#11312f"/>
<circle cx="896.25" cy="681.25" r="4" fill="#7ec4bf" stroke="#1d2a3a" stroke-opacity="0.5" stroke-width="1"/>
<circle cx="896.25" cy="681.25" r="1.7" fill="#11312f"/>
<circle cx="903.75" cy="688.75" r="2.6" fill="#80a9ae"/>
<circle cx="858.6" cy="718.75" r="4" fill="#7ec4bf" stroke="#1d2a3a" stroke-opacity="0.5" stroke-width="1"/>
<circle cx="858.6" cy="718.75" r="1.7" fill="#11312f"/>
<circle cx="930" cy="718.75" r="2.6" fill="#80a9ae"/>
<circle cx="668" cy="292.8" r="4" fill="#81d9e4" stroke="#1d2a3a" stroke-opacity="0.5" stroke-width="1"/>
<circle cx="668" cy="292.8" r="1.7" fill="#123b40"/>
<circle cx="1202" cy="292.8" r="4" fill="#81d9e4" stroke="#1d2a3a" stroke-opacity="0.5" stroke-width="1"/>
<circle cx="1202" cy="292.8" r="1.7" fill="#123b40"/>
<circle cx="1202" cy="316" r="2.6" fill="#72c2d0"/>
<circle cx="668" cy="361.8" r="4" fill="#81d9e4" stroke="#1d2a3a" stroke-opacity="0.5" stroke-width="1"/>
<circle cx="668" cy="361.8" r="1.7" fill="#123b40"/>
<circle cx="630" cy="361.8" r="2.6" fill="#72c2d0"/>
<circle cx="630" cy="323.6" r="2.6" fill="#72c2d0"/>
<circle cx="668" cy="323.6" r="4" fill="#81d9e4" stroke="#1d2a3a" stroke-opacity="0.5" stroke-width="1"/>
<circle cx="668" cy="323.6" r="1.7" fill="#123b40"/>
<circle cx="157" cy="338" r="2.6" fill="#ae5c4f"/>
<circle cx="165" cy="338" r="4" fill="#ea9e8a" stroke="#1d2a3a" stroke-opacity="0.5" stroke-width="1"/>
<circle cx="165" cy="338" r="1.7" fill="#432016"/>
<circle cx="165" cy="606" r="4" fill="#ea9e8a" stroke="#1d2a3a" stroke-opacity="0.5" stroke-width="1"/>
<circle cx="165" cy="606" r="1.7" fill="#432016"/>
<circle cx="592" cy="606" r="4" fill="#ea9e8a" stroke="#1d2a3a" stroke-opacity="0.5" stroke-width="1"/>
<circle cx="592" cy="606" r="1.7" fill="#432016"/>
<circle cx="592" cy="621" r="4" fill="#ea9e8a" stroke="#1d2a3a" stroke-opacity="0.5" stroke-width="1"/>
<circle cx="592" cy="621" r="1.7" fill="#432016"/>
<circle cx="676" cy="429.7" r="2.6" fill="#ae5c4f"/>
<circle cx="676" cy="606" r="4" fill="#ea9e8a" stroke="#1d2a3a" stroke-opacity="0.5" stroke-width="1"/>
<circle cx="676" cy="606" r="1.7" fill="#432016"/>
<circle cx="836" cy="339" r="2.6" fill="#e485d7"/>
<circle cx="782" cy="339" r="4" fill="#e589e3" stroke="#1d2a3a" stroke-opacity="0.5" stroke-width="1"/>
<circle cx="782" cy="339" r="1.7" fill="#40163f"/>
<circle cx="782" cy="567.8" r="4" fill="#e589e3" stroke="#1d2a3a" stroke-opacity="0.5" stroke-width="1"/>
<circle cx="782" cy="567.8" r="1.7" fill="#40163f"/>
<circle cx="828" cy="339" r="4" fill="#e589e3" stroke="#1d2a3a" stroke-opacity="0.5" stroke-width="1"/>
<circle cx="828" cy="339" r="1.7" fill="#40163f"/>
<circle cx="866" cy="339" r="2.6" fill="#e485d7"/>
<circle cx="897" cy="339" r="2.6" fill="#e485d7"/>
<circle cx="797.5" cy="285" r="2.6" fill="#a077c9"/>
<circle cx="1209.7" cy="285" r="4" fill="#b98de4" stroke="#1d2a3a" stroke-opacity="0.5" stroke-width="1"/>
<circle cx="1209.7" cy="285" r="1.7" fill="#2c1840"/>
<circle cx="1209.7" cy="552" r="4" fill="#b98de4" stroke="#1d2a3a" stroke-opacity="0.5" stroke-width="1"/>
<circle cx="1209.7" cy="552" r="1.7" fill="#2c1840"/>
<circle cx="1209.7" cy="293.3" r="4" fill="#b98de4" stroke="#1d2a3a" stroke-opacity="0.5" stroke-width="1"/>
<circle cx="1209.7" cy="293.3" r="1.7" fill="#2c1840"/>
<circle cx="736.2" cy="354" r="2.6" fill="#6ac993"/>
<circle cx="736.2" cy="590" r="4" fill="#8ce5ae" stroke="#1d2a3a" stroke-opacity="0.5" stroke-width="1"/>
<circle cx="736.2" cy="590" r="1.7" fill="#174027"/>
<circle cx="447" cy="95" r="2.6" fill="#85b5dd"/>
<circle cx="462" cy="95" r="2.6" fill="#85b5dd"/>
<circle cx="455" cy="316" r="2.6" fill="#85b5dd"/>
<circle cx="455" cy="285.3" r="4" fill="#8bc3e5" stroke="#1d2a3a" stroke-opacity="0.5" stroke-width="1"/>
<circle cx="455" cy="285.3" r="1.7" fill="#173040"/>
<circle cx="478" cy="285.3" r="2.6" fill="#85b5dd"/>
<circle cx="629" cy="147.8" r="2.6" fill="#92c85c"/>
<circle cx="546" cy="147.8" r="4" fill="#eaea92" stroke="#1d2a3a" stroke-opacity="0.5" stroke-width="1"/>
<circle cx="546" cy="147.8" r="1.7" fill="#42421a"/>
<circle cx="546" cy="316" r="4" fill="#eaea92" stroke="#1d2a3a" stroke-opacity="0.5" stroke-width="1"/>
<circle cx="546" cy="316" r="1.7" fill="#42421a"/>
<circle cx="630" cy="186" r="2.6" fill="#92c85c"/>
<circle cx="630" cy="194" r="4" fill="#eaea92" stroke="#1d2a3a" stroke-opacity="0.5" stroke-width="1"/>
<circle cx="630" cy="194" r="1.7" fill="#42421a"/>
<circle cx="553.75" cy="194" r="4" fill="#eaea92" stroke="#1d2a3a" stroke-opacity="0.5" stroke-width="1"/>
<circle cx="553.75" cy="194" r="1.7" fill="#42421a"/>
<circle cx="553.75" cy="354" r="4" fill="#eaea92" stroke="#1d2a3a" stroke-opacity="0.5" stroke-width="1"/>
<circle cx="553.75" cy="354" r="1.7" fill="#42421a"/>
<circle cx="614.5" cy="354" r="2.6" fill="#92c85c"/>
<circle cx="491" cy="308.4" r="2.6" fill="#92c85c"/>
<circle cx="553.75" cy="308.4" r="4" fill="#eaea92" stroke="#1d2a3a" stroke-opacity="0.5" stroke-width="1"/>
<circle cx="553.75" cy="308.4" r="1.7" fill="#42421a"/>
<circle cx="491" cy="316" r="2.6" fill="#92c85c"/>
<circle cx="614.7" cy="316" r="2.6" fill="#92c85c"/>
<circle cx="157.7" cy="353" r="2.6" fill="#92c85c"/>
<circle cx="157.7" cy="369.4" r="4" fill="#eaea92" stroke="#1d2a3a" stroke-opacity="0.5" stroke-width="1"/>
<circle cx="157.7" cy="369.4" r="1.7" fill="#42421a"/>
<circle cx="112" cy="277" r="2.6" fill="#92c85c"/>
<circle cx="89" cy="277" r="4" fill="#eaea92" stroke="#1d2a3a" stroke-opacity="0.5" stroke-width="1"/>
<circle cx="89" cy="277" r="1.7" fill="#42421a"/>
<circle cx="89" cy="369.4" r="4" fill="#eaea92" stroke="#1d2a3a" stroke-opacity="0.5" stroke-width="1"/>
<circle cx="89" cy="369.4" r="1.7" fill="#42421a"/>
<circle cx="157.7" cy="613" r="4" fill="#eaea92" stroke="#1d2a3a" stroke-opacity="0.5" stroke-width="1"/>
<circle cx="157.7" cy="613" r="1.7" fill="#42421a"/>
<circle cx="416.7" cy="254.8" r="4" fill="#80d47e" stroke="#1d2a3a" stroke-opacity="0.5" stroke-width="1"/>
<circle cx="416.7" cy="254.8" r="1.7" fill="#123811"/>
<circle cx="1217" cy="254.8" r="4" fill="#80d47e" stroke="#1d2a3a" stroke-opacity="0.5" stroke-width="1"/>
<circle cx="1217" cy="254.8" r="1.7" fill="#123811"/>
<circle cx="1217" cy="277.6" r="4" fill="#80d47e" stroke="#1d2a3a" stroke-opacity="0.5" stroke-width="1"/>
<circle cx="1217" cy="277.6" r="1.7" fill="#123811"/>
<circle cx="416.7" cy="316" r="4" fill="#80d47e" stroke="#1d2a3a" stroke-opacity="0.5" stroke-width="1"/>
<circle cx="416.7" cy="316" r="1.7" fill="#123811"/>
<circle cx="386" cy="316" r="2.6" fill="#4e9f4f"/>
<circle cx="424" cy="316" r="2.6" fill="#4e9f4f"/>
<circle cx="386" cy="323.6" r="2.6" fill="#4e9f4f"/>
<circle cx="614" cy="323.6" r="2.6" fill="#4e9f4f"/>
<circle cx="386" cy="331.4" r="2.6" fill="#4e9f4f"/>
<circle cx="531" cy="331.4" r="4" fill="#80d47e" stroke="#1d2a3a" stroke-opacity="0.5" stroke-width="1"/>
<circle cx="531" cy="331.4" r="1.7" fill="#123811"/>
<circle cx="531" cy="361.8" r="4" fill="#80d47e" stroke="#1d2a3a" stroke-opacity="0.5" stroke-width="1"/>
<circle cx="531" cy="361.8" r="1.7" fill="#123811"/>
<circle cx="614.5" cy="361.8" r="2.6" fill="#4e9f4f"/>
<circle cx="386" cy="338.75" r="2.6" fill="#4e9f4f"/>
<circle cx="523.4" cy="338.75" r="4" fill="#80d47e" stroke="#1d2a3a" stroke-opacity="0.5" stroke-width="1"/>
<circle cx="523.4" cy="338.75" r="1.7" fill="#123811"/>
<circle cx="523.4" cy="391.9" r="4" fill="#80d47e" stroke="#1d2a3a" stroke-opacity="0.5" stroke-width="1"/>
<circle cx="523.4" cy="391.9" r="1.7" fill="#123811"/>
<circle cx="614.5" cy="391.9" r="2.6" fill="#4e9f4f"/>
<circle cx="1095" cy="315.6" r="2.6" fill="#4e9f4f"/>
<circle cx="1202" cy="315.6" r="4" fill="#80d47e" stroke="#1d2a3a" stroke-opacity="0.5" stroke-width="1"/>
<circle cx="1202" cy="315.6" r="1.7" fill="#123811"/>
<circle cx="1217" cy="315.6" r="4" fill="#80d47e" stroke="#1d2a3a" stroke-opacity="0.5" stroke-width="1"/>
<circle cx="1217" cy="315.6" r="1.7" fill="#123811"/>
<circle cx="1217" cy="446" r="2.6" fill="#4e9f4f"/>
<circle cx="333" cy="178.3" r="4" fill="#f5f5f5" stroke="#1d2a3a" stroke-opacity="0.5" stroke-width="1"/>
<circle cx="333" cy="178.3" r="1.7" fill="#484848"/>
<circle cx="446" cy="178.3" r="2.6" fill="#e8859b"/>
<circle cx="386" cy="111" r="2.6" fill="#e8859b"/>
<circle cx="386" cy="247" r="4" fill="#f5f5f5" stroke="#1d2a3a" stroke-opacity="0.5" stroke-width="1"/>
<circle cx="386" cy="247" r="1.7" fill="#484848"/>
<circle cx="358" cy="125" r="2.6" fill="#e8859b"/>
<circle cx="386" cy="125" r="4" fill="#f5f5f5" stroke="#1d2a3a" stroke-opacity="0.5" stroke-width="1"/>
<circle cx="386" cy="125" r="1.7" fill="#484848"/>
<circle cx="431.5" cy="118" r="2.6" fill="#e8859b"/>
<circle cx="431.5" cy="201.7" r="4" fill="#f5f5f5" stroke="#1d2a3a" stroke-opacity="0.5" stroke-width="1"/>
<circle cx="431.5" cy="201.7" r="1.7" fill="#484848"/>
<circle cx="386" cy="148.6" r="4" fill="#f5f5f5" stroke="#1d2a3a" stroke-opacity="0.5" stroke-width="1"/>
<circle cx="386" cy="148.6" r="1.7" fill="#484848"/>
<circle cx="478" cy="148.6" r="4" fill="#f5f5f5" stroke="#1d2a3a" stroke-opacity="0.5" stroke-width="1"/>
<circle cx="478" cy="148.6" r="1.7" fill="#484848"/>
<circle cx="478" cy="232" r="2.6" fill="#e8859b"/>
<circle cx="355.8" cy="201.7" r="2.6" fill="#e8859b"/>
<circle cx="333" cy="216.5" r="4" fill="#f5f5f5" stroke="#1d2a3a" stroke-opacity="0.5" stroke-width="1"/>
<circle cx="333" cy="216.5" r="1.7" fill="#484848"/>
<circle cx="424.5" cy="216.5" r="4" fill="#f5f5f5" stroke="#1d2a3a" stroke-opacity="0.5" stroke-width="1"/>
<circle cx="424.5" cy="216.5" r="1.7" fill="#484848"/>
<circle cx="424.5" cy="208.75" r="4" fill="#f5f5f5" stroke="#1d2a3a" stroke-opacity="0.5" stroke-width="1"/>
<circle cx="424.5" cy="208.75" r="1.7" fill="#484848"/>
<circle cx="691" cy="208.75" r="4" fill="#f5f5f5" stroke="#1d2a3a" stroke-opacity="0.5" stroke-width="1"/>
<circle cx="691" cy="208.75" r="1.7" fill="#484848"/>
<circle cx="691" cy="186" r="2.6" fill="#e8859b"/>
<circle cx="386" cy="194" r="4" fill="#f5f5f5" stroke="#1d2a3a" stroke-opacity="0.5" stroke-width="1"/>
<circle cx="386" cy="194" r="1.7" fill="#484848"/>
<circle cx="416.7" cy="194" r="4" fill="#f5f5f5" stroke="#1d2a3a" stroke-opacity="0.5" stroke-width="1"/>
<circle cx="416.7" cy="194" r="1.7" fill="#484848"/>
<circle cx="416.7" cy="224" r="2.6" fill="#e8859b"/>
<circle cx="401" cy="216.5" r="4" fill="#f5f5f5" stroke="#1d2a3a" stroke-opacity="0.5" stroke-width="1"/>
<circle cx="401" cy="216.5" r="1.7" fill="#484848"/>
<circle cx="401" cy="415" r="4" fill="#f5f5f5" stroke="#1d2a3a" stroke-opacity="0.5" stroke-width="1"/>
<circle cx="401" cy="415" r="1.7" fill="#484848"/>
<circle cx="698" cy="415" r="2.6" fill="#e8859b"/>
<circle cx="401" cy="239" r="4" fill="#f5f5f5" stroke="#1d2a3a" stroke-opacity="0.5" stroke-width="1"/>
<circle cx="401" cy="239" r="1.7" fill="#484848"/>
<circle cx="413" cy="239" r="2.6" fill="#e8859b"/>
<circle cx="714" cy="247" r="4" fill="#f5f5f5" stroke="#1d2a3a" stroke-opacity="0.5" stroke-width="1"/>
<circle cx="714" cy="247" r="1.7" fill="#484848"/>
<circle cx="714" cy="232" r="2.6" fill="#e8859b"/>
<circle cx="806" cy="247" r="4" fill="#f5f5f5" stroke="#1d2a3a" stroke-opacity="0.5" stroke-width="1"/>
<circle cx="806" cy="247" r="1.7" fill="#484848"/>
<circle cx="1224.5" cy="247" r="4" fill="#f5f5f5" stroke="#1d2a3a" stroke-opacity="0.5" stroke-width="1"/>
<circle cx="1224.5" cy="247" r="1.7" fill="#484848"/>
<circle cx="1224.5" cy="270.3" r="4" fill="#f5f5f5" stroke="#1d2a3a" stroke-opacity="0.5" stroke-width="1"/>
<circle cx="1224.5" cy="270.3" r="1.7" fill="#484848"/>
<circle cx="469.8" cy="163.4" r="4" fill="#f5f5f5" stroke="#1d2a3a" stroke-opacity="0.5" stroke-width="1"/>
<circle cx="469.8" cy="163.4" r="1.7" fill="#484848"/>
<circle cx="469.8" cy="225" r="4" fill="#f5f5f5" stroke="#1d2a3a" stroke-opacity="0.5" stroke-width="1"/>
<circle cx="469.8" cy="225" r="1.7" fill="#484848"/>
<circle cx="485" cy="225" r="2.6" fill="#e8859b"/>
<circle cx="500" cy="163.4" r="2.6" fill="#e8859b"/>
<circle cx="470" cy="179" r="4" fill="#f5f5f5" stroke="#1d2a3a" stroke-opacity="0.5" stroke-width="1"/>
<circle cx="470" cy="179" r="1.7" fill="#484848"/>
<circle cx="493" cy="179" r="4" fill="#f5f5f5" stroke="#1d2a3a" stroke-opacity="0.5" stroke-width="1"/>
<circle cx="493" cy="179" r="1.7" fill="#484848"/>
<circle cx="493" cy="194" r="2.6" fill="#e8859b"/>
<circle cx="524" cy="170.5" r="2.6" fill="#e8859b"/>
<circle cx="524" cy="300.6" r="4" fill="#f5f5f5" stroke="#1d2a3a" stroke-opacity="0.5" stroke-width="1"/>
<circle cx="524" cy="300.6" r="1.7" fill="#484848"/>
<circle cx="491" cy="300.6" r="2.6" fill="#e8859b"/>
<circle cx="516" cy="201" r="2.6" fill="#e8859b"/>
<circle cx="516" cy="293" r="4" fill="#f5f5f5" stroke="#1d2a3a" stroke-opacity="0.5" stroke-width="1"/>
<circle cx="516" cy="293" r="1.7" fill="#484848"/>
<circle cx="491" cy="293" r="2.6" fill="#e8859b"/>
<circle cx="490" cy="240" r="4" fill="#f5f5f5" stroke="#1d2a3a" stroke-opacity="0.5" stroke-width="1"/>
<circle cx="490" cy="240" r="1.7" fill="#484848"/>
<circle cx="508" cy="232" r="4" fill="#f5f5f5" stroke="#1d2a3a" stroke-opacity="0.5" stroke-width="1"/>
<circle cx="508" cy="232" r="1.7" fill="#484848"/>
<circle cx="508" cy="285.6" r="4" fill="#f5f5f5" stroke="#1d2a3a" stroke-opacity="0.5" stroke-width="1"/>
<circle cx="508" cy="285.6" r="1.7" fill="#484848"/>
<circle cx="491" cy="285.6" r="2.6" fill="#e8859b"/>
<circle cx="661" cy="232" r="4" fill="#f5f5f5" stroke="#1d2a3a" stroke-opacity="0.5" stroke-width="1"/>
<circle cx="661" cy="232" r="1.7" fill="#484848"/>
<circle cx="661" cy="240" r="4" fill="#f5f5f5" stroke="#1d2a3a" stroke-opacity="0.5" stroke-width="1"/>
<circle cx="661" cy="240" r="1.7" fill="#484848"/>
<circle cx="806" cy="240" r="4" fill="#f5f5f5" stroke="#1d2a3a" stroke-opacity="0.5" stroke-width="1"/>
<circle cx="806" cy="240" r="1.7" fill="#484848"/>
<circle cx="460" cy="239.5" r="2.6" fill="#e8859b"/>
<circle cx="584.5" cy="239.5" r="4" fill="#f5f5f5" stroke="#1d2a3a" stroke-opacity="0.5" stroke-width="1"/>
<circle cx="584.5" cy="239.5" r="1.7" fill="#484848"/>
<circle cx="584.5" cy="385" r="4" fill="#f5f5f5" stroke="#1d2a3a" stroke-opacity="0.5" stroke-width="1"/>
<circle cx="584.5" cy="385" r="1.7" fill="#484848"/>
<circle cx="597" cy="385" r="2.6" fill="#e8859b"/>
<circle cx="683.5" cy="247" r="4" fill="#f5f5f5" stroke="#1d2a3a" stroke-opacity="0.5" stroke-width="1"/>
<circle cx="683.5" cy="247" r="1.7" fill="#484848"/>
<circle cx="683.5" cy="385" r="2.6" fill="#e8859b"/>
<circle cx="683.5" cy="399.6" r="2.6" fill="#e8859b"/>
<circle cx="698" cy="399.6" r="2.6" fill="#e8859b"/>
<circle cx="706.4" cy="323" r="2.6" fill="#e8859b"/>
<circle cx="706.4" cy="369" r="4" fill="#f5f5f5" stroke="#1d2a3a" stroke-opacity="0.5" stroke-width="1"/>
<circle cx="706.4" cy="369" r="1.7" fill="#484848"/>
<circle cx="722.5" cy="369" r="4" fill="#f5f5f5" stroke="#1d2a3a" stroke-opacity="0.5" stroke-width="1"/>
<circle cx="722.5" cy="369" r="1.7" fill="#484848"/>
<circle cx="722.5" cy="407.3" r="2.6" fill="#e8859b"/>
<circle cx="622" cy="415" r="4" fill="#f5f5f5" stroke="#1d2a3a" stroke-opacity="0.5" stroke-width="1"/>
<circle cx="622" cy="415" r="1.7" fill="#484848"/>
<circle cx="622" cy="425" r="2.6" fill="#e8859b"/>
<circle cx="584.5" cy="307.8" r="4" fill="#f5f5f5" stroke="#1d2a3a" stroke-opacity="0.5" stroke-width="1"/>
<circle cx="584.5" cy="307.8" r="1.7" fill="#484848"/>
<circle cx="597" cy="307.8" r="2.6" fill="#e8859b"/>
<circle cx="584.5" cy="346.7" r="4" fill="#f5f5f5" stroke="#1d2a3a" stroke-opacity="0.5" stroke-width="1"/>
<circle cx="584.5" cy="346.7" r="1.7" fill="#484848"/>
<circle cx="597" cy="346.7" r="2.6" fill="#e8859b"/>
<rect x="572.6" y="70" width="6" height="4" fill="#2f9a2f"/>
<rect x="589.7" y="111" width="4" height="6" fill="#2f9a2f"/>
<rect x="631" y="131" width="6" height="4" fill="#2f9a2f"/>
<rect x="557" y="146" width="6" height="4" fill="#2f9a2f"/>
<rect x="599" y="146" width="6" height="4" fill="#2f9a2f"/>
<rect x="544.8" y="153.6" width="6" height="4" fill="#2f9a2f"/>
<rect x="544" y="186" width="4" height="6" fill="#2f9a2f"/>
<rect x="567" y="192" width="6" height="4" fill="#2f9a2f"/>
<rect x="589.7" y="195" width="4" height="6" fill="#2f9a2f"/>
<rect x="551.75" y="214" width="4" height="6" fill="#2f9a2f"/>
<rect x="564" y="237.5" width="6" height="4" fill="#2f9a2f"/>
<rect x="589.7" y="240" width="4" height="6" fill="#2f9a2f"/>
<rect x="544" y="240" width="4" height="6" fill="#2f9a2f"/>
<rect x="551.75" y="269.8" width="4" height="6" fill="#2f9a2f"/>
<rect x="544" y="296" width="4" height="6" fill="#2f9a2f"/>
<rect x="532.8" y="306.4" width="6" height="4" fill="#2f9a2f"/>
<rect x="528" y="314" width="6" height="4" fill="#2f9a2f"/>
<rect x="582.5" y="281.5" width="4" height="6" fill="#2f9a2f"/>
<rect x="582.5" y="318" width="4" height="6" fill="#2f9a2f"/>
<rect x="720.5" y="391.5" width="4" height="6" fill="#2f9a2f"/>
<rect x="918" y="677" width="4" height="6" fill="#2f9a2f"/>
<rect x="918" y="702" width="4" height="6" fill="#2f9a2f"/>
<path d="M334,121.5 Q338,125 342,121.5 M334,128.5 Q338,125 342,128.5" stroke="#e3a85a" stroke-width="2.6" fill="none" stroke-linecap="round"/>
<circle cx="335.8" cy="125" r="1.6" fill="#dfdf58"/><circle cx="340.2" cy="125" r="1.6" fill="#dfdf58"/>
<path d="M645,144.5 Q649,148 653,144.5 M645,151.5 Q649,148 653,151.5" stroke="#e3a85a" stroke-width="2.6" fill="none" stroke-linecap="round"/>
<circle cx="646.8" cy="148" r="1.6" fill="#dfdf58"/><circle cx="651.2" cy="148" r="1.6" fill="#dfdf58"/>
<path d="M645,182.5 Q649,186 653,182.5 M645,189.5 Q649,186 653,189.5" stroke="#e3a85a" stroke-width="2.6" fill="none" stroke-linecap="round"/>
<circle cx="646.8" cy="186" r="1.6" fill="#dfdf58"/><circle cx="651.2" cy="186" r="1.6" fill="#dfdf58"/>
<path d="M433,220.9 Q437,224.4 441,220.9 M433,227.9 Q437,224.4 441,227.9" stroke="#e3a85a" stroke-width="2.6" fill="none" stroke-linecap="round"/>
<circle cx="434.8" cy="224.4" r="1.6" fill="#dfdf58"/><circle cx="439.2" cy="224.4" r="1.6" fill="#dfdf58"/>
<path d="M433,235.5 Q437,239 441,235.5 M433,242.5 Q437,239 441,242.5" stroke="#e3a85a" stroke-width="2.6" fill="none" stroke-linecap="round"/>
<circle cx="434.8" cy="239" r="1.6" fill="#dfdf58"/><circle cx="439.2" cy="239" r="1.6" fill="#dfdf58"/>
<path d="M792,297.1 Q796,300.6 800,297.1 M792,304.1 Q796,300.6 800,304.1" stroke="#e3a85a" stroke-width="2.6" fill="none" stroke-linecap="round"/>
<circle cx="793.8" cy="300.6" r="1.6" fill="#dfdf58"/><circle cx="798.2" cy="300.6" r="1.6" fill="#dfdf58"/>
<circle cx="614" cy="297" r="3" fill="none" stroke="#c8a850" stroke-width="1.5"/><circle cx="614" cy="297" r="1.4" fill="#5a4a20"/>
<circle cx="614" cy="304" r="3" fill="none" stroke="#c8a850" stroke-width="1.5"/><circle cx="614" cy="304" r="1.4" fill="#5a4a20"/>
<circle cx="614" cy="336" r="3" fill="none" stroke="#c8a850" stroke-width="1.5"/><circle cx="614" cy="336" r="1.4" fill="#5a4a20"/>
<circle cx="614" cy="343" r="3" fill="none" stroke="#c8a850" stroke-width="1.5"/><circle cx="614" cy="343" r="1.4" fill="#5a4a20"/>
<circle cx="735" cy="338" r="3" fill="none" stroke="#c8a850" stroke-width="1.5"/><circle cx="735" cy="338" r="1.4" fill="#5a4a20"/>
<circle cx="742" cy="338" r="3" fill="none" stroke="#c8a850" stroke-width="1.5"/><circle cx="742" cy="338" r="1.4" fill="#5a4a20"/>
<g transform="translate(322,133) rotate(0) scale(-1,1)"><path d="M-4.75,-12.0 L-0.25,-12.0 Q9.75,-12.0 9.75,-2.0 L9.75,2.0 Q9.75,12.0 -0.25,12.0 L-4.75,12.0 Q-9.75,12.0 -9.75,7.0 L-9.75,-7.0 Q-9.75,-12.0 -4.75,-12.0 Z" fill="url(#gg)"/></g>
<text x="322" y="133.3" transform="rotate(0 322 133) translate(322,133) scale(-1,1) translate(-322,-133)" font-family="Liberation Sans, sans-serif" font-weight="bold" font-size="7.8" fill="#dceaf8" text-anchor="middle" dominant-baseline="central">AND</text>
<g transform="translate(357,125) rotate(180)"><path d="M-7,-7 L0,-7 A7,7 0 0 1 0,7 L-7,7 Z" fill="#1f5a9e"/></g>
<text x="356" y="125" transform="rotate(180 357 125)" font-family="Liberation Sans, sans-serif" font-weight="bold" font-size="8" fill="#e8eef8" text-anchor="middle" dominant-baseline="central">N</text>
<g transform="translate(394,100) rotate(90) scale(1,1)"><path d="M-9.75,-12.0 L-3.9000000000000004,-12.0 Q9.75,-12.0 9.75,0 Q9.75,12.0 -3.9000000000000004,12.0 L-9.75,12.0 Q-7.41,0 -9.75,-12.0 Z" fill="url(#gg)"/></g>
<text x="394" y="100.3" transform="rotate(90 394 100)" font-family="Liberation Sans, sans-serif" font-weight="bold" font-size="8.5" fill="#dceaf8" text-anchor="middle" dominant-baseline="central">OR</text>
<path d="M414,95 L414,110 L438,110" stroke="#1d2a3a" stroke-opacity="0.5" stroke-width="5" fill="none"/>
<path d="M414,95 L414,110 L438,110" stroke="#4da3d8" stroke-width="3.5" fill="none"/>
<path d="M418,88 L440,88 Q446,100 440,114 L420,114 Q416,100 418,88 Z" fill="#1f5a9e"/>
<circle cx="414" cy="95" r="3.5" fill="#4da3d8"/>
<circle cx="414" cy="110" r="3.5" fill="#4da3d8"/>
<circle cx="447" cy="95" r="3.5" fill="#8abce0"/>
<circle cx="442" cy="91" r="2.3" fill="#e06070"/>
<circle cx="441" cy="116" r="2.3" fill="#e06070"/>
<circle cx="430" cy="120" r="2.3" fill="#e06070"/>
<circle cx="431" cy="116" r="2.3" fill="#e06070"/>
<text x="428" y="102" font-family="Liberation Mono, monospace" font-weight="bold" font-size="7" fill="#f0f0f0" text-anchor="middle" dominant-baseline="central">0</text>
<text x="432" y="110" font-family="Liberation Mono, monospace" font-weight="bold" font-size="6" fill="#f0f0f0" text-anchor="middle" dominant-baseline="central">SWC</text>
<rect x="463" y="65" width="14" height="65" rx="2" fill="#1f5a9e"/>
<path d="M487,66 Q499,80 497,100 Q493,122 487,128 Q491,100 487,66 Z" fill="#1f5a9e"/>
<text x="493" y="88" transform="rotate(90 493 88)" font-family="Liberation Mono, monospace" font-weight="bold" font-size="7" fill="#f0f0f0" text-anchor="middle" dominant-baseline="central">DEC</text>
<text x="471" y="72.0" font-family="Liberation Mono, monospace" font-weight="normal" font-size="5" fill="#c8d8f0" text-anchor="middle" dominant-baseline="central">1</text>
<circle cx="478" cy="72.0" r="2.2" fill="#d85060"/>
<text x="471" y="79.6" font-family="Liberation Mono, monospace" font-weight="normal" font-size="5" fill="#c8d8f0" text-anchor="middle" dominant-baseline="central">2</text>
<circle cx="478" cy="79.6" r="2.2" fill="#d85060"/>
<text x="471" y="87.2" font-family="Liberation Mono, monospace" font-weight="normal" font-size="5" fill="#c8d8f0" text-anchor="middle" dominant-baseline="central">4</text>
<circle cx="478" cy="87.2" r="2.2" fill="#d85060"/>
<text x="471" y="94.8" font-family="Liberation Mono, monospace" font-weight="normal" font-size="5" fill="#c8d8f0" text-anchor="middle" dominant-baseline="central">8</text>
<circle cx="478" cy="94.8" r="2.2" fill="#d85060"/>
<text x="471" y="102.4" font-family="Liberation Mono, monospace" font-weight="normal" font-size="5" fill="#c8d8f0" text-anchor="middle" dominant-baseline="central">16</text>
<circle cx="478" cy="102.4" r="2.2" fill="#d85060"/>
<text x="471" y="110.0" font-family="Liberation Mono, monospace" font-weight="normal" font-size="5" fill="#c8d8f0" text-anchor="middle" dominant-baseline="central">32</text>
<circle cx="478" cy="110.0" r="2.2" fill="#d85060"/>
<text x="471" y="117.6" font-family="Liberation Mono, monospace" font-weight="normal" font-size="5" fill="#c8d8f0" text-anchor="middle" dominant-baseline="central">64</text>
<circle cx="478" cy="117.6" r="2.2" fill="#d85060"/>
<text x="471" y="125.19999999999999" font-family="Liberation Mono, monospace" font-weight="normal" font-size="5" fill="#c8d8f0" text-anchor="middle" dominant-baseline="central">128</text>
<circle cx="478" cy="125.19999999999999" r="2.2" fill="#d85060"/>
<circle cx="500.6" cy="72" r="2.6" fill="#6ab040"/>
<circle cx="500.6" cy="80" r="2.6" fill="#e0604a"/>
<circle cx="500.6" cy="87" r="2.6" fill="#e0604a"/>
<circle cx="500.6" cy="95" r="2.6" fill="#e0604a"/>
<g transform="translate(355,188) rotate(90) scale(1,1)"><path d="M-4.75,-12.0 L-0.25,-12.0 Q9.75,-12.0 9.75,-2.0 L9.75,2.0 Q9.75,12.0 -0.25,12.0 L-4.75,12.0 Q-9.75,12.0 -9.75,7.0 L-9.75,-7.0 Q-9.75,-12.0 -4.75,-12.0 Z" fill="url(#gg)"/></g>
<text x="355" y="188.3" transform="rotate(90 355 188)" font-family="Liberation Sans, sans-serif" font-weight="bold" font-size="7.8" fill="#dceaf8" text-anchor="middle" dominant-baseline="central">AND</text>
<g transform="translate(333,205) rotate(90)"><path d="M-7,-7 L0,-7 A7,7 0 0 1 0,7 L-7,7 Z" fill="#1f5a9e"/></g>
<text x="332" y="205" transform="rotate(90 333 205)" font-family="Liberation Sans, sans-serif" font-weight="bold" font-size="8" fill="#e8eef8" text-anchor="middle" dominant-baseline="central">N</text>
<g transform="translate(460,179) rotate(0) scale(-1,1)"><path d="M-9.75,-12.0 L-3.9000000000000004,-12.0 Q9.75,-12.0 9.75,0 Q9.75,12.0 -3.9000000000000004,12.0 L-9.75,12.0 Q-7.41,0 -9.75,-12.0 Z" fill="url(#gg)"/></g>
<text x="460" y="179.3" transform="rotate(0 460 179) translate(460,179) scale(-1,1) translate(-460,-179)" font-family="Liberation Sans, sans-serif" font-weight="bold" font-size="8.5" fill="#dceaf8" text-anchor="middle" dominant-baseline="central">OR</text>
<circle cx="401" cy="208" r="5.5" fill="#1f5a9e"/><circle cx="401" cy="208" r="3.8" fill="#e83a4a"/>
<g transform="translate(420.6,224.4) rotate(0)"><path d="M-7,-7 L0,-7 A7,7 0 0 1 0,7 L-7,7 Z" fill="#1f5a9e"/></g>
<text x="419.6" y="224.4" transform="rotate(0 420.6 224.4)" font-family="Liberation Sans, sans-serif" font-weight="bold" font-size="8" fill="#e8eef8" text-anchor="middle" dominant-baseline="central">N</text>
<g transform="translate(420.6,239) rotate(0)"><path d="M-7,-7 L0,-7 A7,7 0 0 1 0,7 L-7,7 Z" fill="#1f5a9e"/></g>
<text x="419.6" y="239" transform="rotate(0 420.6 239)" font-family="Liberation Sans, sans-serif" font-weight="bold" font-size="8" fill="#e8eef8" text-anchor="middle" dominant-baseline="central">N</text>
<g transform="translate(449.5,232) rotate(0) scale(1,1)"><path d="M-9.75,-12.0 L-3.9000000000000004,-12.0 Q9.75,-12.0 9.75,0 Q9.75,12.0 -3.9000000000000004,12.0 L-9.75,12.0 Q-7.41,0 -9.75,-12.0 Z" fill="url(#gg)"/></g>
<text x="449.5" y="232.3" transform="rotate(0 449.5 232)" font-family="Liberation Sans, sans-serif" font-weight="bold" font-size="8.5" fill="#dceaf8" text-anchor="middle" dominant-baseline="central">OR</text>
<g transform="translate(512,163.4) rotate(0) scale(-1,1)"><path d="M-4.75,-12.0 L-0.25,-12.0 Q9.75,-12.0 9.75,-2.0 L9.75,2.0 Q9.75,12.0 -0.25,12.0 L-4.75,12.0 Q-9.75,12.0 -9.75,7.0 L-9.75,-7.0 Q-9.75,-12.0 -4.75,-12.0 Z" fill="url(#gg)"/></g>
<text x="512" y="163.70000000000002" transform="rotate(0 512 163.4) translate(512,163.4) scale(-1,1) translate(-512,-163.4)" font-family="Liberation Sans, sans-serif" font-weight="bold" font-size="7.8" fill="#dceaf8" text-anchor="middle" dominant-baseline="central">AND</text>
<g transform="translate(505,194) rotate(0) scale(-1,1)"><path d="M-4.75,-12.0 L-0.25,-12.0 Q9.75,-12.0 9.75,-2.0 L9.75,2.0 Q9.75,12.0 -0.25,12.0 L-4.75,12.0 Q-9.75,12.0 -9.75,7.0 L-9.75,-7.0 Q-9.75,-12.0 -4.75,-12.0 Z" fill="url(#gg)"/></g>
<text x="505" y="194.3" transform="rotate(0 505 194) translate(505,194) scale(-1,1) translate(-505,-194)" font-family="Liberation Sans, sans-serif" font-weight="bold" font-size="7.8" fill="#dceaf8" text-anchor="middle" dominant-baseline="central">AND</text>
<g transform="translate(496.7,224.4) rotate(0) scale(-1,1)"><path d="M-4.75,-12.0 L-0.25,-12.0 Q9.75,-12.0 9.75,-2.0 L9.75,2.0 Q9.75,12.0 -0.25,12.0 L-4.75,12.0 Q-9.75,12.0 -9.75,7.0 L-9.75,-7.0 Q-9.75,-12.0 -4.75,-12.0 Z" fill="url(#gg)"/></g>
<text x="496.7" y="224.70000000000002" transform="rotate(0 496.7 224.4) translate(496.7,224.4) scale(-1,1) translate(-496.7,-224.4)" font-family="Liberation Sans, sans-serif" font-weight="bold" font-size="7.8" fill="#dceaf8" text-anchor="middle" dominant-baseline="central">AND</text>
<g transform="translate(633,148) rotate(0)"><path d="M-7,-7 L0,-7 A7,7 0 0 1 0,7 L-7,7 Z" fill="#1f5a9e"/></g>
<text x="632" y="148" transform="rotate(0 633 148)" font-family="Liberation Sans, sans-serif" font-weight="bold" font-size="8" fill="#e8eef8" text-anchor="middle" dominant-baseline="central">N</text>
<g transform="translate(633,186) rotate(0)"><path d="M-7,-7 L0,-7 A7,7 0 0 1 0,7 L-7,7 Z" fill="#1f5a9e"/></g>
<text x="632" y="186" transform="rotate(0 633 186)" font-family="Liberation Sans, sans-serif" font-weight="bold" font-size="8" fill="#e8eef8" text-anchor="middle" dominant-baseline="central">N</text>
<g transform="translate(663.4,140.3) rotate(0) scale(1,1)"><path d="M-4.75,-12.0 L-0.25,-12.0 Q9.75,-12.0 9.75,-2.0 L9.75,2.0 Q9.75,12.0 -0.25,12.0 L-4.75,12.0 Q-9.75,12.0 -9.75,7.0 L-9.75,-7.0 Q-9.75,-12.0 -4.75,-12.0 Z" fill="url(#gg)"/></g>
<text x="663.4" y="140.60000000000002" transform="rotate(0 663.4 140.3)" font-family="Liberation Sans, sans-serif" font-weight="bold" font-size="7.8" fill="#dceaf8" text-anchor="middle" dominant-baseline="central">AND</text>
<g transform="translate(663.4,179) rotate(0) scale(1,1)"><path d="M-4.75,-12.0 L-0.25,-12.0 Q9.75,-12.0 9.75,-2.0 L9.75,2.0 Q9.75,12.0 -0.25,12.0 L-4.75,12.0 Q-9.75,12.0 -9.75,7.0 L-9.75,-7.0 Q-9.75,-12.0 -4.75,-12.0 Z" fill="url(#gg)"/></g>
<text x="663.4" y="179.3" transform="rotate(0 663.4 179)" font-family="Liberation Sans, sans-serif" font-weight="bold" font-size="7.8" fill="#dceaf8" text-anchor="middle" dominant-baseline="central">AND</text>
<g transform="translate(701,179) rotate(0) scale(1,1)"><path d="M-9.75,-12.0 L-3.9000000000000004,-12.0 Q9.75,-12.0 9.75,0 Q9.75,12.0 -3.9000000000000004,12.0 L-9.75,12.0 Q-7.41,0 -9.75,-12.0 Z" fill="url(#gg)"/></g>
<text x="701" y="179.3" transform="rotate(0 701 179)" font-family="Liberation Sans, sans-serif" font-weight="bold" font-size="8.5" fill="#dceaf8" text-anchor="middle" dominant-baseline="central">OR</text>
<g transform="translate(762,201) rotate(0) scale(1,1)"><path d="M-9.75,-12.0 L-3.9000000000000004,-12.0 Q9.75,-12.0 9.75,0 Q9.75,12.0 -3.9000000000000004,12.0 L-9.75,12.0 Q-7.41,0 -9.75,-12.0 Z" fill="url(#gg)"/></g>
<text x="762" y="201.3" transform="rotate(0 762 201)" font-family="Liberation Sans, sans-serif" font-weight="bold" font-size="8.5" fill="#dceaf8" text-anchor="middle" dominant-baseline="central">OR</text>
<g transform="translate(722,221.5) rotate(-90) scale(1,1)"><path d="M-4.75,-12.0 L-0.25,-12.0 Q9.75,-12.0 9.75,-2.0 L9.75,2.0 Q9.75,12.0 -0.25,12.0 L-4.75,12.0 Q-9.75,12.0 -9.75,7.0 L-9.75,-7.0 Q-9.75,-12.0 -4.75,-12.0 Z" fill="url(#gg)"/></g>
<text x="722" y="221.8" transform="rotate(-90 722 221.5)" font-family="Liberation Sans, sans-serif" font-weight="bold" font-size="7.8" fill="#dceaf8" text-anchor="middle" dominant-baseline="central">AND</text>
<rect x="478" y="258.5" width="13" height="61" rx="2" fill="#1f5a9e"/>
<text x="484" y="262.6" font-family="Liberation Mono, monospace" font-weight="normal" font-size="4.5" fill="#c8d8f0" text-anchor="middle" dominant-baseline="central">1</text>
<circle cx="492" cy="262.6" r="2.2" fill="#d85060"/>
<text x="484" y="270.25" font-family="Liberation Mono, monospace" font-weight="normal" font-size="4.5" fill="#c8d8f0" text-anchor="middle" dominant-baseline="central">2</text>
<circle cx="492" cy="270.25" r="2.2" fill="#d85060"/>
<text x="484" y="277.90000000000003" font-family="Liberation Mono, monospace" font-weight="normal" font-size="4.5" fill="#c8d8f0" text-anchor="middle" dominant-baseline="central">4</text>
<circle cx="492" cy="277.90000000000003" r="2.2" fill="#d85060"/>
<text x="484" y="285.55" font-family="Liberation Mono, monospace" font-weight="normal" font-size="4.5" fill="#c8d8f0" text-anchor="middle" dominant-baseline="central">8</text>
<circle cx="492" cy="285.55" r="2.2" fill="#d85060"/>
<text x="484" y="293.20000000000005" font-family="Liberation Mono, monospace" font-weight="normal" font-size="4.5" fill="#c8d8f0" text-anchor="middle" dominant-baseline="central">16</text>
<circle cx="492" cy="293.20000000000005" r="2.2" fill="#d85060"/>
<text x="484" y="300.85" font-family="Liberation Mono, monospace" font-weight="normal" font-size="4.5" fill="#c8d8f0" text-anchor="middle" dominant-baseline="central">32</text>
<circle cx="492" cy="300.85" r="2.2" fill="#d85060"/>
<text x="484" y="308.5" font-family="Liberation Mono, monospace" font-weight="normal" font-size="4.5" fill="#c8d8f0" text-anchor="middle" dominant-baseline="central">64</text>
<circle cx="492" cy="308.5" r="2.2" fill="#6ab040"/>
<text x="484" y="316.15000000000003" font-family="Liberation Mono, monospace" font-weight="normal" font-size="4.5" fill="#c8d8f0" text-anchor="middle" dominant-baseline="central">128</text>
<circle cx="492" cy="316.15000000000003" r="2.2" fill="#6ab040"/>
<path d="M427,320 L427,310 Q430,304 440,304 L450,305 L450,320 Z" fill="#1f5a9e"/>
<circle cx="440" cy="308" r="2.5" fill="#e83a4a"/>
<circle cx="434" cy="310" r="1" fill="#dfe8f0"/>
<circle cx="434" cy="316" r="1" fill="#dfe8f0"/>
<path d="M440,316 L455,316" stroke="#3a8aa0" stroke-width="3.5"/>
<text x="447" y="316" font-family="Liberation Sans, sans-serif" font-weight="normal" font-size="7" fill="#f0f0f0" text-anchor="middle" dominant-baseline="central">96</text>
<text x="447" y="308" font-family="Liberation Sans, sans-serif" font-weight="normal" font-size="9" fill="#e8e8e8" text-anchor="start" dominant-baseline="central">192</text>
<text x="460" y="285.3" font-family="Liberation Sans, sans-serif" font-weight="bold" font-size="8.5" fill="#e8e8e8" text-anchor="start" dominant-baseline="central">92</text>
<g transform="translate(603,300) rotate(0) scale(1,1)"><path d="M-4.75,-12.0 L-0.25,-12.0 Q9.75,-12.0 9.75,-2.0 L9.75,2.0 Q9.75,12.0 -0.25,12.0 L-4.75,12.0 Q-9.75,12.0 -9.75,7.0 L-9.75,-7.0 Q-9.75,-12.0 -4.75,-12.0 Z" fill="url(#gg)"/></g>
<text x="603" y="300.3" transform="rotate(0 603 300)" font-family="Liberation Sans, sans-serif" font-weight="bold" font-size="7.8" fill="#dceaf8" text-anchor="middle" dominant-baseline="central">AND</text>
<g transform="translate(603,338.4) rotate(0) scale(1,1)"><path d="M-4.75,-12.0 L-0.25,-12.0 Q9.75,-12.0 9.75,-2.0 L9.75,2.0 Q9.75,12.0 -0.25,12.0 L-4.75,12.0 Q-9.75,12.0 -9.75,7.0 L-9.75,-7.0 Q-9.75,-12.0 -4.75,-12.0 Z" fill="url(#gg)"/></g>
<text x="603" y="338.7" transform="rotate(0 603 338.4)" font-family="Liberation Sans, sans-serif" font-weight="bold" font-size="7.8" fill="#dceaf8" text-anchor="middle" dominant-baseline="central">AND</text>
<g transform="translate(610,376.4) rotate(0) scale(1,1)"><path d="M-4.75,-12.0 L-0.25,-12.0 Q9.75,-12.0 9.75,-2.0 L9.75,2.0 Q9.75,12.0 -0.25,12.0 L-4.75,12.0 Q-9.75,12.0 -9.75,7.0 L-9.75,-7.0 Q-9.75,-12.0 -4.75,-12.0 Z" fill="url(#gg)"/></g>
<text x="610" y="376.7" transform="rotate(0 610 376.4)" font-family="Liberation Sans, sans-serif" font-weight="bold" font-size="7.8" fill="#dceaf8" text-anchor="middle" dominant-baseline="central">AND</text>
<rect x="619" y="304" width="7" height="23.5" fill="#2aa2b0"/>
<rect x="619" y="342" width="7" height="23.2" fill="#2aa2b0"/>
<g transform="translate(717,315.5) rotate(0) scale(1,1)"><path d="M-4.75,-12.0 L-0.25,-12.0 Q9.75,-12.0 9.75,-2.0 L9.75,2.0 Q9.75,12.0 -0.25,12.0 L-4.75,12.0 Q-9.75,12.0 -9.75,7.0 L-9.75,-7.0 Q-9.75,-12.0 -4.75,-12.0 Z" fill="url(#gg)"/></g>
<text x="717" y="315.8" transform="rotate(0 717 315.5)" font-family="Liberation Sans, sans-serif" font-weight="bold" font-size="7.8" fill="#dceaf8" text-anchor="middle" dominant-baseline="central">AND</text>
<g transform="translate(777.5,300.6) rotate(0)"><path d="M-7,-7 L0,-7 A7,7 0 0 1 0,7 L-7,7 Z" fill="#1f5a9e"/></g>
<text x="776.5" y="300.6" transform="rotate(0 777.5 300.6)" font-family="Liberation Sans, sans-serif" font-weight="bold" font-size="8" fill="#e8eef8" text-anchor="middle" dominant-baseline="central">N</text>
<g transform="translate(808,307.7) rotate(0) scale(1,1)"><path d="M-4.75,-12.0 L-0.25,-12.0 Q9.75,-12.0 9.75,-2.0 L9.75,2.0 Q9.75,12.0 -0.25,12.0 L-4.75,12.0 Q-9.75,12.0 -9.75,7.0 L-9.75,-7.0 Q-9.75,-12.0 -4.75,-12.0 Z" fill="url(#gg)"/></g>
<text x="808" y="308.0" transform="rotate(0 808 307.7)" font-family="Liberation Sans, sans-serif" font-weight="bold" font-size="7.8" fill="#dceaf8" text-anchor="middle" dominant-baseline="central">AND</text>
<g transform="translate(747.8,346) rotate(0) scale(1,1)"><path d="M-4.75,-12.0 L-0.25,-12.0 Q9.75,-12.0 9.75,-2.0 L9.75,2.0 Q9.75,12.0 -0.25,12.0 L-4.75,12.0 Q-9.75,12.0 -9.75,7.0 L-9.75,-7.0 Q-9.75,-12.0 -4.75,-12.0 Z" fill="url(#gg)"/></g>
<text x="747.8" y="346.3" transform="rotate(0 747.8 346)" font-family="Liberation Sans, sans-serif" font-weight="bold" font-size="7.8" fill="#dceaf8" text-anchor="middle" dominant-baseline="central">AND</text>
<g transform="translate(709,407.3) rotate(0) scale(1,1)"><path d="M-9.75,-12.0 L-3.9000000000000004,-12.0 Q9.75,-12.0 9.75,0 Q9.75,12.0 -3.9000000000000004,12.0 L-9.75,12.0 Q-7.41,0 -9.75,-12.0 Z" fill="url(#gg)"/></g>
<text x="709" y="407.6" transform="rotate(0 709 407.3)" font-family="Liberation Sans, sans-serif" font-weight="bold" font-size="8.5" fill="#dceaf8" text-anchor="middle" dominant-baseline="central">OR</text>
<g transform="translate(683.3,388.4) rotate(90)"><path d="M-7,-7 L0,-7 A7,7 0 0 1 0,7 L-7,7 Z" fill="#1f5a9e"/></g>
<text x="682.3" y="388.4" transform="rotate(90 683.3 388.4)" font-family="Liberation Sans, sans-serif" font-weight="bold" font-size="8" fill="#e8eef8" text-anchor="middle" dominant-baseline="central">N</text>
<path d="M612,384 L630,384 L630,396 Q622,404 612,396 Z" fill="#1f5a9e"/>
<text x="622" y="391" font-family="Liberation Mono, monospace" font-weight="bold" font-size="6" fill="#f0f0f0" text-anchor="middle" dominant-baseline="central">SWC</text>
<circle cx="634" cy="385" r="2.3" fill="#e06070"/>
<path d="M612,422 L630,422 L630,434 Q622,442 612,434 Z" fill="#1f5a9e"/>
<text x="622" y="429" font-family="Liberation Mono, monospace" font-weight="bold" font-size="6" fill="#f0f0f0" text-anchor="middle" dominant-baseline="central">SWC</text>
<circle cx="634" cy="423" r="2.3" fill="#e06070"/>
<rect x="840" y="311.5" width="23" height="31.3" fill="#2aa2ac"/>
<text x="851.5" y="327" font-family="Liberation Mono, monospace" font-weight="normal" font-size="4.5" fill="#cfe8f0" text-anchor="middle" dominant-baseline="central">Integer</text>
<text x="829" y="328" font-family="Liberation Mono, monospace" font-weight="normal" font-size="5" fill="#e8f0f0" text-anchor="middle" dominant-baseline="central">Result</text>
<circle cx="843.75" cy="346" r="2.5" fill="#e0604a"/>
<circle cx="851" cy="346" r="2.5" fill="#e0604a"/>
<circle cx="858.6" cy="346" r="2.5" fill="#5a8a90"/>
<circle cx="866" cy="315.5" r="2.5" fill="#e0604a"/>
<circle cx="836" cy="315.5" r="2.3" fill="#e08a60"/>
<circle cx="866" cy="323.3" r="2.5" fill="#e0604a"/>
<circle cx="836" cy="323.3" r="2.3" fill="#e08a60"/>
<circle cx="866" cy="331" r="2.5" fill="#5a8a90"/>
<circle cx="836" cy="331" r="2.3" fill="#7a8a90"/>
<circle cx="866" cy="339" r="2.5" fill="#e05ac0"/>
<circle cx="836" cy="339" r="2.3" fill="#7a8a90"/>
<g transform="translate(119,287) rotate(90) scale(1,1)"><path d="M-10.0,-12.0 L-4.0,-12.0 Q10.0,-12.0 10.0,0 Q10.0,12.0 -4.0,12.0 L-10.0,12.0 Q-7.6,0 -10.0,-12.0 Z" fill="url(#gg)"/></g>
<text x="119" y="287.3" transform="rotate(90 119 287)" font-family="Liberation Sans, sans-serif" font-weight="bold" font-size="8.5" fill="#dceaf8" text-anchor="middle" dominant-baseline="central">OR</text>
<g transform="translate(142,222) rotate(90)"><path d="M-7,-7 L0,-7 A7,7 0 0 1 0,7 L-7,7 Z" fill="#1f5a9e"/></g>
<text x="141" y="222" transform="rotate(90 142 222)" font-family="Liberation Sans, sans-serif" font-weight="bold" font-size="8" fill="#e8eef8" text-anchor="middle" dominant-baseline="central">N</text>
<rect x="145.6" y="309" width="23.4" height="16" fill="#1f5a9e"/>
<text x="157" y="317" font-family="Liberation Mono, monospace" font-weight="normal" font-size="7" fill="#f0f0f0" text-anchor="middle" dominant-baseline="central">0</text>
<circle cx="166" cy="307" r="2.2" fill="#e06070"/>
<rect x="145" y="338" width="10" height="16" rx="2" fill="#1f5a9e"/>
<circle cx="145" cy="353" r="2.2" fill="#e06070"/>
<rect x="1220" y="437" width="25" height="18" fill="#1f5a9e"/>
<text x="1232" y="446" font-family="Liberation Mono, monospace" font-weight="normal" font-size="7" fill="#f0f0f0" text-anchor="middle" dominant-baseline="central">0</text>
<circle cx="1240" cy="436" r="2.5" fill="#e06070"/>
<g transform="translate(938.75,651) rotate(0) scale(1,1)"><path d="M-4.75,-12.0 L-0.25,-12.0 Q9.75,-12.0 9.75,-2.0 L9.75,2.0 Q9.75,12.0 -0.25,12.0 L-4.75,12.0 Q-9.75,12.0 -9.75,7.0 L-9.75,-7.0 Q-9.75,-12.0 -4.75,-12.0 Z" fill="url(#gg)"/></g>
<text x="938.75" y="651.3" transform="rotate(0 938.75 651)" font-family="Liberation Sans, sans-serif" font-weight="bold" font-size="7.8" fill="#dceaf8" text-anchor="middle" dominant-baseline="central">AND</text>
<rect x="868.75" y="688.75" width="25" height="16.5" rx="2" fill="#1f5a9e"/>
<text x="881" y="697" font-family="Liberation Mono, monospace" font-weight="bold" font-size="6" fill="#f0f0f0" text-anchor="middle" dominant-baseline="central">2048</text>
<path d="M908,686 L920,686 L920,703 L908,703 Z" fill="#1f5a9e"/>
<path d="M897,699 a3,3 0 1 0 6,0 a3,3 0 1 0 6,0 a3,3 0 1 0 -6,0 a3,3 0 1 0 -6,0" stroke="#3dbd3a" stroke-width="2" fill="none"/>
<circle cx="843.75" cy="666" r="4" fill="#ecc693" stroke="#1d2a3a" stroke-opacity="0.5" stroke-width="1"/>
<circle cx="843.75" cy="666" r="1.7" fill="#44321b"/>
<circle cx="851" cy="666" r="4" fill="#ecc693" stroke="#1d2a3a" stroke-opacity="0.5" stroke-width="1"/>
<circle cx="851" cy="666" r="1.7" fill="#44321b"/>
<circle cx="843.75" cy="681" r="4" fill="#ecc693" stroke="#1d2a3a" stroke-opacity="0.5" stroke-width="1"/>
<circle cx="843.75" cy="681" r="1.7" fill="#44321b"/>
<circle cx="851" cy="681" r="4" fill="#ecc693" stroke="#1d2a3a" stroke-opacity="0.5" stroke-width="1"/>
<circle cx="851" cy="681" r="1.7" fill="#44321b"/>
<circle cx="843.75" cy="712.5" r="4" fill="#ecc693" stroke="#1d2a3a" stroke-opacity="0.5" stroke-width="1"/>
<circle cx="843.75" cy="712.5" r="1.7" fill="#44321b"/>
<circle cx="851" cy="712.5" r="4" fill="#ecc693" stroke="#1d2a3a" stroke-opacity="0.5" stroke-width="1"/>
<circle cx="851" cy="712.5" r="1.7" fill="#44321b"/>
<circle cx="858.6" cy="666" r="4" fill="#7ec4bf" stroke="#1d2a3a" stroke-opacity="0.5" stroke-width="1"/>
<circle cx="858.6" cy="666" r="1.7" fill="#11312f"/>
<circle cx="858.6" cy="681" r="4" fill="#7ec4bf" stroke="#1d2a3a" stroke-opacity="0.5" stroke-width="1"/>
<circle cx="858.6" cy="681" r="1.7" fill="#11312f"/>
<circle cx="858.6" cy="688.75" r="4" fill="#7ec4bf" stroke="#1d2a3a" stroke-opacity="0.5" stroke-width="1"/>
<circle cx="858.6" cy="688.75" r="1.7" fill="#11312f"/>
<text x="851" y="673.5" font-family="Liberation Mono, monospace" font-weight="bold" font-size="6" fill="#f0f0f0" text-anchor="middle" dominant-baseline="central">7 : 8 : ?</text>
<path d="M191,306.5 Q287.5,304.5 384.5,306.5 L384.5,429.5 Q287.5,436 191,429.5 Z" fill="#1c4f8e"/>
<path d="M192,308 Q287.5,306 383.5,308 L383.5,428.5 Q287.5,435 192,428.5 Z" fill="#205e9f"/>
<text x="287" y="310.5" font-family="Liberation Mono, monospace" font-weight="bold" font-size="8.5" fill="#f0f0f0" text-anchor="middle" dominant-baseline="central">PROGRAM</text>
<rect x="193" y="314" width="48" height="6" fill="#e3a04a"/>
<text x="258.5" y="316.8" font-family="Liberation Mono, monospace" font-weight="bold" font-size="6" fill="#b8d0ec" text-anchor="middle" dominant-baseline="central">i</text>
<text x="270.3" y="316.8" font-family="Liberation Mono, monospace" font-weight="bold" font-size="6" fill="#b8d0ec" text-anchor="middle" dominant-baseline="central">#</text>
<text x="282.1" y="316.8" font-family="Liberation Mono, monospace" font-weight="bold" font-size="6" fill="#b8d0ec" text-anchor="middle" dominant-baseline="central">s</text>
<text x="305.7" y="316.8" font-family="Liberation Mono, monospace" font-weight="bold" font-size="6" fill="#b8d0ec" text-anchor="middle" dominant-baseline="central">JN</text>
<text x="317.5" y="316.8" font-family="Liberation Mono, monospace" font-weight="bold" font-size="6" fill="#b8d0ec" text-anchor="middle" dominant-baseline="central">#</text>
<text x="329.3" y="316.8" font-family="Liberation Mono, monospace" font-weight="bold" font-size="6" fill="#b8d0ec" text-anchor="middle" dominant-baseline="central">#</text>
<text x="341.1" y="316.8" font-family="Liberation Mono, monospace" font-weight="bold" font-size="6" fill="#b8d0ec" text-anchor="middle" dominant-baseline="central">#</text>
<text x="352.9" y="316.8" font-family="Liberation Mono, monospace" font-weight="bold" font-size="6" fill="#b8d0ec" text-anchor="middle" dominant-baseline="central">s</text>
<text x="364.70000000000005" y="316.8" font-family="Liberation Mono, monospace" font-weight="bold" font-size="6" fill="#b8d0ec" text-anchor="middle" dominant-baseline="central">s</text>
<text x="376.5" y="316.8" font-family="Liberation Mono, monospace" font-weight="bold" font-size="6" fill="#b8d0ec" text-anchor="middle" dominant-baseline="central">#</text>
<text x="199.5" y="323.7" font-family="Liberation Mono, monospace" font-weight="bold" font-size="6" fill="#7fa6d0" text-anchor="middle" dominant-baseline="central">...</text>
<text x="211.3" y="323.7" font-family="Liberation Mono, monospace" font-weight="bold" font-size="6" fill="#b8d0ec" text-anchor="middle" dominant-baseline="central">3</text>
<text x="223.1" y="323.7" font-family="Liberation Mono, monospace" font-weight="bold" font-size="6" fill="#b8d0ec" text-anchor="middle" dominant-baseline="central">0</text>
<text x="234.9" y="323.7" font-family="Liberation Mono, monospace" font-weight="bold" font-size="6" fill="#b8d0ec" text-anchor="middle" dominant-baseline="central">2</text>
<text x="246.7" y="323.7" font-family="Liberation Mono, monospace" font-weight="bold" font-size="6" fill="#7fa6d0" text-anchor="middle" dominant-baseline="central">...</text>
<text x="258.5" y="323.7" font-family="Liberation Mono, monospace" font-weight="bold" font-size="6" fill="#b8d0ec" text-anchor="middle" dominant-baseline="central">4</text>
<text x="270.3" y="323.7" font-family="Liberation Mono, monospace" font-weight="bold" font-size="6" fill="#b8d0ec" text-anchor="middle" dominant-baseline="central">0</text>
<text x="282.1" y="323.7" font-family="Liberation Mono, monospace" font-weight="bold" font-size="6" fill="#b8d0ec" text-anchor="middle" dominant-baseline="central">3</text>
<text x="293.9" y="323.7" font-family="Liberation Mono, monospace" font-weight="bold" font-size="6" fill="#b8d0ec" text-anchor="middle" dominant-baseline="central">22</text>
<text x="305.7" y="323.7" font-family="Liberation Mono, monospace" font-weight="bold" font-size="6" fill="#b8d0ec" text-anchor="middle" dominant-baseline="central">0</text>
<text x="317.5" y="323.7" font-family="Liberation Mono, monospace" font-weight="bold" font-size="6" fill="#b8d0ec" text-anchor="middle" dominant-baseline="central">0</text>
<text x="329.3" y="323.7" font-family="Liberation Mono, monospace" font-weight="bold" font-size="6" fill="#b8d0ec" text-anchor="middle" dominant-baseline="central">8</text>
<text x="341.1" y="323.7" font-family="Liberation Mono, monospace" font-weight="bold" font-size="6" fill="#7fa6d0" text-anchor="middle" dominant-baseline="central">...</text>
<text x="352.9" y="323.7" font-family="Liberation Mono, monospace" font-weight="bold" font-size="6" fill="#b8d0ec" text-anchor="middle" dominant-baseline="central">2</text>
<text x="364.70000000000005" y="323.7" font-family="Liberation Mono, monospace" font-weight="bold" font-size="6" fill="#b8d0ec" text-anchor="middle" dominant-baseline="central">12</text>
<text x="376.5" y="323.7" font-family="Liberation Mono, monospace" font-weight="bold" font-size="6" fill="#b8d0ec" text-anchor="middle" dominant-baseline="central">0</text>
<text x="199.5" y="330.6" font-family="Liberation Mono, monospace" font-weight="bold" font-size="6" fill="#7fa6d0" text-anchor="middle" dominant-baseline="central">...</text>
<text x="211.3" y="330.6" font-family="Liberation Mono, monospace" font-weight="bold" font-size="6" fill="#b8d0ec" text-anchor="middle" dominant-baseline="central">0</text>
<text x="223.1" y="330.6" font-family="Liberation Mono, monospace" font-weight="bold" font-size="6" fill="#b8d0ec" text-anchor="middle" dominant-baseline="central">15</text>
<text x="234.9" y="330.6" font-family="Liberation Mono, monospace" font-weight="bold" font-size="6" fill="#b8d0ec" text-anchor="middle" dominant-baseline="central">0</text>
<text x="246.7" y="330.6" font-family="Liberation Mono, monospace" font-weight="bold" font-size="6" fill="#7fa6d0" text-anchor="middle" dominant-baseline="central">...</text>
<text x="258.5" y="330.6" font-family="Liberation Mono, monospace" font-weight="bold" font-size="6" fill="#b8d0ec" text-anchor="middle" dominant-baseline="central">0</text>
<text x="270.3" y="330.6" font-family="Liberation Mono, monospace" font-weight="bold" font-size="6" fill="#7fa6d0" text-anchor="middle" dominant-baseline="central">...</text>
<text x="282.1" y="330.6" font-family="Liberation Mono, monospace" font-weight="bold" font-size="6" fill="#b8d0ec" text-anchor="middle" dominant-baseline="central">5</text>
<text x="293.9" y="330.6" font-family="Liberation Mono, monospace" font-weight="bold" font-size="6" fill="#7fa6d0" text-anchor="middle" dominant-baseline="central">...</text>
<text x="305.7" y="330.6" font-family="Liberation Mono, monospace" font-weight="bold" font-size="6" fill="#b8d0ec" text-anchor="middle" dominant-baseline="central">5</text>
<text x="317.5" y="330.6" font-family="Liberation Mono, monospace" font-weight="bold" font-size="6" fill="#b8d0ec" text-anchor="middle" dominant-baseline="central">0</text>
<text x="329.3" y="330.6" font-family="Liberation Mono, monospace" font-weight="bold" font-size="6" fill="#b8d0ec" text-anchor="middle" dominant-baseline="central">1</text>
<text x="341.1" y="330.6" font-family="Liberation Mono, monospace" font-weight="bold" font-size="6" fill="#7fa6d0" text-anchor="middle" dominant-baseline="central">...</text>
<text x="352.9" y="330.6" font-family="Liberation Mono, monospace" font-weight="bold" font-size="6" fill="#b8d0ec" text-anchor="middle" dominant-baseline="central">1</text>
<text x="364.70000000000005" y="330.6" font-family="Liberation Mono, monospace" font-weight="bold" font-size="6" fill="#b8d0ec" text-anchor="middle" dominant-baseline="central">1</text>
<text x="376.5" y="330.6" font-family="Liberation Mono, monospace" font-weight="bold" font-size="6" fill="#b8d0ec" text-anchor="middle" dominant-baseline="central">1</text>
<text x="211.3" y="337.5" font-family="Liberation Mono, monospace" font-weight="bold" font-size="6" fill="#b8d0ec" text-anchor="middle" dominant-baseline="central">1</text>
<text x="223.1" y="337.5" font-family="Liberation Mono, monospace" font-weight="bold" font-size="6" fill="#b8d0ec" text-anchor="middle" dominant-baseline="central">0</text>
<text x="234.9" y="337.5" font-family="Liberation Mono, monospace" font-weight="bold" font-size="6" fill="#b8d0ec" text-anchor="middle" dominant-baseline="central">0</text>
<text x="258.5" y="337.5" font-family="Liberation Mono, monospace" font-weight="bold" font-size="6" fill="#b8d0ec" text-anchor="middle" dominant-baseline="central">0</text>
<text x="270.3" y="337.5" font-family="Liberation Mono, monospace" font-weight="bold" font-size="6" fill="#b8d0ec" text-anchor="middle" dominant-baseline="central">15</text>
<text x="282.1" y="337.5" font-family="Liberation Mono, monospace" font-weight="bold" font-size="6" fill="#b8d0ec" text-anchor="middle" dominant-baseline="central">0</text>
<text x="305.7" y="337.5" font-family="Liberation Mono, monospace" font-weight="bold" font-size="6" fill="#b8d0ec" text-anchor="middle" dominant-baseline="central">0</text>
<text x="329.3" y="337.5" font-family="Liberation Mono, monospace" font-weight="bold" font-size="6" fill="#b8d0ec" text-anchor="middle" dominant-baseline="central">5</text>
<text x="352.9" y="337.5" font-family="Liberation Mono, monospace" font-weight="bold" font-size="6" fill="#b8d0ec" text-anchor="middle" dominant-baseline="central">5</text>
<text x="364.70000000000005" y="337.5" font-family="Liberation Mono, monospace" font-weight="bold" font-size="6" fill="#b8d0ec" text-anchor="middle" dominant-baseline="central">0</text>
<text x="376.5" y="337.5" font-family="Liberation Mono, monospace" font-weight="bold" font-size="6" fill="#b8d0ec" text-anchor="middle" dominant-baseline="central">1</text>
<text x="199.5" y="344.40000000000003" font-family="Liberation Mono, monospace" font-weight="bold" font-size="6" fill="#7fa6d0" text-anchor="middle" dominant-baseline="central">...</text>
<text x="211.3" y="344.40000000000003" font-family="Liberation Mono, monospace" font-weight="bold" font-size="6" fill="#b8d0ec" text-anchor="middle" dominant-baseline="central">1</text>
<text x="223.1" y="344.40000000000003" font-family="Liberation Mono, monospace" font-weight="bold" font-size="6" fill="#b8d0ec" text-anchor="middle" dominant-baseline="central">1</text>
<text x="234.9" y="344.40000000000003" font-family="Liberation Mono, monospace" font-weight="bold" font-size="6" fill="#b8d0ec" text-anchor="middle" dominant-baseline="central">1</text>
<text x="246.7" y="344.40000000000003" font-family="Liberation Mono, monospace" font-weight="bold" font-size="6" fill="#7fa6d0" text-anchor="middle" dominant-baseline="central">...</text>
<text x="258.5" y="344.40000000000003" font-family="Liberation Mono, monospace" font-weight="bold" font-size="6" fill="#b8d0ec" text-anchor="middle" dominant-baseline="central">2</text>
<text x="270.3" y="344.40000000000003" font-family="Liberation Mono, monospace" font-weight="bold" font-size="6" fill="#b8d0ec" text-anchor="middle" dominant-baseline="central">4</text>
<text x="282.1" y="344.40000000000003" font-family="Liberation Mono, monospace" font-weight="bold" font-size="6" fill="#b8d0ec" text-anchor="middle" dominant-baseline="central">0</text>
<text x="293.9" y="344.40000000000003" font-family="Liberation Mono, monospace" font-weight="bold" font-size="6" fill="#7fa6d0" text-anchor="middle" dominant-baseline="central">...</text>
<text x="305.7" y="344.40000000000003" font-family="Liberation Mono, monospace" font-weight="bold" font-size="6" fill="#b8d0ec" text-anchor="middle" dominant-baseline="central">0</text>
<text x="317.5" y="344.40000000000003" font-family="Liberation Mono, monospace" font-weight="bold" font-size="6" fill="#b8d0ec" text-anchor="middle" dominant-baseline="central">10</text>
<text x="329.3" y="344.40000000000003" font-family="Liberation Mono, monospace" font-weight="bold" font-size="6" fill="#b8d0ec" text-anchor="middle" dominant-baseline="central">0</text>
<text x="341.1" y="344.40000000000003" font-family="Liberation Mono, monospace" font-weight="bold" font-size="6" fill="#7fa6d0" text-anchor="middle" dominant-baseline="central">...</text>
<text x="352.9" y="344.40000000000003" font-family="Liberation Mono, monospace" font-weight="bold" font-size="6" fill="#b8d0ec" text-anchor="middle" dominant-baseline="central">0</text>
<text x="364.70000000000005" y="344.40000000000003" font-family="Liberation Mono, monospace" font-weight="bold" font-size="6" fill="#7fa6d0" text-anchor="middle" dominant-baseline="central">...</text>
<text x="376.5" y="344.40000000000003" font-family="Liberation Mono, monospace" font-weight="bold" font-size="6" fill="#b8d0ec" text-anchor="middle" dominant-baseline="central">5</text>
<text x="199.5" y="351.3" font-family="Liberation Mono, monospace" font-weight="bold" font-size="6" fill="#7fa6d0" text-anchor="middle" dominant-baseline="central">...</text>
<text x="211.3" y="351.3" font-family="Liberation Mono, monospace" font-weight="bold" font-size="6" fill="#b8d0ec" text-anchor="middle" dominant-baseline="central">5</text>
<text x="223.1" y="351.3" font-family="Liberation Mono, monospace" font-weight="bold" font-size="6" fill="#b8d0ec" text-anchor="middle" dominant-baseline="central">0</text>
<text x="234.9" y="351.3" font-family="Liberation Mono, monospace" font-weight="bold" font-size="6" fill="#b8d0ec" text-anchor="middle" dominant-baseline="central">1</text>
<text x="246.7" y="351.3" font-family="Liberation Mono, monospace" font-weight="bold" font-size="6" fill="#7fa6d0" text-anchor="middle" dominant-baseline="central">...</text>
<text x="258.5" y="351.3" font-family="Liberation Mono, monospace" font-weight="bold" font-size="6" fill="#b8d0ec" text-anchor="middle" dominant-baseline="central">1</text>
<text x="270.3" y="351.3" font-family="Liberation Mono, monospace" font-weight="bold" font-size="6" fill="#b8d0ec" text-anchor="middle" dominant-baseline="central">1</text>
<text x="282.1" y="351.3" font-family="Liberation Mono, monospace" font-weight="bold" font-size="6" fill="#b8d0ec" text-anchor="middle" dominant-baseline="central">1</text>
<text x="293.9" y="351.3" font-family="Liberation Mono, monospace" font-weight="bold" font-size="6" fill="#7fa6d0" text-anchor="middle" dominant-baseline="central">...</text>
<text x="305.7" y="351.3" font-family="Liberation Mono, monospace" font-weight="bold" font-size="6" fill="#b8d0ec" text-anchor="middle" dominant-baseline="central">2</text>
<text x="317.5" y="351.3" font-family="Liberation Mono, monospace" font-weight="bold" font-size="6" fill="#b8d0ec" text-anchor="middle" dominant-baseline="central">0</text>
<text x="329.3" y="351.3" font-family="Liberation Mono, monospace" font-weight="bold" font-size="6" fill="#b8d0ec" text-anchor="middle" dominant-baseline="central">0</text>
<text x="341.1" y="351.3" font-family="Liberation Mono, monospace" font-weight="bold" font-size="6" fill="#7fa6d0" text-anchor="middle" dominant-baseline="central">...</text>
<text x="352.9" y="351.3" font-family="Liberation Mono, monospace" font-weight="bold" font-size="6" fill="#b8d0ec" text-anchor="middle" dominant-baseline="central">0</text>
<text x="364.70000000000005" y="351.3" font-family="Liberation Mono, monospace" font-weight="bold" font-size="6" fill="#b8d0ec" text-anchor="middle" dominant-baseline="central">15</text>
<text x="376.5" y="351.3" font-family="Liberation Mono, monospace" font-weight="bold" font-size="6" fill="#b8d0ec" text-anchor="middle" dominant-baseline="central">0</text>
<text x="211.3" y="358.20000000000005" font-family="Liberation Mono, monospace" font-weight="bold" font-size="6" fill="#b8d0ec" text-anchor="middle" dominant-baseline="central">0</text>
<text x="234.9" y="358.20000000000005" font-family="Liberation Mono, monospace" font-weight="bold" font-size="6" fill="#b8d0ec" text-anchor="middle" dominant-baseline="central">5</text>
<text x="258.5" y="358.20000000000005" font-family="Liberation Mono, monospace" font-weight="bold" font-size="6" fill="#b8d0ec" text-anchor="middle" dominant-baseline="central">5</text>
<text x="270.3" y="358.20000000000005" font-family="Liberation Mono, monospace" font-weight="bold" font-size="6" fill="#b8d0ec" text-anchor="middle" dominant-baseline="central">0</text>
<text x="282.1" y="358.20000000000005" font-family="Liberation Mono, monospace" font-weight="bold" font-size="6" fill="#b8d0ec" text-anchor="middle" dominant-baseline="central">1</text>
<text x="305.7" y="358.20000000000005" font-family="Liberation Mono, monospace" font-weight="bold" font-size="6" fill="#b8d0ec" text-anchor="middle" dominant-baseline="central">1</text>
<text x="317.5" y="358.20000000000005" font-family="Liberation Mono, monospace" font-weight="bold" font-size="6" fill="#b8d0ec" text-anchor="middle" dominant-baseline="central">3</text>
<text x="329.3" y="358.20000000000005" font-family="Liberation Mono, monospace" font-weight="bold" font-size="6" fill="#b8d0ec" text-anchor="middle" dominant-baseline="central">1</text>
<text x="341.1" y="358.20000000000005" font-family="Liberation Mono, monospace" font-weight="bold" font-size="6" fill="#b8d0ec" text-anchor="middle" dominant-baseline="central">33</text>
<text x="352.9" y="358.20000000000005" font-family="Liberation Mono, monospace" font-weight="bold" font-size="6" fill="#b8d0ec" text-anchor="middle" dominant-baseline="central">0</text>
<text x="364.70000000000005" y="358.20000000000005" font-family="Liberation Mono, monospace" font-weight="bold" font-size="6" fill="#b8d0ec" text-anchor="middle" dominant-baseline="central">0</text>
<text x="376.5" y="358.20000000000005" font-family="Liberation Mono, monospace" font-weight="bold" font-size="6" fill="#b8d0ec" text-anchor="middle" dominant-baseline="central">0</text>
<text x="199.5" y="365.1" font-family="Liberation Mono, monospace" font-weight="bold" font-size="6" fill="#b8d0ec" text-anchor="middle" dominant-baseline="central">0</text>
<text x="211.3" y="365.1" font-family="Liberation Mono, monospace" font-weight="bold" font-size="6" fill="#b8d0ec" text-anchor="middle" dominant-baseline="central">0</text>
<text x="223.1" y="365.1" font-family="Liberation Mono, monospace" font-weight="bold" font-size="6" fill="#b8d0ec" text-anchor="middle" dominant-baseline="central">0</text>
<text x="234.9" y="365.1" font-family="Liberation Mono, monospace" font-weight="bold" font-size="6" fill="#b8d0ec" text-anchor="middle" dominant-baseline="central">0</text>
<text x="246.7" y="365.1" font-family="Liberation Mono, monospace" font-weight="bold" font-size="6" fill="#b8d0ec" text-anchor="middle" dominant-baseline="central">0</text>
<text x="258.5" y="365.1" font-family="Liberation Mono, monospace" font-weight="bold" font-size="6" fill="#b8d0ec" text-anchor="middle" dominant-baseline="central">0</text>
<text x="270.3" y="365.1" font-family="Liberation Mono, monospace" font-weight="bold" font-size="6" fill="#b8d0ec" text-anchor="middle" dominant-baseline="central">0</text>
<text x="282.1" y="365.1" font-family="Liberation Mono, monospace" font-weight="bold" font-size="6" fill="#b8d0ec" text-anchor="middle" dominant-baseline="central">0</text>
<text x="293.9" y="365.1" font-family="Liberation Mono, monospace" font-weight="bold" font-size="6" fill="#b8d0ec" text-anchor="middle" dominant-baseline="central">0</text>
<text x="305.7" y="365.1" font-family="Liberation Mono, monospace" font-weight="bold" font-size="6" fill="#b8d0ec" text-anchor="middle" dominant-baseline="central">0</text>
<text x="317.5" y="365.1" font-family="Liberation Mono, monospace" font-weight="bold" font-size="6" fill="#b8d0ec" text-anchor="middle" dominant-baseline="central">0</text>
<text x="329.3" y="365.1" font-family="Liberation Mono, monospace" font-weight="bold" font-size="6" fill="#b8d0ec" text-anchor="middle" dominant-baseline="central">0</text>
<text x="341.1" y="365.1" font-family="Liberation Mono, monospace" font-weight="bold" font-size="6" fill="#b8d0ec" text-anchor="middle" dominant-baseline="central">0</text>
<text x="352.9" y="365.1" font-family="Liberation Mono, monospace" font-weight="bold" font-size="6" fill="#b8d0ec" text-anchor="middle" dominant-baseline="central">0</text>
<text x="364.70000000000005" y="365.1" font-family="Liberation Mono, monospace" font-weight="bold" font-size="6" fill="#b8d0ec" text-anchor="middle" dominant-baseline="central">0</text>
<text x="376.5" y="365.1" font-family="Liberation Mono, monospace" font-weight="bold" font-size="6" fill="#b8d0ec" text-anchor="middle" dominant-baseline="central">0</text>
<text x="199.5" y="372.0" font-family="Liberation Mono, monospace" font-weight="bold" font-size="6" fill="#b8d0ec" text-anchor="middle" dominant-baseline="central">0</text>
<text x="211.3" y="372.0" font-family="Liberation Mono, monospace" font-weight="bold" font-size="6" fill="#b8d0ec" text-anchor="middle" dominant-baseline="central">0</text>
<text x="223.1" y="372.0" font-family="Liberation Mono, monospace" font-weight="bold" font-size="6" fill="#b8d0ec" text-anchor="middle" dominant-baseline="central">0</text>
<text x="234.9" y="372.0" font-family="Liberation Mono, monospace" font-weight="bold" font-size="6" fill="#b8d0ec" text-anchor="middle" dominant-baseline="central">0</text>
<text x="246.7" y="372.0" font-family="Liberation Mono, monospace" font-weight="bold" font-size="6" fill="#b8d0ec" text-anchor="middle" dominant-baseline="central">0</text>
<text x="258.5" y="372.0" font-family="Liberation Mono, monospace" font-weight="bold" font-size="6" fill="#b8d0ec" text-anchor="middle" dominant-baseline="central">0</text>
<text x="270.3" y="372.0" font-family="Liberation Mono, monospace" font-weight="bold" font-size="6" fill="#b8d0ec" text-anchor="middle" dominant-baseline="central">0</text>
<text x="282.1" y="372.0" font-family="Liberation Mono, monospace" font-weight="bold" font-size="6" fill="#b8d0ec" text-anchor="middle" dominant-baseline="central">0</text>
<text x="293.9" y="372.0" font-family="Liberation Mono, monospace" font-weight="bold" font-size="6" fill="#b8d0ec" text-anchor="middle" dominant-baseline="central">0</text>
<text x="305.7" y="372.0" font-family="Liberation Mono, monospace" font-weight="bold" font-size="6" fill="#b8d0ec" text-anchor="middle" dominant-baseline="central">0</text>
<text x="317.5" y="372.0" font-family="Liberation Mono, monospace" font-weight="bold" font-size="6" fill="#b8d0ec" text-anchor="middle" dominant-baseline="central">0</text>
<text x="329.3" y="372.0" font-family="Liberation Mono, monospace" font-weight="bold" font-size="6" fill="#b8d0ec" text-anchor="middle" dominant-baseline="central">0</text>
<text x="341.1" y="372.0" font-family="Liberation Mono, monospace" font-weight="bold" font-size="6" fill="#b8d0ec" text-anchor="middle" dominant-baseline="central">0</text>
<text x="352.9" y="372.0" font-family="Liberation Mono, monospace" font-weight="bold" font-size="6" fill="#b8d0ec" text-anchor="middle" dominant-baseline="central">0</text>
<text x="364.70000000000005" y="372.0" font-family="Liberation Mono, monospace" font-weight="bold" font-size="6" fill="#b8d0ec" text-anchor="middle" dominant-baseline="central">0</text>
<text x="376.5" y="372.0" font-family="Liberation Mono, monospace" font-weight="bold" font-size="6" fill="#b8d0ec" text-anchor="middle" dominant-baseline="central">0</text>
<text x="199.5" y="378.90000000000003" font-family="Liberation Mono, monospace" font-weight="bold" font-size="6" fill="#b8d0ec" text-anchor="middle" dominant-baseline="central">0</text>
<text x="211.3" y="378.90000000000003" font-family="Liberation Mono, monospace" font-weight="bold" font-size="6" fill="#b8d0ec" text-anchor="middle" dominant-baseline="central">0</text>
<text x="223.1" y="378.90000000000003" font-family="Liberation Mono, monospace" font-weight="bold" font-size="6" fill="#b8d0ec" text-anchor="middle" dominant-baseline="central">0</text>
<text x="234.9" y="378.90000000000003" font-family="Liberation Mono, monospace" font-weight="bold" font-size="6" fill="#b8d0ec" text-anchor="middle" dominant-baseline="central">0</text>
<text x="246.7" y="378.90000000000003" font-family="Liberation Mono, monospace" font-weight="bold" font-size="6" fill="#b8d0ec" text-anchor="middle" dominant-baseline="central">0</text>
<text x="258.5" y="378.90000000000003" font-family="Liberation Mono, monospace" font-weight="bold" font-size="6" fill="#b8d0ec" text-anchor="middle" dominant-baseline="central">0</text>
<text x="270.3" y="378.90000000000003" font-family="Liberation Mono, monospace" font-weight="bold" font-size="6" fill="#b8d0ec" text-anchor="middle" dominant-baseline="central">0</text>
<text x="282.1" y="378.90000000000003" font-family="Liberation Mono, monospace" font-weight="bold" font-size="6" fill="#b8d0ec" text-anchor="middle" dominant-baseline="central">0</text>
<text x="293.9" y="378.90000000000003" font-family="Liberation Mono, monospace" font-weight="bold" font-size="6" fill="#b8d0ec" text-anchor="middle" dominant-baseline="central">0</text>
<text x="305.7" y="378.90000000000003" font-family="Liberation Mono, monospace" font-weight="bold" font-size="6" fill="#b8d0ec" text-anchor="middle" dominant-baseline="central">0</text>
<text x="317.5" y="378.90000000000003" font-family="Liberation Mono, monospace" font-weight="bold" font-size="6" fill="#b8d0ec" text-anchor="middle" dominant-baseline="central">0</text>
<text x="329.3" y="378.90000000000003" font-family="Liberation Mono, monospace" font-weight="bold" font-size="6" fill="#b8d0ec" text-anchor="middle" dominant-baseline="central">0</text>
<text x="341.1" y="378.90000000000003" font-family="Liberation Mono, monospace" font-weight="bold" font-size="6" fill="#b8d0ec" text-anchor="middle" dominant-baseline="central">0</text>
<text x="352.9" y="378.90000000000003" font-family="Liberation Mono, monospace" font-weight="bold" font-size="6" fill="#b8d0ec" text-anchor="middle" dominant-baseline="central">0</text>
<text x="364.70000000000005" y="378.90000000000003" font-family="Liberation Mono, monospace" font-weight="bold" font-size="6" fill="#b8d0ec" text-anchor="middle" dominant-baseline="central">0</text>
<text x="376.5" y="378.90000000000003" font-family="Liberation Mono, monospace" font-weight="bold" font-size="6" fill="#b8d0ec" text-anchor="middle" dominant-baseline="central">0</text>
<text x="199.5" y="385.8" font-family="Liberation Mono, monospace" font-weight="bold" font-size="6" fill="#b8d0ec" text-anchor="middle" dominant-baseline="central">0</text>
<text x="211.3" y="385.8" font-family="Liberation Mono, monospace" font-weight="bold" font-size="6" fill="#b8d0ec" text-anchor="middle" dominant-baseline="central">0</text>
<text x="223.1" y="385.8" font-family="Liberation Mono, monospace" font-weight="bold" font-size="6" fill="#b8d0ec" text-anchor="middle" dominant-baseline="central">0</text>
<text x="234.9" y="385.8" font-family="Liberation Mono, monospace" font-weight="bold" font-size="6" fill="#b8d0ec" text-anchor="middle" dominant-baseline="central">0</text>
<text x="246.7" y="385.8" font-family="Liberation Mono, monospace" font-weight="bold" font-size="6" fill="#b8d0ec" text-anchor="middle" dominant-baseline="central">0</text>
<text x="258.5" y="385.8" font-family="Liberation Mono, monospace" font-weight="bold" font-size="6" fill="#b8d0ec" text-anchor="middle" dominant-baseline="central">0</text>
<text x="270.3" y="385.8" font-family="Liberation Mono, monospace" font-weight="bold" font-size="6" fill="#b8d0ec" text-anchor="middle" dominant-baseline="central">0</text>
<text x="282.1" y="385.8" font-family="Liberation Mono, monospace" font-weight="bold" font-size="6" fill="#b8d0ec" text-anchor="middle" dominant-baseline="central">0</text>
<text x="293.9" y="385.8" font-family="Liberation Mono, monospace" font-weight="bold" font-size="6" fill="#b8d0ec" text-anchor="middle" dominant-baseline="central">0</text>
<text x="305.7" y="385.8" font-family="Liberation Mono, monospace" font-weight="bold" font-size="6" fill="#b8d0ec" text-anchor="middle" dominant-baseline="central">0</text>
<text x="317.5" y="385.8" font-family="Liberation Mono, monospace" font-weight="bold" font-size="6" fill="#b8d0ec" text-anchor="middle" dominant-baseline="central">0</text>
<text x="329.3" y="385.8" font-family="Liberation Mono, monospace" font-weight="bold" font-size="6" fill="#b8d0ec" text-anchor="middle" dominant-baseline="central">0</text>
<text x="341.1" y="385.8" font-family="Liberation Mono, monospace" font-weight="bold" font-size="6" fill="#b8d0ec" text-anchor="middle" dominant-baseline="central">0</text>
<text x="352.9" y="385.8" font-family="Liberation Mono, monospace" font-weight="bold" font-size="6" fill="#b8d0ec" text-anchor="middle" dominant-baseline="central">0</text>
<text x="364.70000000000005" y="385.8" font-family="Liberation Mono, monospace" font-weight="bold" font-size="6" fill="#b8d0ec" text-anchor="middle" dominant-baseline="central">0</text>
<text x="376.5" y="385.8" font-family="Liberation Mono, monospace" font-weight="bold" font-size="6" fill="#b8d0ec" text-anchor="middle" dominant-baseline="central">0</text>
<text x="199.5" y="392.70000000000005" font-family="Liberation Mono, monospace" font-weight="bold" font-size="6" fill="#b8d0ec" text-anchor="middle" dominant-baseline="central">0</text>
<text x="211.3" y="392.70000000000005" font-family="Liberation Mono, monospace" font-weight="bold" font-size="6" fill="#b8d0ec" text-anchor="middle" dominant-baseline="central">0</text>
<text x="223.1" y="392.70000000000005" font-family="Liberation Mono, monospace" font-weight="bold" font-size="6" fill="#b8d0ec" text-anchor="middle" dominant-baseline="central">0</text>
<text x="234.9" y="392.70000000000005" font-family="Liberation Mono, monospace" font-weight="bold" font-size="6" fill="#b8d0ec" text-anchor="middle" dominant-baseline="central">0</text>
<text x="246.7" y="392.70000000000005" font-family="Liberation Mono, monospace" font-weight="bold" font-size="6" fill="#b8d0ec" text-anchor="middle" dominant-baseline="central">0</text>
<text x="258.5" y="392.70000000000005" font-family="Liberation Mono, monospace" font-weight="bold" font-size="6" fill="#b8d0ec" text-anchor="middle" dominant-baseline="central">0</text>
<text x="270.3" y="392.70000000000005" font-family="Liberation Mono, monospace" font-weight="bold" font-size="6" fill="#b8d0ec" text-anchor="middle" dominant-baseline="central">0</text>
<text x="282.1" y="392.70000000000005" font-family="Liberation Mono, monospace" font-weight="bold" font-size="6" fill="#b8d0ec" text-anchor="middle" dominant-baseline="central">0</text>
<text x="293.9" y="392.70000000000005" font-family="Liberation Mono, monospace" font-weight="bold" font-size="6" fill="#b8d0ec" text-anchor="middle" dominant-baseline="central">0</text>
<text x="305.7" y="392.70000000000005" font-family="Liberation Mono, monospace" font-weight="bold" font-size="6" fill="#b8d0ec" text-anchor="middle" dominant-baseline="central">0</text>
<text x="317.5" y="392.70000000000005" font-family="Liberation Mono, monospace" font-weight="bold" font-size="6" fill="#b8d0ec" text-anchor="middle" dominant-baseline="central">0</text>
<text x="329.3" y="392.70000000000005" font-family="Liberation Mono, monospace" font-weight="bold" font-size="6" fill="#b8d0ec" text-anchor="middle" dominant-baseline="central">0</text>
<text x="341.1" y="392.70000000000005" font-family="Liberation Mono, monospace" font-weight="bold" font-size="6" fill="#b8d0ec" text-anchor="middle" dominant-baseline="central">0</text>
<text x="352.9" y="392.70000000000005" font-family="Liberation Mono, monospace" font-weight="bold" font-size="6" fill="#b8d0ec" text-anchor="middle" dominant-baseline="central">0</text>
<text x="364.70000000000005" y="392.70000000000005" font-family="Liberation Mono, monospace" font-weight="bold" font-size="6" fill="#b8d0ec" text-anchor="middle" dominant-baseline="central">0</text>
<text x="376.5" y="392.70000000000005" font-family="Liberation Mono, monospace" font-weight="bold" font-size="6" fill="#b8d0ec" text-anchor="middle" dominant-baseline="central">0</text>
<text x="199.5" y="399.6" font-family="Liberation Mono, monospace" font-weight="bold" font-size="6" fill="#b8d0ec" text-anchor="middle" dominant-baseline="central">0</text>
<text x="211.3" y="399.6" font-family="Liberation Mono, monospace" font-weight="bold" font-size="6" fill="#b8d0ec" text-anchor="middle" dominant-baseline="central">0</text>
<text x="223.1" y="399.6" font-family="Liberation Mono, monospace" font-weight="bold" font-size="6" fill="#b8d0ec" text-anchor="middle" dominant-baseline="central">0</text>
<text x="234.9" y="399.6" font-family="Liberation Mono, monospace" font-weight="bold" font-size="6" fill="#b8d0ec" text-anchor="middle" dominant-baseline="central">0</text>
<text x="246.7" y="399.6" font-family="Liberation Mono, monospace" font-weight="bold" font-size="6" fill="#b8d0ec" text-anchor="middle" dominant-baseline="central">0</text>
<text x="258.5" y="399.6" font-family="Liberation Mono, monospace" font-weight="bold" font-size="6" fill="#b8d0ec" text-anchor="middle" dominant-baseline="central">0</text>
<text x="270.3" y="399.6" font-family="Liberation Mono, monospace" font-weight="bold" font-size="6" fill="#b8d0ec" text-anchor="middle" dominant-baseline="central">0</text>
<text x="282.1" y="399.6" font-family="Liberation Mono, monospace" font-weight="bold" font-size="6" fill="#b8d0ec" text-anchor="middle" dominant-baseline="central">0</text>
<text x="293.9" y="399.6" font-family="Liberation Mono, monospace" font-weight="bold" font-size="6" fill="#b8d0ec" text-anchor="middle" dominant-baseline="central">0</text>
<text x="305.7" y="399.6" font-family="Liberation Mono, monospace" font-weight="bold" font-size="6" fill="#b8d0ec" text-anchor="middle" dominant-baseline="central">0</text>
<text x="317.5" y="399.6" font-family="Liberation Mono, monospace" font-weight="bold" font-size="6" fill="#b8d0ec" text-anchor="middle" dominant-baseline="central">0</text>
<text x="329.3" y="399.6" font-family="Liberation Mono, monospace" font-weight="bold" font-size="6" fill="#b8d0ec" text-anchor="middle" dominant-baseline="central">0</text>
<text x="341.1" y="399.6" font-family="Liberation Mono, monospace" font-weight="bold" font-size="6" fill="#b8d0ec" text-anchor="middle" dominant-baseline="central">0</text>
<text x="352.9" y="399.6" font-family="Liberation Mono, monospace" font-weight="bold" font-size="6" fill="#b8d0ec" text-anchor="middle" dominant-baseline="central">0</text>
<text x="364.70000000000005" y="399.6" font-family="Liberation Mono, monospace" font-weight="bold" font-size="6" fill="#b8d0ec" text-anchor="middle" dominant-baseline="central">0</text>
<text x="376.5" y="399.6" font-family="Liberation Mono, monospace" font-weight="bold" font-size="6" fill="#b8d0ec" text-anchor="middle" dominant-baseline="central">0</text>
<text x="199.5" y="406.5" font-family="Liberation Mono, monospace" font-weight="bold" font-size="6" fill="#b8d0ec" text-anchor="middle" dominant-baseline="central">0</text>
<text x="211.3" y="406.5" font-family="Liberation Mono, monospace" font-weight="bold" font-size="6" fill="#b8d0ec" text-anchor="middle" dominant-baseline="central">0</text>
<text x="223.1" y="406.5" font-family="Liberation Mono, monospace" font-weight="bold" font-size="6" fill="#b8d0ec" text-anchor="middle" dominant-baseline="central">0</text>
<text x="234.9" y="406.5" font-family="Liberation Mono, monospace" font-weight="bold" font-size="6" fill="#b8d0ec" text-anchor="middle" dominant-baseline="central">0</text>
<text x="246.7" y="406.5" font-family="Liberation Mono, monospace" font-weight="bold" font-size="6" fill="#b8d0ec" text-anchor="middle" dominant-baseline="central">0</text>
<text x="258.5" y="406.5" font-family="Liberation Mono, monospace" font-weight="bold" font-size="6" fill="#b8d0ec" text-anchor="middle" dominant-baseline="central">0</text>
<text x="270.3" y="406.5" font-family="Liberation Mono, monospace" font-weight="bold" font-size="6" fill="#b8d0ec" text-anchor="middle" dominant-baseline="central">0</text>
<text x="282.1" y="406.5" font-family="Liberation Mono, monospace" font-weight="bold" font-size="6" fill="#b8d0ec" text-anchor="middle" dominant-baseline="central">0</text>
<text x="293.9" y="406.5" font-family="Liberation Mono, monospace" font-weight="bold" font-size="6" fill="#b8d0ec" text-anchor="middle" dominant-baseline="central">0</text>
<text x="305.7" y="406.5" font-family="Liberation Mono, monospace" font-weight="bold" font-size="6" fill="#b8d0ec" text-anchor="middle" dominant-baseline="central">0</text>
<text x="317.5" y="406.5" font-family="Liberation Mono, monospace" font-weight="bold" font-size="6" fill="#b8d0ec" text-anchor="middle" dominant-baseline="central">0</text>
<text x="329.3" y="406.5" font-family="Liberation Mono, monospace" font-weight="bold" font-size="6" fill="#b8d0ec" text-anchor="middle" dominant-baseline="central">0</text>
<text x="341.1" y="406.5" font-family="Liberation Mono, monospace" font-weight="bold" font-size="6" fill="#b8d0ec" text-anchor="middle" dominant-baseline="central">0</text>
<text x="352.9" y="406.5" font-family="Liberation Mono, monospace" font-weight="bold" font-size="6" fill="#b8d0ec" text-anchor="middle" dominant-baseline="central">0</text>
<text x="364.70000000000005" y="406.5" font-family="Liberation Mono, monospace" font-weight="bold" font-size="6" fill="#b8d0ec" text-anchor="middle" dominant-baseline="central">0</text>
<text x="376.5" y="406.5" font-family="Liberation Mono, monospace" font-weight="bold" font-size="6" fill="#b8d0ec" text-anchor="middle" dominant-baseline="central">0</text>
<text x="199.5" y="413.40000000000003" font-family="Liberation Mono, monospace" font-weight="bold" font-size="6" fill="#b8d0ec" text-anchor="middle" dominant-baseline="central">0</text>
<text x="211.3" y="413.40000000000003" font-family="Liberation Mono, monospace" font-weight="bold" font-size="6" fill="#b8d0ec" text-anchor="middle" dominant-baseline="central">0</text>
<text x="223.1" y="413.40000000000003" font-family="Liberation Mono, monospace" font-weight="bold" font-size="6" fill="#b8d0ec" text-anchor="middle" dominant-baseline="central">0</text>
<text x="234.9" y="413.40000000000003" font-family="Liberation Mono, monospace" font-weight="bold" font-size="6" fill="#b8d0ec" text-anchor="middle" dominant-baseline="central">0</text>
<text x="246.7" y="413.40000000000003" font-family="Liberation Mono, monospace" font-weight="bold" font-size="6" fill="#b8d0ec" text-anchor="middle" dominant-baseline="central">0</text>
<text x="258.5" y="413.40000000000003" font-family="Liberation Mono, monospace" font-weight="bold" font-size="6" fill="#b8d0ec" text-anchor="middle" dominant-baseline="central">0</text>
<text x="270.3" y="413.40000000000003" font-family="Liberation Mono, monospace" font-weight="bold" font-size="6" fill="#b8d0ec" text-anchor="middle" dominant-baseline="central">0</text>
<text x="282.1" y="413.40000000000003" font-family="Liberation Mono, monospace" font-weight="bold" font-size="6" fill="#b8d0ec" text-anchor="middle" dominant-baseline="central">0</text>
<text x="293.9" y="413.40000000000003" font-family="Liberation Mono, monospace" font-weight="bold" font-size="6" fill="#b8d0ec" text-anchor="middle" dominant-baseline="central">0</text>
<text x="305.7" y="413.40000000000003" font-family="Liberation Mono, monospace" font-weight="bold" font-size="6" fill="#b8d0ec" text-anchor="middle" dominant-baseline="central">0</text>
<text x="317.5" y="413.40000000000003" font-family="Liberation Mono, monospace" font-weight="bold" font-size="6" fill="#b8d0ec" text-anchor="middle" dominant-baseline="central">0</text>
<text x="329.3" y="413.40000000000003" font-family="Liberation Mono, monospace" font-weight="bold" font-size="6" fill="#b8d0ec" text-anchor="middle" dominant-baseline="central">0</text>
<text x="341.1" y="413.40000000000003" font-family="Liberation Mono, monospace" font-weight="bold" font-size="6" fill="#b8d0ec" text-anchor="middle" dominant-baseline="central">0</text>
<text x="352.9" y="413.40000000000003" font-family="Liberation Mono, monospace" font-weight="bold" font-size="6" fill="#b8d0ec" text-anchor="middle" dominant-baseline="central">0</text>
<text x="364.70000000000005" y="413.40000000000003" font-family="Liberation Mono, monospace" font-weight="bold" font-size="6" fill="#b8d0ec" text-anchor="middle" dominant-baseline="central">0</text>
<text x="376.5" y="413.40000000000003" font-family="Liberation Mono, monospace" font-weight="bold" font-size="6" fill="#b8d0ec" text-anchor="middle" dominant-baseline="central">0</text>
<text x="199.5" y="420.3" font-family="Liberation Mono, monospace" font-weight="bold" font-size="6" fill="#b8d0ec" text-anchor="middle" dominant-baseline="central">0</text>
<text x="211.3" y="420.3" font-family="Liberation Mono, monospace" font-weight="bold" font-size="6" fill="#b8d0ec" text-anchor="middle" dominant-baseline="central">0</text>
<text x="223.1" y="420.3" font-family="Liberation Mono, monospace" font-weight="bold" font-size="6" fill="#b8d0ec" text-anchor="middle" dominant-baseline="central">0</text>
<text x="234.9" y="420.3" font-family="Liberation Mono, monospace" font-weight="bold" font-size="6" fill="#b8d0ec" text-anchor="middle" dominant-baseline="central">0</text>
<text x="246.7" y="420.3" font-family="Liberation Mono, monospace" font-weight="bold" font-size="6" fill="#b8d0ec" text-anchor="middle" dominant-baseline="central">0</text>
<text x="258.5" y="420.3" font-family="Liberation Mono, monospace" font-weight="bold" font-size="6" fill="#b8d0ec" text-anchor="middle" dominant-baseline="central">0</text>
<text x="270.3" y="420.3" font-family="Liberation Mono, monospace" font-weight="bold" font-size="6" fill="#b8d0ec" text-anchor="middle" dominant-baseline="central">0</text>
<text x="282.1" y="420.3" font-family="Liberation Mono, monospace" font-weight="bold" font-size="6" fill="#b8d0ec" text-anchor="middle" dominant-baseline="central">0</text>
<text x="293.9" y="420.3" font-family="Liberation Mono, monospace" font-weight="bold" font-size="6" fill="#b8d0ec" text-anchor="middle" dominant-baseline="central">0</text>
<text x="305.7" y="420.3" font-family="Liberation Mono, monospace" font-weight="bold" font-size="6" fill="#b8d0ec" text-anchor="middle" dominant-baseline="central">0</text>
<text x="317.5" y="420.3" font-family="Liberation Mono, monospace" font-weight="bold" font-size="6" fill="#b8d0ec" text-anchor="middle" dominant-baseline="central">0</text>
<text x="329.3" y="420.3" font-family="Liberation Mono, monospace" font-weight="bold" font-size="6" fill="#b8d0ec" text-anchor="middle" dominant-baseline="central">0</text>
<text x="341.1" y="420.3" font-family="Liberation Mono, monospace" font-weight="bold" font-size="6" fill="#b8d0ec" text-anchor="middle" dominant-baseline="central">0</text>
<text x="352.9" y="420.3" font-family="Liberation Mono, monospace" font-weight="bold" font-size="6" fill="#b8d0ec" text-anchor="middle" dominant-baseline="central">0</text>
<text x="364.70000000000005" y="420.3" font-family="Liberation Mono, monospace" font-weight="bold" font-size="6" fill="#b8d0ec" text-anchor="middle" dominant-baseline="central">0</text>
<text x="376.5" y="420.3" font-family="Liberation Mono, monospace" font-weight="bold" font-size="6" fill="#b8d0ec" text-anchor="middle" dominant-baseline="central">0</text>
<path d="M899.5,306.5 Q996,304.5 1092.5,306.5 L1093.5,429.5 Q996,436.5 898.5,428.5 Z" fill="#1c4f8e"/>
<path d="M900.5,308 Q996,306 1091.5,308 L1092.5,428.5 Q996,435.5 899.5,427.5 Z" fill="#205e9f"/>
<text x="996" y="311" font-family="Liberation Mono, monospace" font-weight="bold" font-size="8.5" fill="#f0f0f0" text-anchor="middle" dominant-baseline="central">RAM</text>
<rect x="902.5" y="314" width="11" height="6" fill="#e3a04a"/>
<text x="919.6999999999999" y="317.0" font-family="Liberation Mono, monospace" font-weight="bold" font-size="6.2" fill="#9cc2e8" text-anchor="middle" dominant-baseline="central">0</text>
<text x="931.5999999999999" y="317.0" font-family="Liberation Mono, monospace" font-weight="bold" font-size="6.2" fill="#9cc2e8" text-anchor="middle" dominant-baseline="central">0</text>
<text x="943.5" y="317.0" font-family="Liberation Mono, monospace" font-weight="bold" font-size="6.2" fill="#9cc2e8" text-anchor="middle" dominant-baseline="central">0</text>
<text x="955.4" y="317.0" font-family="Liberation Mono, monospace" font-weight="bold" font-size="6.2" fill="#9cc2e8" text-anchor="middle" dominant-baseline="central">0</text>
<text x="967.3" y="317.0" font-family="Liberation Mono, monospace" font-weight="bold" font-size="6.2" fill="#9cc2e8" text-anchor="middle" dominant-baseline="central">0</text>
<text x="979.1999999999999" y="317.0" font-family="Liberation Mono, monospace" font-weight="bold" font-size="6.2" fill="#9cc2e8" text-anchor="middle" dominant-baseline="central">0</text>
<text x="991.0999999999999" y="317.0" font-family="Liberation Mono, monospace" font-weight="bold" font-size="6.2" fill="#9cc2e8" text-anchor="middle" dominant-baseline="central">0</text>
<text x="1003.0" y="317.0" font-family="Liberation Mono, monospace" font-weight="bold" font-size="6.2" fill="#9cc2e8" text-anchor="middle" dominant-baseline="central">0</text>
<text x="1014.9" y="317.0" font-family="Liberation Mono, monospace" font-weight="bold" font-size="6.2" fill="#9cc2e8" text-anchor="middle" dominant-baseline="central">0</text>
<text x="1026.8" y="317.0" font-family="Liberation Mono, monospace" font-weight="bold" font-size="6.2" fill="#9cc2e8" text-anchor="middle" dominant-baseline="central">0</text>
<text x="1038.7" y="317.0" font-family="Liberation Mono, monospace" font-weight="bold" font-size="6.2" fill="#9cc2e8" text-anchor="middle" dominant-baseline="central">0</text>
<text x="1050.6" y="317.0" font-family="Liberation Mono, monospace" font-weight="bold" font-size="6.2" fill="#9cc2e8" text-anchor="middle" dominant-baseline="central">0</text>
<text x="1062.5" y="317.0" font-family="Liberation Mono, monospace" font-weight="bold" font-size="6.2" fill="#9cc2e8" text-anchor="middle" dominant-baseline="central">0</text>
<text x="1074.3999999999999" y="317.0" font-family="Liberation Mono, monospace" font-weight="bold" font-size="6.2" fill="#9cc2e8" text-anchor="middle" dominant-baseline="central">0</text>
<text x="1086.3" y="317.0" font-family="Liberation Mono, monospace" font-weight="bold" font-size="6.2" fill="#9cc2e8" text-anchor="middle" dominant-baseline="central">0</text>
<text x="907.8" y="323.95" font-family="Liberation Mono, monospace" font-weight="bold" font-size="6.2" fill="#9cc2e8" text-anchor="middle" dominant-baseline="central">0</text>
<text x="919.6999999999999" y="323.95" font-family="Liberation Mono, monospace" font-weight="bold" font-size="6.2" fill="#9cc2e8" text-anchor="middle" dominant-baseline="central">0</text>
<text x="931.5999999999999" y="323.95" font-family="Liberation Mono, monospace" font-weight="bold" font-size="6.2" fill="#9cc2e8" text-anchor="middle" dominant-baseline="central">0</text>
<text x="943.5" y="323.95" font-family="Liberation Mono, monospace" font-weight="bold" font-size="6.2" fill="#9cc2e8" text-anchor="middle" dominant-baseline="central">0</text>
<text x="955.4" y="323.95" font-family="Liberation Mono, monospace" font-weight="bold" font-size="6.2" fill="#9cc2e8" text-anchor="middle" dominant-baseline="central">0</text>
<text x="967.3" y="323.95" font-family="Liberation Mono, monospace" font-weight="bold" font-size="6.2" fill="#9cc2e8" text-anchor="middle" dominant-baseline="central">0</text>
<text x="979.1999999999999" y="323.95" font-family="Liberation Mono, monospace" font-weight="bold" font-size="6.2" fill="#9cc2e8" text-anchor="middle" dominant-baseline="central">0</text>
<text x="991.0999999999999" y="323.95" font-family="Liberation Mono, monospace" font-weight="bold" font-size="6.2" fill="#9cc2e8" text-anchor="middle" dominant-baseline="central">0</text>
<text x="1003.0" y="323.95" font-family="Liberation Mono, monospace" font-weight="bold" font-size="6.2" fill="#9cc2e8" text-anchor="middle" dominant-baseline="central">0</text>
<text x="1014.9" y="323.95" font-family="Liberation Mono, monospace" font-weight="bold" font-size="6.2" fill="#9cc2e8" text-anchor="middle" dominant-baseline="central">0</text>
<text x="1026.8" y="323.95" font-family="Liberation Mono, monospace" font-weight="bold" font-size="6.2" fill="#9cc2e8" text-anchor="middle" dominant-baseline="central">0</text>
<text x="1038.7" y="323.95" font-family="Liberation Mono, monospace" font-weight="bold" font-size="6.2" fill="#9cc2e8" text-anchor="middle" dominant-baseline="central">0</text>
<text x="1050.6" y="323.95" font-family="Liberation Mono, monospace" font-weight="bold" font-size="6.2" fill="#9cc2e8" text-anchor="middle" dominant-baseline="central">0</text>
<text x="1062.5" y="323.95" font-family="Liberation Mono, monospace" font-weight="bold" font-size="6.2" fill="#9cc2e8" text-anchor="middle" dominant-baseline="central">0</text>
<text x="1074.3999999999999" y="323.95" font-family="Liberation Mono, monospace" font-weight="bold" font-size="6.2" fill="#9cc2e8" text-anchor="middle" dominant-baseline="central">0</text>
<text x="1086.3" y="323.95" font-family="Liberation Mono, monospace" font-weight="bold" font-size="6.2" fill="#9cc2e8" text-anchor="middle" dominant-baseline="central">0</text>
<text x="907.8" y="330.9" font-family="Liberation Mono, monospace" font-weight="bold" font-size="6.2" fill="#9cc2e8" text-anchor="middle" dominant-baseline="central">0</text>
<text x="919.6999999999999" y="330.9" font-family="Liberation Mono, monospace" font-weight="bold" font-size="6.2" fill="#9cc2e8" text-anchor="middle" dominant-baseline="central">0</text>
<text x="931.5999999999999" y="330.9" font-family="Liberation Mono, monospace" font-weight="bold" font-size="6.2" fill="#9cc2e8" text-anchor="middle" dominant-baseline="central">0</text>
<text x="943.5" y="330.9" font-family="Liberation Mono, monospace" font-weight="bold" font-size="6.2" fill="#9cc2e8" text-anchor="middle" dominant-baseline="central">0</text>
<text x="955.4" y="330.9" font-family="Liberation Mono, monospace" font-weight="bold" font-size="6.2" fill="#9cc2e8" text-anchor="middle" dominant-baseline="central">0</text>
<text x="967.3" y="330.9" font-family="Liberation Mono, monospace" font-weight="bold" font-size="6.2" fill="#9cc2e8" text-anchor="middle" dominant-baseline="central">0</text>
<text x="979.1999999999999" y="330.9" font-family="Liberation Mono, monospace" font-weight="bold" font-size="6.2" fill="#9cc2e8" text-anchor="middle" dominant-baseline="central">0</text>
<text x="991.0999999999999" y="330.9" font-family="Liberation Mono, monospace" font-weight="bold" font-size="6.2" fill="#9cc2e8" text-anchor="middle" dominant-baseline="central">0</text>
<text x="1003.0" y="330.9" font-family="Liberation Mono, monospace" font-weight="bold" font-size="6.2" fill="#9cc2e8" text-anchor="middle" dominant-baseline="central">0</text>
<text x="1014.9" y="330.9" font-family="Liberation Mono, monospace" font-weight="bold" font-size="6.2" fill="#9cc2e8" text-anchor="middle" dominant-baseline="central">0</text>
<text x="1026.8" y="330.9" font-family="Liberation Mono, monospace" font-weight="bold" font-size="6.2" fill="#9cc2e8" text-anchor="middle" dominant-baseline="central">0</text>
<text x="1038.7" y="330.9" font-family="Liberation Mono, monospace" font-weight="bold" font-size="6.2" fill="#9cc2e8" text-anchor="middle" dominant-baseline="central">0</text>
<text x="1050.6" y="330.9" font-family="Liberation Mono, monospace" font-weight="bold" font-size="6.2" fill="#9cc2e8" text-anchor="middle" dominant-baseline="central">0</text>
<text x="1062.5" y="330.9" font-family="Liberation Mono, monospace" font-weight="bold" font-size="6.2" fill="#9cc2e8" text-anchor="middle" dominant-baseline="central">0</text>
<text x="1074.3999999999999" y="330.9" font-family="Liberation Mono, monospace" font-weight="bold" font-size="6.2" fill="#9cc2e8" text-anchor="middle" dominant-baseline="central">0</text>
<text x="1086.3" y="330.9" font-family="Liberation Mono, monospace" font-weight="bold" font-size="6.2" fill="#9cc2e8" text-anchor="middle" dominant-baseline="central">0</text>
<text x="907.8" y="337.85" font-family="Liberation Mono, monospace" font-weight="bold" font-size="6.2" fill="#9cc2e8" text-anchor="middle" dominant-baseline="central">0</text>
<text x="919.6999999999999" y="337.85" font-family="Liberation Mono, monospace" font-weight="bold" font-size="6.2" fill="#9cc2e8" text-anchor="middle" dominant-baseline="central">0</text>
<text x="931.5999999999999" y="337.85" font-family="Liberation Mono, monospace" font-weight="bold" font-size="6.2" fill="#9cc2e8" text-anchor="middle" dominant-baseline="central">0</text>
<text x="943.5" y="337.85" font-family="Liberation Mono, monospace" font-weight="bold" font-size="6.2" fill="#9cc2e8" text-anchor="middle" dominant-baseline="central">0</text>
<text x="955.4" y="337.85" font-family="Liberation Mono, monospace" font-weight="bold" font-size="6.2" fill="#9cc2e8" text-anchor="middle" dominant-baseline="central">0</text>
<text x="967.3" y="337.85" font-family="Liberation Mono, monospace" font-weight="bold" font-size="6.2" fill="#9cc2e8" text-anchor="middle" dominant-baseline="central">0</text>
<text x="979.1999999999999" y="337.85" font-family="Liberation Mono, monospace" font-weight="bold" font-size="6.2" fill="#9cc2e8" text-anchor="middle" dominant-baseline="central">0</text>
<text x="991.0999999999999" y="337.85" font-family="Liberation Mono, monospace" font-weight="bold" font-size="6.2" fill="#9cc2e8" text-anchor="middle" dominant-baseline="central">0</text>
<text x="1003.0" y="337.85" font-family="Liberation Mono, monospace" font-weight="bold" font-size="6.2" fill="#9cc2e8" text-anchor="middle" dominant-baseline="central">0</text>
<text x="1014.9" y="337.85" font-family="Liberation Mono, monospace" font-weight="bold" font-size="6.2" fill="#9cc2e8" text-anchor="middle" dominant-baseline="central">0</text>
<text x="1026.8" y="337.85" font-family="Liberation Mono, monospace" font-weight="bold" font-size="6.2" fill="#9cc2e8" text-anchor="middle" dominant-baseline="central">0</text>
<text x="1038.7" y="337.85" font-family="Liberation Mono, monospace" font-weight="bold" font-size="6.2" fill="#9cc2e8" text-anchor="middle" dominant-baseline="central">0</text>
<text x="1050.6" y="337.85" font-family="Liberation Mono, monospace" font-weight="bold" font-size="6.2" fill="#9cc2e8" text-anchor="middle" dominant-baseline="central">0</text>
<text x="1062.5" y="337.85" font-family="Liberation Mono, monospace" font-weight="bold" font-size="6.2" fill="#9cc2e8" text-anchor="middle" dominant-baseline="central">0</text>
<text x="1074.3999999999999" y="337.85" font-family="Liberation Mono, monospace" font-weight="bold" font-size="6.2" fill="#9cc2e8" text-anchor="middle" dominant-baseline="central">0</text>
<text x="1086.3" y="337.85" font-family="Liberation Mono, monospace" font-weight="bold" font-size="6.2" fill="#9cc2e8" text-anchor="middle" dominant-baseline="central">0</text>
<text x="907.8" y="344.8" font-family="Liberation Mono, monospace" font-weight="bold" font-size="6.2" fill="#9cc2e8" text-anchor="middle" dominant-baseline="central">0</text>
<text x="919.6999999999999" y="344.8" font-family="Liberation Mono, monospace" font-weight="bold" font-size="6.2" fill="#9cc2e8" text-anchor="middle" dominant-baseline="central">0</text>
<text x="931.5999999999999" y="344.8" font-family="Liberation Mono, monospace" font-weight="bold" font-size="6.2" fill="#9cc2e8" text-anchor="middle" dominant-baseline="central">0</text>
<text x="943.5" y="344.8" font-family="Liberation Mono, monospace" font-weight="bold" font-size="6.2" fill="#9cc2e8" text-anchor="middle" dominant-baseline="central">0</text>
<text x="955.4" y="344.8" font-family="Liberation Mono, monospace" font-weight="bold" font-size="6.2" fill="#9cc2e8" text-anchor="middle" dominant-baseline="central">0</text>
<text x="967.3" y="344.8" font-family="Liberation Mono, monospace" font-weight="bold" font-size="6.2" fill="#9cc2e8" text-anchor="middle" dominant-baseline="central">0</text>
<text x="979.1999999999999" y="344.8" font-family="Liberation Mono, monospace" font-weight="bold" font-size="6.2" fill="#9cc2e8" text-anchor="middle" dominant-baseline="central">0</text>
<text x="991.0999999999999" y="344.8" font-family="Liberation Mono, monospace" font-weight="bold" font-size="6.2" fill="#9cc2e8" text-anchor="middle" dominant-baseline="central">0</text>
<text x="1003.0" y="344.8" font-family="Liberation Mono, monospace" font-weight="bold" font-size="6.2" fill="#9cc2e8" text-anchor="middle" dominant-baseline="central">0</text>
<text x="1014.9" y="344.8" font-family="Liberation Mono, monospace" font-weight="bold" font-size="6.2" fill="#9cc2e8" text-anchor="middle" dominant-baseline="central">0</text>
<text x="1026.8" y="344.8" font-family="Liberation Mono, monospace" font-weight="bold" font-size="6.2" fill="#9cc2e8" text-anchor="middle" dominant-baseline="central">0</text>
<text x="1038.7" y="344.8" font-family="Liberation Mono, monospace" font-weight="bold" font-size="6.2" fill="#9cc2e8" text-anchor="middle" dominant-baseline="central">0</text>
<text x="1050.6" y="344.8" font-family="Liberation Mono, monospace" font-weight="bold" font-size="6.2" fill="#9cc2e8" text-anchor="middle" dominant-baseline="central">0</text>
<text x="1062.5" y="344.8" font-family="Liberation Mono, monospace" font-weight="bold" font-size="6.2" fill="#9cc2e8" text-anchor="middle" dominant-baseline="central">0</text>
<text x="1074.3999999999999" y="344.8" font-family="Liberation Mono, monospace" font-weight="bold" font-size="6.2" fill="#9cc2e8" text-anchor="middle" dominant-baseline="central">0</text>
<text x="1086.3" y="344.8" font-family="Liberation Mono, monospace" font-weight="bold" font-size="6.2" fill="#9cc2e8" text-anchor="middle" dominant-baseline="central">0</text>
<text x="907.8" y="351.75" font-family="Liberation Mono, monospace" font-weight="bold" font-size="6.2" fill="#9cc2e8" text-anchor="middle" dominant-baseline="central">0</text>
<text x="919.6999999999999" y="351.75" font-family="Liberation Mono, monospace" font-weight="bold" font-size="6.2" fill="#9cc2e8" text-anchor="middle" dominant-baseline="central">0</text>
<text x="931.5999999999999" y="351.75" font-family="Liberation Mono, monospace" font-weight="bold" font-size="6.2" fill="#9cc2e8" text-anchor="middle" dominant-baseline="central">0</text>
<text x="943.5" y="351.75" font-family="Liberation Mono, monospace" font-weight="bold" font-size="6.2" fill="#9cc2e8" text-anchor="middle" dominant-baseline="central">0</text>
<text x="955.4" y="351.75" font-family="Liberation Mono, monospace" font-weight="bold" font-size="6.2" fill="#9cc2e8" text-anchor="middle" dominant-baseline="central">0</text>
<text x="967.3" y="351.75" font-family="Liberation Mono, monospace" font-weight="bold" font-size="6.2" fill="#9cc2e8" text-anchor="middle" dominant-baseline="central">0</text>
<text x="979.1999999999999" y="351.75" font-family="Liberation Mono, monospace" font-weight="bold" font-size="6.2" fill="#9cc2e8" text-anchor="middle" dominant-baseline="central">0</text>
<text x="991.0999999999999" y="351.75" font-family="Liberation Mono, monospace" font-weight="bold" font-size="6.2" fill="#9cc2e8" text-anchor="middle" dominant-baseline="central">0</text>
<text x="1003.0" y="351.75" font-family="Liberation Mono, monospace" font-weight="bold" font-size="6.2" fill="#9cc2e8" text-anchor="middle" dominant-baseline="central">0</text>
<text x="1014.9" y="351.75" font-family="Liberation Mono, monospace" font-weight="bold" font-size="6.2" fill="#9cc2e8" text-anchor="middle" dominant-baseline="central">0</text>
<text x="1026.8" y="351.75" font-family="Liberation Mono, monospace" font-weight="bold" font-size="6.2" fill="#9cc2e8" text-anchor="middle" dominant-baseline="central">0</text>
<text x="1038.7" y="351.75" font-family="Liberation Mono, monospace" font-weight="bold" font-size="6.2" fill="#9cc2e8" text-anchor="middle" dominant-baseline="central">0</text>
<text x="1050.6" y="351.75" font-family="Liberation Mono, monospace" font-weight="bold" font-size="6.2" fill="#9cc2e8" text-anchor="middle" dominant-baseline="central">0</text>
<text x="1062.5" y="351.75" font-family="Liberation Mono, monospace" font-weight="bold" font-size="6.2" fill="#9cc2e8" text-anchor="middle" dominant-baseline="central">0</text>
<text x="1074.3999999999999" y="351.75" font-family="Liberation Mono, monospace" font-weight="bold" font-size="6.2" fill="#9cc2e8" text-anchor="middle" dominant-baseline="central">0</text>
<text x="1086.3" y="351.75" font-family="Liberation Mono, monospace" font-weight="bold" font-size="6.2" fill="#9cc2e8" text-anchor="middle" dominant-baseline="central">0</text>
<text x="907.8" y="358.7" font-family="Liberation Mono, monospace" font-weight="bold" font-size="6.2" fill="#9cc2e8" text-anchor="middle" dominant-baseline="central">0</text>
<text x="919.6999999999999" y="358.7" font-family="Liberation Mono, monospace" font-weight="bold" font-size="6.2" fill="#9cc2e8" text-anchor="middle" dominant-baseline="central">0</text>
<text x="931.5999999999999" y="358.7" font-family="Liberation Mono, monospace" font-weight="bold" font-size="6.2" fill="#9cc2e8" text-anchor="middle" dominant-baseline="central">0</text>
<text x="943.5" y="358.7" font-family="Liberation Mono, monospace" font-weight="bold" font-size="6.2" fill="#9cc2e8" text-anchor="middle" dominant-baseline="central">0</text>
<text x="955.4" y="358.7" font-family="Liberation Mono, monospace" font-weight="bold" font-size="6.2" fill="#9cc2e8" text-anchor="middle" dominant-baseline="central">0</text>
<text x="967.3" y="358.7" font-family="Liberation Mono, monospace" font-weight="bold" font-size="6.2" fill="#9cc2e8" text-anchor="middle" dominant-baseline="central">0</text>
<text x="979.1999999999999" y="358.7" font-family="Liberation Mono, monospace" font-weight="bold" font-size="6.2" fill="#9cc2e8" text-anchor="middle" dominant-baseline="central">0</text>
<text x="991.0999999999999" y="358.7" font-family="Liberation Mono, monospace" font-weight="bold" font-size="6.2" fill="#9cc2e8" text-anchor="middle" dominant-baseline="central">0</text>
<text x="1003.0" y="358.7" font-family="Liberation Mono, monospace" font-weight="bold" font-size="6.2" fill="#9cc2e8" text-anchor="middle" dominant-baseline="central">0</text>
<text x="1014.9" y="358.7" font-family="Liberation Mono, monospace" font-weight="bold" font-size="6.2" fill="#9cc2e8" text-anchor="middle" dominant-baseline="central">0</text>
<text x="1026.8" y="358.7" font-family="Liberation Mono, monospace" font-weight="bold" font-size="6.2" fill="#9cc2e8" text-anchor="middle" dominant-baseline="central">0</text>
<text x="1038.7" y="358.7" font-family="Liberation Mono, monospace" font-weight="bold" font-size="6.2" fill="#9cc2e8" text-anchor="middle" dominant-baseline="central">0</text>
<text x="1050.6" y="358.7" font-family="Liberation Mono, monospace" font-weight="bold" font-size="6.2" fill="#9cc2e8" text-anchor="middle" dominant-baseline="central">0</text>
<text x="1062.5" y="358.7" font-family="Liberation Mono, monospace" font-weight="bold" font-size="6.2" fill="#9cc2e8" text-anchor="middle" dominant-baseline="central">0</text>
<text x="1074.3999999999999" y="358.7" font-family="Liberation Mono, monospace" font-weight="bold" font-size="6.2" fill="#9cc2e8" text-anchor="middle" dominant-baseline="central">0</text>
<text x="1086.3" y="358.7" font-family="Liberation Mono, monospace" font-weight="bold" font-size="6.2" fill="#9cc2e8" text-anchor="middle" dominant-baseline="central">0</text>
<text x="907.8" y="365.65" font-family="Liberation Mono, monospace" font-weight="bold" font-size="6.2" fill="#9cc2e8" text-anchor="middle" dominant-baseline="central">0</text>
<text x="919.6999999999999" y="365.65" font-family="Liberation Mono, monospace" font-weight="bold" font-size="6.2" fill="#9cc2e8" text-anchor="middle" dominant-baseline="central">0</text>
<text x="931.5999999999999" y="365.65" font-family="Liberation Mono, monospace" font-weight="bold" font-size="6.2" fill="#9cc2e8" text-anchor="middle" dominant-baseline="central">0</text>
<text x="943.5" y="365.65" font-family="Liberation Mono, monospace" font-weight="bold" font-size="6.2" fill="#9cc2e8" text-anchor="middle" dominant-baseline="central">0</text>
<text x="955.4" y="365.65" font-family="Liberation Mono, monospace" font-weight="bold" font-size="6.2" fill="#9cc2e8" text-anchor="middle" dominant-baseline="central">0</text>
<text x="967.3" y="365.65" font-family="Liberation Mono, monospace" font-weight="bold" font-size="6.2" fill="#9cc2e8" text-anchor="middle" dominant-baseline="central">0</text>
<text x="979.1999999999999" y="365.65" font-family="Liberation Mono, monospace" font-weight="bold" font-size="6.2" fill="#9cc2e8" text-anchor="middle" dominant-baseline="central">0</text>
<text x="991.0999999999999" y="365.65" font-family="Liberation Mono, monospace" font-weight="bold" font-size="6.2" fill="#9cc2e8" text-anchor="middle" dominant-baseline="central">0</text>
<text x="1003.0" y="365.65" font-family="Liberation Mono, monospace" font-weight="bold" font-size="6.2" fill="#9cc2e8" text-anchor="middle" dominant-baseline="central">0</text>
<text x="1014.9" y="365.65" font-family="Liberation Mono, monospace" font-weight="bold" font-size="6.2" fill="#9cc2e8" text-anchor="middle" dominant-baseline="central">0</text>
<text x="1026.8" y="365.65" font-family="Liberation Mono, monospace" font-weight="bold" font-size="6.2" fill="#9cc2e8" text-anchor="middle" dominant-baseline="central">0</text>
<text x="1038.7" y="365.65" font-family="Liberation Mono, monospace" font-weight="bold" font-size="6.2" fill="#9cc2e8" text-anchor="middle" dominant-baseline="central">0</text>
<text x="1050.6" y="365.65" font-family="Liberation Mono, monospace" font-weight="bold" font-size="6.2" fill="#9cc2e8" text-anchor="middle" dominant-baseline="central">0</text>
<text x="1062.5" y="365.65" font-family="Liberation Mono, monospace" font-weight="bold" font-size="6.2" fill="#9cc2e8" text-anchor="middle" dominant-baseline="central">0</text>
<text x="1074.3999999999999" y="365.65" font-family="Liberation Mono, monospace" font-weight="bold" font-size="6.2" fill="#9cc2e8" text-anchor="middle" dominant-baseline="central">0</text>
<text x="1086.3" y="365.65" font-family="Liberation Mono, monospace" font-weight="bold" font-size="6.2" fill="#9cc2e8" text-anchor="middle" dominant-baseline="central">0</text>
<text x="907.8" y="372.6" font-family="Liberation Mono, monospace" font-weight="bold" font-size="6.2" fill="#9cc2e8" text-anchor="middle" dominant-baseline="central">0</text>
<text x="919.6999999999999" y="372.6" font-family="Liberation Mono, monospace" font-weight="bold" font-size="6.2" fill="#9cc2e8" text-anchor="middle" dominant-baseline="central">0</text>
<text x="931.5999999999999" y="372.6" font-family="Liberation Mono, monospace" font-weight="bold" font-size="6.2" fill="#9cc2e8" text-anchor="middle" dominant-baseline="central">0</text>
<text x="943.5" y="372.6" font-family="Liberation Mono, monospace" font-weight="bold" font-size="6.2" fill="#9cc2e8" text-anchor="middle" dominant-baseline="central">0</text>
<text x="955.4" y="372.6" font-family="Liberation Mono, monospace" font-weight="bold" font-size="6.2" fill="#9cc2e8" text-anchor="middle" dominant-baseline="central">0</text>
<text x="967.3" y="372.6" font-family="Liberation Mono, monospace" font-weight="bold" font-size="6.2" fill="#9cc2e8" text-anchor="middle" dominant-baseline="central">0</text>
<text x="979.1999999999999" y="372.6" font-family="Liberation Mono, monospace" font-weight="bold" font-size="6.2" fill="#9cc2e8" text-anchor="middle" dominant-baseline="central">0</text>
<text x="991.0999999999999" y="372.6" font-family="Liberation Mono, monospace" font-weight="bold" font-size="6.2" fill="#9cc2e8" text-anchor="middle" dominant-baseline="central">0</text>
<text x="1003.0" y="372.6" font-family="Liberation Mono, monospace" font-weight="bold" font-size="6.2" fill="#9cc2e8" text-anchor="middle" dominant-baseline="central">0</text>
<text x="1014.9" y="372.6" font-family="Liberation Mono, monospace" font-weight="bold" font-size="6.2" fill="#9cc2e8" text-anchor="middle" dominant-baseline="central">0</text>
<text x="1026.8" y="372.6" font-family="Liberation Mono, monospace" font-weight="bold" font-size="6.2" fill="#9cc2e8" text-anchor="middle" dominant-baseline="central">0</text>
<text x="1038.7" y="372.6" font-family="Liberation Mono, monospace" font-weight="bold" font-size="6.2" fill="#9cc2e8" text-anchor="middle" dominant-baseline="central">0</text>
<text x="1050.6" y="372.6" font-family="Liberation Mono, monospace" font-weight="bold" font-size="6.2" fill="#9cc2e8" text-anchor="middle" dominant-baseline="central">0</text>
<text x="1062.5" y="372.6" font-family="Liberation Mono, monospace" font-weight="bold" font-size="6.2" fill="#9cc2e8" text-anchor="middle" dominant-baseline="central">0</text>
<text x="1074.3999999999999" y="372.6" font-family="Liberation Mono, monospace" font-weight="bold" font-size="6.2" fill="#9cc2e8" text-anchor="middle" dominant-baseline="central">0</text>
<text x="1086.3" y="372.6" font-family="Liberation Mono, monospace" font-weight="bold" font-size="6.2" fill="#9cc2e8" text-anchor="middle" dominant-baseline="central">0</text>
<text x="907.8" y="379.55" font-family="Liberation Mono, monospace" font-weight="bold" font-size="6.2" fill="#9cc2e8" text-anchor="middle" dominant-baseline="central">0</text>
<text x="919.6999999999999" y="379.55" font-family="Liberation Mono, monospace" font-weight="bold" font-size="6.2" fill="#9cc2e8" text-anchor="middle" dominant-baseline="central">0</text>
<text x="931.5999999999999" y="379.55" font-family="Liberation Mono, monospace" font-weight="bold" font-size="6.2" fill="#9cc2e8" text-anchor="middle" dominant-baseline="central">0</text>
<text x="943.5" y="379.55" font-family="Liberation Mono, monospace" font-weight="bold" font-size="6.2" fill="#9cc2e8" text-anchor="middle" dominant-baseline="central">0</text>
<text x="955.4" y="379.55" font-family="Liberation Mono, monospace" font-weight="bold" font-size="6.2" fill="#9cc2e8" text-anchor="middle" dominant-baseline="central">0</text>
<text x="967.3" y="379.55" font-family="Liberation Mono, monospace" font-weight="bold" font-size="6.2" fill="#9cc2e8" text-anchor="middle" dominant-baseline="central">0</text>
<text x="979.1999999999999" y="379.55" font-family="Liberation Mono, monospace" font-weight="bold" font-size="6.2" fill="#9cc2e8" text-anchor="middle" dominant-baseline="central">0</text>
<text x="991.0999999999999" y="379.55" font-family="Liberation Mono, monospace" font-weight="bold" font-size="6.2" fill="#9cc2e8" text-anchor="middle" dominant-baseline="central">0</text>
<text x="1003.0" y="379.55" font-family="Liberation Mono, monospace" font-weight="bold" font-size="6.2" fill="#9cc2e8" text-anchor="middle" dominant-baseline="central">0</text>
<text x="1014.9" y="379.55" font-family="Liberation Mono, monospace" font-weight="bold" font-size="6.2" fill="#9cc2e8" text-anchor="middle" dominant-baseline="central">0</text>
<text x="1026.8" y="379.55" font-family="Liberation Mono, monospace" font-weight="bold" font-size="6.2" fill="#9cc2e8" text-anchor="middle" dominant-baseline="central">0</text>
<text x="1038.7" y="379.55" font-family="Liberation Mono, monospace" font-weight="bold" font-size="6.2" fill="#9cc2e8" text-anchor="middle" dominant-baseline="central">0</text>
<text x="1050.6" y="379.55" font-family="Liberation Mono, monospace" font-weight="bold" font-size="6.2" fill="#9cc2e8" text-anchor="middle" dominant-baseline="central">0</text>
<text x="1062.5" y="379.55" font-family="Liberation Mono, monospace" font-weight="bold" font-size="6.2" fill="#9cc2e8" text-anchor="middle" dominant-baseline="central">0</text>
<text x="1074.3999999999999" y="379.55" font-family="Liberation Mono, monospace" font-weight="bold" font-size="6.2" fill="#9cc2e8" text-anchor="middle" dominant-baseline="central">0</text>
<text x="1086.3" y="379.55" font-family="Liberation Mono, monospace" font-weight="bold" font-size="6.2" fill="#9cc2e8" text-anchor="middle" dominant-baseline="central">0</text>
<text x="907.8" y="386.5" font-family="Liberation Mono, monospace" font-weight="bold" font-size="6.2" fill="#9cc2e8" text-anchor="middle" dominant-baseline="central">0</text>
<text x="919.6999999999999" y="386.5" font-family="Liberation Mono, monospace" font-weight="bold" font-size="6.2" fill="#9cc2e8" text-anchor="middle" dominant-baseline="central">0</text>
<text x="931.5999999999999" y="386.5" font-family="Liberation Mono, monospace" font-weight="bold" font-size="6.2" fill="#9cc2e8" text-anchor="middle" dominant-baseline="central">0</text>
<text x="943.5" y="386.5" font-family="Liberation Mono, monospace" font-weight="bold" font-size="6.2" fill="#9cc2e8" text-anchor="middle" dominant-baseline="central">0</text>
<text x="955.4" y="386.5" font-family="Liberation Mono, monospace" font-weight="bold" font-size="6.2" fill="#9cc2e8" text-anchor="middle" dominant-baseline="central">0</text>
<text x="967.3" y="386.5" font-family="Liberation Mono, monospace" font-weight="bold" font-size="6.2" fill="#9cc2e8" text-anchor="middle" dominant-baseline="central">0</text>
<text x="979.1999999999999" y="386.5" font-family="Liberation Mono, monospace" font-weight="bold" font-size="6.2" fill="#9cc2e8" text-anchor="middle" dominant-baseline="central">0</text>
<text x="991.0999999999999" y="386.5" font-family="Liberation Mono, monospace" font-weight="bold" font-size="6.2" fill="#9cc2e8" text-anchor="middle" dominant-baseline="central">0</text>
<text x="1003.0" y="386.5" font-family="Liberation Mono, monospace" font-weight="bold" font-size="6.2" fill="#9cc2e8" text-anchor="middle" dominant-baseline="central">0</text>
<text x="1014.9" y="386.5" font-family="Liberation Mono, monospace" font-weight="bold" font-size="6.2" fill="#9cc2e8" text-anchor="middle" dominant-baseline="central">0</text>
<text x="1026.8" y="386.5" font-family="Liberation Mono, monospace" font-weight="bold" font-size="6.2" fill="#9cc2e8" text-anchor="middle" dominant-baseline="central">0</text>
<text x="1038.7" y="386.5" font-family="Liberation Mono, monospace" font-weight="bold" font-size="6.2" fill="#9cc2e8" text-anchor="middle" dominant-baseline="central">0</text>
<text x="1050.6" y="386.5" font-family="Liberation Mono, monospace" font-weight="bold" font-size="6.2" fill="#9cc2e8" text-anchor="middle" dominant-baseline="central">0</text>
<text x="1062.5" y="386.5" font-family="Liberation Mono, monospace" font-weight="bold" font-size="6.2" fill="#9cc2e8" text-anchor="middle" dominant-baseline="central">0</text>
<text x="1074.3999999999999" y="386.5" font-family="Liberation Mono, monospace" font-weight="bold" font-size="6.2" fill="#9cc2e8" text-anchor="middle" dominant-baseline="central">0</text>
<text x="1086.3" y="386.5" font-family="Liberation Mono, monospace" font-weight="bold" font-size="6.2" fill="#9cc2e8" text-anchor="middle" dominant-baseline="central">0</text>
<text x="907.8" y="393.45" font-family="Liberation Mono, monospace" font-weight="bold" font-size="6.2" fill="#9cc2e8" text-anchor="middle" dominant-baseline="central">0</text>
<text x="919.6999999999999" y="393.45" font-family="Liberation Mono, monospace" font-weight="bold" font-size="6.2" fill="#9cc2e8" text-anchor="middle" dominant-baseline="central">0</text>
<text x="931.5999999999999" y="393.45" font-family="Liberation Mono, monospace" font-weight="bold" font-size="6.2" fill="#9cc2e8" text-anchor="middle" dominant-baseline="central">0</text>
<text x="943.5" y="393.45" font-family="Liberation Mono, monospace" font-weight="bold" font-size="6.2" fill="#9cc2e8" text-anchor="middle" dominant-baseline="central">0</text>
<text x="955.4" y="393.45" font-family="Liberation Mono, monospace" font-weight="bold" font-size="6.2" fill="#9cc2e8" text-anchor="middle" dominant-baseline="central">0</text>
<text x="967.3" y="393.45" font-family="Liberation Mono, monospace" font-weight="bold" font-size="6.2" fill="#9cc2e8" text-anchor="middle" dominant-baseline="central">0</text>
<text x="979.1999999999999" y="393.45" font-family="Liberation Mono, monospace" font-weight="bold" font-size="6.2" fill="#9cc2e8" text-anchor="middle" dominant-baseline="central">0</text>
<text x="991.0999999999999" y="393.45" font-family="Liberation Mono, monospace" font-weight="bold" font-size="6.2" fill="#9cc2e8" text-anchor="middle" dominant-baseline="central">0</text>
<text x="1003.0" y="393.45" font-family="Liberation Mono, monospace" font-weight="bold" font-size="6.2" fill="#9cc2e8" text-anchor="middle" dominant-baseline="central">0</text>
<text x="1014.9" y="393.45" font-family="Liberation Mono, monospace" font-weight="bold" font-size="6.2" fill="#9cc2e8" text-anchor="middle" dominant-baseline="central">0</text>
<text x="1026.8" y="393.45" font-family="Liberation Mono, monospace" font-weight="bold" font-size="6.2" fill="#9cc2e8" text-anchor="middle" dominant-baseline="central">0</text>
<text x="1038.7" y="393.45" font-family="Liberation Mono, monospace" font-weight="bold" font-size="6.2" fill="#9cc2e8" text-anchor="middle" dominant-baseline="central">0</text>
<text x="1050.6" y="393.45" font-family="Liberation Mono, monospace" font-weight="bold" font-size="6.2" fill="#9cc2e8" text-anchor="middle" dominant-baseline="central">0</text>
<text x="1062.5" y="393.45" font-family="Liberation Mono, monospace" font-weight="bold" font-size="6.2" fill="#9cc2e8" text-anchor="middle" dominant-baseline="central">0</text>
<text x="1074.3999999999999" y="393.45" font-family="Liberation Mono, monospace" font-weight="bold" font-size="6.2" fill="#9cc2e8" text-anchor="middle" dominant-baseline="central">0</text>
<text x="1086.3" y="393.45" font-family="Liberation Mono, monospace" font-weight="bold" font-size="6.2" fill="#9cc2e8" text-anchor="middle" dominant-baseline="central">0</text>
<text x="907.8" y="400.4" font-family="Liberation Mono, monospace" font-weight="bold" font-size="6.2" fill="#9cc2e8" text-anchor="middle" dominant-baseline="central">0</text>
<text x="919.6999999999999" y="400.4" font-family="Liberation Mono, monospace" font-weight="bold" font-size="6.2" fill="#9cc2e8" text-anchor="middle" dominant-baseline="central">0</text>
<text x="931.5999999999999" y="400.4" font-family="Liberation Mono, monospace" font-weight="bold" font-size="6.2" fill="#9cc2e8" text-anchor="middle" dominant-baseline="central">0</text>
<text x="943.5" y="400.4" font-family="Liberation Mono, monospace" font-weight="bold" font-size="6.2" fill="#9cc2e8" text-anchor="middle" dominant-baseline="central">0</text>
<text x="955.4" y="400.4" font-family="Liberation Mono, monospace" font-weight="bold" font-size="6.2" fill="#9cc2e8" text-anchor="middle" dominant-baseline="central">0</text>
<text x="967.3" y="400.4" font-family="Liberation Mono, monospace" font-weight="bold" font-size="6.2" fill="#9cc2e8" text-anchor="middle" dominant-baseline="central">0</text>
<text x="979.1999999999999" y="400.4" font-family="Liberation Mono, monospace" font-weight="bold" font-size="6.2" fill="#9cc2e8" text-anchor="middle" dominant-baseline="central">0</text>
<text x="991.0999999999999" y="400.4" font-family="Liberation Mono, monospace" font-weight="bold" font-size="6.2" fill="#9cc2e8" text-anchor="middle" dominant-baseline="central">0</text>
<text x="1003.0" y="400.4" font-family="Liberation Mono, monospace" font-weight="bold" font-size="6.2" fill="#9cc2e8" text-anchor="middle" dominant-baseline="central">0</text>
<text x="1014.9" y="400.4" font-family="Liberation Mono, monospace" font-weight="bold" font-size="6.2" fill="#9cc2e8" text-anchor="middle" dominant-baseline="central">0</text>
<text x="1026.8" y="400.4" font-family="Liberation Mono, monospace" font-weight="bold" font-size="6.2" fill="#9cc2e8" text-anchor="middle" dominant-baseline="central">0</text>
<text x="1038.7" y="400.4" font-family="Liberation Mono, monospace" font-weight="bold" font-size="6.2" fill="#9cc2e8" text-anchor="middle" dominant-baseline="central">0</text>
<text x="1050.6" y="400.4" font-family="Liberation Mono, monospace" font-weight="bold" font-size="6.2" fill="#9cc2e8" text-anchor="middle" dominant-baseline="central">0</text>
<text x="1062.5" y="400.4" font-family="Liberation Mono, monospace" font-weight="bold" font-size="6.2" fill="#9cc2e8" text-anchor="middle" dominant-baseline="central">0</text>
<text x="1074.3999999999999" y="400.4" font-family="Liberation Mono, monospace" font-weight="bold" font-size="6.2" fill="#9cc2e8" text-anchor="middle" dominant-baseline="central">0</text>
<text x="1086.3" y="400.4" font-family="Liberation Mono, monospace" font-weight="bold" font-size="6.2" fill="#9cc2e8" text-anchor="middle" dominant-baseline="central">0</text>
<text x="907.8" y="407.35" font-family="Liberation Mono, monospace" font-weight="bold" font-size="6.2" fill="#9cc2e8" text-anchor="middle" dominant-baseline="central">0</text>
<text x="919.6999999999999" y="407.35" font-family="Liberation Mono, monospace" font-weight="bold" font-size="6.2" fill="#9cc2e8" text-anchor="middle" dominant-baseline="central">0</text>
<text x="931.5999999999999" y="407.35" font-family="Liberation Mono, monospace" font-weight="bold" font-size="6.2" fill="#9cc2e8" text-anchor="middle" dominant-baseline="central">0</text>
<text x="943.5" y="407.35" font-family="Liberation Mono, monospace" font-weight="bold" font-size="6.2" fill="#9cc2e8" text-anchor="middle" dominant-baseline="central">0</text>
<text x="955.4" y="407.35" font-family="Liberation Mono, monospace" font-weight="bold" font-size="6.2" fill="#9cc2e8" text-anchor="middle" dominant-baseline="central">0</text>
<text x="967.3" y="407.35" font-family="Liberation Mono, monospace" font-weight="bold" font-size="6.2" fill="#9cc2e8" text-anchor="middle" dominant-baseline="central">0</text>
<text x="979.1999999999999" y="407.35" font-family="Liberation Mono, monospace" font-weight="bold" font-size="6.2" fill="#9cc2e8" text-anchor="middle" dominant-baseline="central">0</text>
<text x="991.0999999999999" y="407.35" font-family="Liberation Mono, monospace" font-weight="bold" font-size="6.2" fill="#9cc2e8" text-anchor="middle" dominant-baseline="central">0</text>
<text x="1003.0" y="407.35" font-family="Liberation Mono, monospace" font-weight="bold" font-size="6.2" fill="#9cc2e8" text-anchor="middle" dominant-baseline="central">0</text>
<text x="1014.9" y="407.35" font-family="Liberation Mono, monospace" font-weight="bold" font-size="6.2" fill="#9cc2e8" text-anchor="middle" dominant-baseline="central">0</text>
<text x="1026.8" y="407.35" font-family="Liberation Mono, monospace" font-weight="bold" font-size="6.2" fill="#9cc2e8" text-anchor="middle" dominant-baseline="central">0</text>
<text x="1038.7" y="407.35" font-family="Liberation Mono, monospace" font-weight="bold" font-size="6.2" fill="#9cc2e8" text-anchor="middle" dominant-baseline="central">0</text>
<text x="1050.6" y="407.35" font-family="Liberation Mono, monospace" font-weight="bold" font-size="6.2" fill="#9cc2e8" text-anchor="middle" dominant-baseline="central">0</text>
<text x="1062.5" y="407.35" font-family="Liberation Mono, monospace" font-weight="bold" font-size="6.2" fill="#9cc2e8" text-anchor="middle" dominant-baseline="central">0</text>
<text x="1074.3999999999999" y="407.35" font-family="Liberation Mono, monospace" font-weight="bold" font-size="6.2" fill="#9cc2e8" text-anchor="middle" dominant-baseline="central">0</text>
<text x="1086.3" y="407.35" font-family="Liberation Mono, monospace" font-weight="bold" font-size="6.2" fill="#9cc2e8" text-anchor="middle" dominant-baseline="central">0</text>
<text x="907.8" y="414.3" font-family="Liberation Mono, monospace" font-weight="bold" font-size="6.2" fill="#9cc2e8" text-anchor="middle" dominant-baseline="central">0</text>
<text x="919.6999999999999" y="414.3" font-family="Liberation Mono, monospace" font-weight="bold" font-size="6.2" fill="#9cc2e8" text-anchor="middle" dominant-baseline="central">0</text>
<text x="931.5999999999999" y="414.3" font-family="Liberation Mono, monospace" font-weight="bold" font-size="6.2" fill="#9cc2e8" text-anchor="middle" dominant-baseline="central">0</text>
<text x="943.5" y="414.3" font-family="Liberation Mono, monospace" font-weight="bold" font-size="6.2" fill="#9cc2e8" text-anchor="middle" dominant-baseline="central">0</text>
<text x="955.4" y="414.3" font-family="Liberation Mono, monospace" font-weight="bold" font-size="6.2" fill="#9cc2e8" text-anchor="middle" dominant-baseline="central">0</text>
<text x="967.3" y="414.3" font-family="Liberation Mono, monospace" font-weight="bold" font-size="6.2" fill="#9cc2e8" text-anchor="middle" dominant-baseline="central">0</text>
<text x="979.1999999999999" y="414.3" font-family="Liberation Mono, monospace" font-weight="bold" font-size="6.2" fill="#9cc2e8" text-anchor="middle" dominant-baseline="central">0</text>
<text x="991.0999999999999" y="414.3" font-family="Liberation Mono, monospace" font-weight="bold" font-size="6.2" fill="#9cc2e8" text-anchor="middle" dominant-baseline="central">0</text>
<text x="1003.0" y="414.3" font-family="Liberation Mono, monospace" font-weight="bold" font-size="6.2" fill="#9cc2e8" text-anchor="middle" dominant-baseline="central">0</text>
<text x="1014.9" y="414.3" font-family="Liberation Mono, monospace" font-weight="bold" font-size="6.2" fill="#9cc2e8" text-anchor="middle" dominant-baseline="central">0</text>
<text x="1026.8" y="414.3" font-family="Liberation Mono, monospace" font-weight="bold" font-size="6.2" fill="#9cc2e8" text-anchor="middle" dominant-baseline="central">0</text>
<text x="1038.7" y="414.3" font-family="Liberation Mono, monospace" font-weight="bold" font-size="6.2" fill="#9cc2e8" text-anchor="middle" dominant-baseline="central">0</text>
<text x="1050.6" y="414.3" font-family="Liberation Mono, monospace" font-weight="bold" font-size="6.2" fill="#9cc2e8" text-anchor="middle" dominant-baseline="central">0</text>
<text x="1062.5" y="414.3" font-family="Liberation Mono, monospace" font-weight="bold" font-size="6.2" fill="#9cc2e8" text-anchor="middle" dominant-baseline="central">0</text>
<text x="1074.3999999999999" y="414.3" font-family="Liberation Mono, monospace" font-weight="bold" font-size="6.2" fill="#9cc2e8" text-anchor="middle" dominant-baseline="central">0</text>
<text x="1086.3" y="414.3" font-family="Liberation Mono, monospace" font-weight="bold" font-size="6.2" fill="#9cc2e8" text-anchor="middle" dominant-baseline="central">0</text>
<text x="907.8" y="421.25" font-family="Liberation Mono, monospace" font-weight="bold" font-size="6.2" fill="#9cc2e8" text-anchor="middle" dominant-baseline="central">0</text>
<text x="919.6999999999999" y="421.25" font-family="Liberation Mono, monospace" font-weight="bold" font-size="6.2" fill="#9cc2e8" text-anchor="middle" dominant-baseline="central">0</text>
<text x="931.5999999999999" y="421.25" font-family="Liberation Mono, monospace" font-weight="bold" font-size="6.2" fill="#9cc2e8" text-anchor="middle" dominant-baseline="central">0</text>
<text x="943.5" y="421.25" font-family="Liberation Mono, monospace" font-weight="bold" font-size="6.2" fill="#9cc2e8" text-anchor="middle" dominant-baseline="central">0</text>
<text x="955.4" y="421.25" font-family="Liberation Mono, monospace" font-weight="bold" font-size="6.2" fill="#9cc2e8" text-anchor="middle" dominant-baseline="central">0</text>
<text x="967.3" y="421.25" font-family="Liberation Mono, monospace" font-weight="bold" font-size="6.2" fill="#9cc2e8" text-anchor="middle" dominant-baseline="central">0</text>
<text x="979.1999999999999" y="421.25" font-family="Liberation Mono, monospace" font-weight="bold" font-size="6.2" fill="#9cc2e8" text-anchor="middle" dominant-baseline="central">0</text>
<text x="991.0999999999999" y="421.25" font-family="Liberation Mono, monospace" font-weight="bold" font-size="6.2" fill="#9cc2e8" text-anchor="middle" dominant-baseline="central">0</text>
<text x="1003.0" y="421.25" font-family="Liberation Mono, monospace" font-weight="bold" font-size="6.2" fill="#9cc2e8" text-anchor="middle" dominant-baseline="central">0</text>
<text x="1014.9" y="421.25" font-family="Liberation Mono, monospace" font-weight="bold" font-size="6.2" fill="#9cc2e8" text-anchor="middle" dominant-baseline="central">0</text>
<text x="1026.8" y="421.25" font-family="Liberation Mono, monospace" font-weight="bold" font-size="6.2" fill="#9cc2e8" text-anchor="middle" dominant-baseline="central">0</text>
<text x="1038.7" y="421.25" font-family="Liberation Mono, monospace" font-weight="bold" font-size="6.2" fill="#9cc2e8" text-anchor="middle" dominant-baseline="central">0</text>
<text x="1050.6" y="421.25" font-family="Liberation Mono, monospace" font-weight="bold" font-size="6.2" fill="#9cc2e8" text-anchor="middle" dominant-baseline="central">0</text>
<text x="1062.5" y="421.25" font-family="Liberation Mono, monospace" font-weight="bold" font-size="6.2" fill="#9cc2e8" text-anchor="middle" dominant-baseline="central">0</text>
<text x="1074.3999999999999" y="421.25" font-family="Liberation Mono, monospace" font-weight="bold" font-size="6.2" fill="#9cc2e8" text-anchor="middle" dominant-baseline="central">0</text>
<text x="1086.3" y="421.25" font-family="Liberation Mono, monospace" font-weight="bold" font-size="6.2" fill="#9cc2e8" text-anchor="middle" dominant-baseline="central">0</text>
<rect x="899" y="343" width="6" height="6" fill="#e3a04a"/>
<rect x="899" y="351" width="6" height="6" fill="#e3a04a"/>
<rect x="899" y="359" width="6" height="6" fill="#e3a04a"/>
<circle cx="1095" cy="317" r="2.6" fill="#7a7a30"/>
<circle cx="1095" cy="323.75" r="2.6" fill="#e04050"/>
<circle cx="1095" cy="331" r="2.6" fill="#e04050"/>
<circle cx="1095" cy="338.6" r="2.6" fill="#e04050"/>
<rect x="928" y="694" width="195" height="40" rx="3" fill="#1b4f8c"/>
<rect x="930.5" y="696.5" width="190" height="40" fill="#215ea0"/>
<text x="1026" y="699.5" font-family="Liberation Mono, monospace" font-weight="bold" font-size="8.5" fill="#f0f0f0" text-anchor="middle" dominant-baseline="central">RAM</text>
<rect x="932.5" y="703" width="11" height="6" fill="#e3a04a"/>
<text x="949.6999999999999" y="706" font-family="Liberation Mono, monospace" font-weight="bold" font-size="6.2" fill="#9cc2e8" text-anchor="middle" dominant-baseline="central">0</text>
<text x="961.5999999999999" y="706" font-family="Liberation Mono, monospace" font-weight="bold" font-size="6.2" fill="#9cc2e8" text-anchor="middle" dominant-baseline="central">0</text>
<text x="973.5" y="706" font-family="Liberation Mono, monospace" font-weight="bold" font-size="6.2" fill="#9cc2e8" text-anchor="middle" dominant-baseline="central">0</text>
<text x="985.4" y="706" font-family="Liberation Mono, monospace" font-weight="bold" font-size="6.2" fill="#9cc2e8" text-anchor="middle" dominant-baseline="central">0</text>
<text x="997.3" y="706" font-family="Liberation Mono, monospace" font-weight="bold" font-size="6.2" fill="#9cc2e8" text-anchor="middle" dominant-baseline="central">0</text>
<text x="1009.1999999999999" y="706" font-family="Liberation Mono, monospace" font-weight="bold" font-size="6.2" fill="#9cc2e8" text-anchor="middle" dominant-baseline="central">0</text>
<text x="1021.0999999999999" y="706" font-family="Liberation Mono, monospace" font-weight="bold" font-size="6.2" fill="#9cc2e8" text-anchor="middle" dominant-baseline="central">0</text>
<text x="1033.0" y="706" font-family="Liberation Mono, monospace" font-weight="bold" font-size="6.2" fill="#9cc2e8" text-anchor="middle" dominant-baseline="central">0</text>
<text x="1044.8999999999999" y="706" font-family="Liberation Mono, monospace" font-weight="bold" font-size="6.2" fill="#9cc2e8" text-anchor="middle" dominant-baseline="central">0</text>
<text x="1056.8" y="706" font-family="Liberation Mono, monospace" font-weight="bold" font-size="6.2" fill="#9cc2e8" text-anchor="middle" dominant-baseline="central">0</text>
<text x="1068.7" y="706" font-family="Liberation Mono, monospace" font-weight="bold" font-size="6.2" fill="#9cc2e8" text-anchor="middle" dominant-baseline="central">0</text>
<text x="1080.6" y="706" font-family="Liberation Mono, monospace" font-weight="bold" font-size="6.2" fill="#9cc2e8" text-anchor="middle" dominant-baseline="central">0</text>
<text x="1092.5" y="706" font-family="Liberation Mono, monospace" font-weight="bold" font-size="6.2" fill="#9cc2e8" text-anchor="middle" dominant-baseline="central">0</text>
<text x="1104.3999999999999" y="706" font-family="Liberation Mono, monospace" font-weight="bold" font-size="6.2" fill="#9cc2e8" text-anchor="middle" dominant-baseline="central">0</text>
<text x="1116.3" y="706" font-family="Liberation Mono, monospace" font-weight="bold" font-size="6.2" fill="#9cc2e8" text-anchor="middle" dominant-baseline="central">0</text>
<text x="937.8" y="713" font-family="Liberation Mono, monospace" font-weight="bold" font-size="6.2" fill="#9cc2e8" text-anchor="middle" dominant-baseline="central">0</text>
<text x="949.6999999999999" y="713" font-family="Liberation Mono, monospace" font-weight="bold" font-size="6.2" fill="#9cc2e8" text-anchor="middle" dominant-baseline="central">0</text>
<text x="961.5999999999999" y="713" font-family="Liberation Mono, monospace" font-weight="bold" font-size="6.2" fill="#9cc2e8" text-anchor="middle" dominant-baseline="central">0</text>
<text x="973.5" y="713" font-family="Liberation Mono, monospace" font-weight="bold" font-size="6.2" fill="#9cc2e8" text-anchor="middle" dominant-baseline="central">0</text>
<text x="985.4" y="713" font-family="Liberation Mono, monospace" font-weight="bold" font-size="6.2" fill="#9cc2e8" text-anchor="middle" dominant-baseline="central">0</text>
<text x="997.3" y="713" font-family="Liberation Mono, monospace" font-weight="bold" font-size="6.2" fill="#9cc2e8" text-anchor="middle" dominant-baseline="central">0</text>
<text x="1009.1999999999999" y="713" font-family="Liberation Mono, monospace" font-weight="bold" font-size="6.2" fill="#9cc2e8" text-anchor="middle" dominant-baseline="central">0</text>
<text x="1021.0999999999999" y="713" font-family="Liberation Mono, monospace" font-weight="bold" font-size="6.2" fill="#9cc2e8" text-anchor="middle" dominant-baseline="central">0</text>
<text x="1033.0" y="713" font-family="Liberation Mono, monospace" font-weight="bold" font-size="6.2" fill="#9cc2e8" text-anchor="middle" dominant-baseline="central">0</text>
<text x="1044.8999999999999" y="713" font-family="Liberation Mono, monospace" font-weight="bold" font-size="6.2" fill="#9cc2e8" text-anchor="middle" dominant-baseline="central">0</text>
<text x="1056.8" y="713" font-family="Liberation Mono, monospace" font-weight="bold" font-size="6.2" fill="#9cc2e8" text-anchor="middle" dominant-baseline="central">0</text>
<text x="1068.7" y="713" font-family="Liberation Mono, monospace" font-weight="bold" font-size="6.2" fill="#9cc2e8" text-anchor="middle" dominant-baseline="central">0</text>
<text x="1080.6" y="713" font-family="Liberation Mono, monospace" font-weight="bold" font-size="6.2" fill="#9cc2e8" text-anchor="middle" dominant-baseline="central">0</text>
<text x="1092.5" y="713" font-family="Liberation Mono, monospace" font-weight="bold" font-size="6.2" fill="#9cc2e8" text-anchor="middle" dominant-baseline="central">0</text>
<text x="1104.3999999999999" y="713" font-family="Liberation Mono, monospace" font-weight="bold" font-size="6.2" fill="#9cc2e8" text-anchor="middle" dominant-baseline="central">0</text>
<text x="1116.3" y="713" font-family="Liberation Mono, monospace" font-weight="bold" font-size="6.2" fill="#9cc2e8" text-anchor="middle" dominant-baseline="central">0</text>
<text x="937.8" y="720" font-family="Liberation Mono, monospace" font-weight="bold" font-size="6.2" fill="#9cc2e8" text-anchor="middle" dominant-baseline="central">0</text>
<text x="949.6999999999999" y="720" font-family="Liberation Mono, monospace" font-weight="bold" font-size="6.2" fill="#9cc2e8" text-anchor="middle" dominant-baseline="central">0</text>
<text x="961.5999999999999" y="720" font-family="Liberation Mono, monospace" font-weight="bold" font-size="6.2" fill="#9cc2e8" text-anchor="middle" dominant-baseline="central">0</text>
<text x="973.5" y="720" font-family="Liberation Mono, monospace" font-weight="bold" font-size="6.2" fill="#9cc2e8" text-anchor="middle" dominant-baseline="central">0</text>
<text x="985.4" y="720" font-family="Liberation Mono, monospace" font-weight="bold" font-size="6.2" fill="#9cc2e8" text-anchor="middle" dominant-baseline="central">0</text>
<text x="997.3" y="720" font-family="Liberation Mono, monospace" font-weight="bold" font-size="6.2" fill="#9cc2e8" text-anchor="middle" dominant-baseline="central">0</text>
<text x="1009.1999999999999" y="720" font-family="Liberation Mono, monospace" font-weight="bold" font-size="6.2" fill="#9cc2e8" text-anchor="middle" dominant-baseline="central">0</text>
<text x="1021.0999999999999" y="720" font-family="Liberation Mono, monospace" font-weight="bold" font-size="6.2" fill="#9cc2e8" text-anchor="middle" dominant-baseline="central">0</text>
<text x="1033.0" y="720" font-family="Liberation Mono, monospace" font-weight="bold" font-size="6.2" fill="#9cc2e8" text-anchor="middle" dominant-baseline="central">0</text>
<text x="1044.8999999999999" y="720" font-family="Liberation Mono, monospace" font-weight="bold" font-size="6.2" fill="#9cc2e8" text-anchor="middle" dominant-baseline="central">0</text>
<text x="1056.8" y="720" font-family="Liberation Mono, monospace" font-weight="bold" font-size="6.2" fill="#9cc2e8" text-anchor="middle" dominant-baseline="central">0</text>
<text x="1068.7" y="720" font-family="Liberation Mono, monospace" font-weight="bold" font-size="6.2" fill="#9cc2e8" text-anchor="middle" dominant-baseline="central">0</text>
<text x="1080.6" y="720" font-family="Liberation Mono, monospace" font-weight="bold" font-size="6.2" fill="#9cc2e8" text-anchor="middle" dominant-baseline="central">0</text>
<text x="1092.5" y="720" font-family="Liberation Mono, monospace" font-weight="bold" font-size="6.2" fill="#9cc2e8" text-anchor="middle" dominant-baseline="central">0</text>
<text x="1104.3999999999999" y="720" font-family="Liberation Mono, monospace" font-weight="bold" font-size="6.2" fill="#9cc2e8" text-anchor="middle" dominant-baseline="central">0</text>
<text x="1116.3" y="720" font-family="Liberation Mono, monospace" font-weight="bold" font-size="6.2" fill="#9cc2e8" text-anchor="middle" dominant-baseline="central">0</text>
<circle cx="1125" cy="704" r="2.6" fill="#e04050"/>
<circle cx="1125" cy="712" r="2.6" fill="#e04050"/>
<circle cx="1125" cy="720" r="2.6" fill="#e04050"/>
<rect x="212.5" y="441" width="248.8" height="150.5" fill="#1f4f8a"/>
<rect x="214.7" y="442.8" width="244" height="147.2" fill="#0a0a0c"/>
<text x="215.3" y="446.6" font-family="Liberation Mono, monospace" font-weight="bold" font-size="5.9" fill="#ffffff" dominant-baseline="central" textLength="12.2" lengthAdjust="spacingAndGlyphs">0000</text>
<text x="230.54000000000002" y="446.6" font-family="Liberation Mono, monospace" font-weight="bold" font-size="5.9" fill="#ffffff" dominant-baseline="central" textLength="12.2" lengthAdjust="spacingAndGlyphs">0001</text>
<text x="245.78" y="446.6" font-family="Liberation Mono, monospace" font-weight="bold" font-size="5.9" fill="#ffffff" dominant-baseline="central" textLength="12.2" lengthAdjust="spacingAndGlyphs">0001</text>
<text x="261.02" y="446.6" font-family="Liberation Mono, monospace" font-weight="bold" font-size="5.9" fill="#ffffff" dominant-baseline="central" textLength="12.2" lengthAdjust="spacingAndGlyphs">0002</text>
<text x="276.26" y="446.6" font-family="Liberation Mono, monospace" font-weight="bold" font-size="5.9" fill="#ffffff" dominant-baseline="central" textLength="12.2" lengthAdjust="spacingAndGlyphs">0003</text>
<text x="291.5" y="446.6" font-family="Liberation Mono, monospace" font-weight="bold" font-size="5.9" fill="#ffffff" dominant-baseline="central" textLength="12.2" lengthAdjust="spacingAndGlyphs">0005</text>
<text x="306.74" y="446.6" font-family="Liberation Mono, monospace" font-weight="bold" font-size="5.9" fill="#ffffff" dominant-baseline="central" textLength="12.2" lengthAdjust="spacingAndGlyphs">0008</text>
<text x="321.98" y="446.6" font-family="Liberation Mono, monospace" font-weight="bold" font-size="5.9" fill="#ffffff" dominant-baseline="central" textLength="12.2" lengthAdjust="spacingAndGlyphs">0000</text>
<text x="337.22" y="446.6" font-family="Liberation Mono, monospace" font-weight="bold" font-size="5.9" fill="#ffffff" dominant-baseline="central" textLength="12.2" lengthAdjust="spacingAndGlyphs">0015</text>
<text x="352.46000000000004" y="446.6" font-family="Liberation Mono, monospace" font-weight="bold" font-size="5.9" fill="#ffffff" dominant-baseline="central" textLength="12.2" lengthAdjust="spacingAndGlyphs">0022</text>
<text x="367.70000000000005" y="446.6" font-family="Liberation Mono, monospace" font-weight="bold" font-size="5.9" fill="#ffffff" dominant-baseline="central" textLength="12.2" lengthAdjust="spacingAndGlyphs">0037</text>
<text x="382.94000000000005" y="446.6" font-family="Liberation Mono, monospace" font-weight="bold" font-size="5.9" fill="#ffffff" dominant-baseline="central" textLength="12.2" lengthAdjust="spacingAndGlyphs">0059</text>
<text x="398.18" y="446.6" font-family="Liberation Mono, monospace" font-weight="bold" font-size="5.9" fill="#ffffff" dominant-baseline="central" textLength="12.2" lengthAdjust="spacingAndGlyphs">0090</text>
<text x="413.42" y="446.6" font-family="Liberation Mono, monospace" font-weight="bold" font-size="5.9" fill="#ffffff" dominant-baseline="central" textLength="12.2" lengthAdjust="spacingAndGlyphs">00E9</text>
<text x="428.66" y="446.6" font-family="Liberation Mono, monospace" font-weight="bold" font-size="5.9" fill="#ffffff" dominant-baseline="central" textLength="12.2" lengthAdjust="spacingAndGlyphs">0179</text>
<text x="443.9" y="446.6" font-family="Liberation Mono, monospace" font-weight="bold" font-size="5.9" fill="#ffffff" dominant-baseline="central" textLength="12.2" lengthAdjust="spacingAndGlyphs">0262</text>
<text x="215.3" y="452.665" font-family="Liberation Mono, monospace" font-weight="bold" font-size="5.9" fill="#ffffff" dominant-baseline="central" textLength="12.2" lengthAdjust="spacingAndGlyphs">0308</text>
<text x="230.54000000000002" y="452.665" font-family="Liberation Mono, monospace" font-weight="bold" font-size="5.9" fill="#ffffff" dominant-baseline="central" textLength="12.2" lengthAdjust="spacingAndGlyphs">0638</text>
<text x="245.78" y="452.665" font-family="Liberation Mono, monospace" font-weight="bold" font-size="5.9" fill="#ffffff" dominant-baseline="central" textLength="12.2" lengthAdjust="spacingAndGlyphs">0A10</text>
<text x="261.02" y="452.665" font-family="Liberation Mono, monospace" font-weight="bold" font-size="5.9" fill="#ffffff" dominant-baseline="central" textLength="12.2" lengthAdjust="spacingAndGlyphs">1055</text>
<text x="276.26" y="452.665" font-family="Liberation Mono, monospace" font-weight="bold" font-size="5.9" fill="#ffffff" dominant-baseline="central" textLength="12.2" lengthAdjust="spacingAndGlyphs">1A60</text>
<text x="291.5" y="452.665" font-family="Liberation Mono, monospace" font-weight="bold" font-size="5.9" fill="#ffffff" dominant-baseline="central" textLength="12.2" lengthAdjust="spacingAndGlyphs">1AC2</text>
<text x="306.74" y="452.665" font-family="Liberation Mono, monospace" font-weight="bold" font-size="5.9" fill="#ffffff" dominant-baseline="central" textLength="12.2" lengthAdjust="spacingAndGlyphs">453F</text>
<text x="321.98" y="452.665" font-family="Liberation Mono, monospace" font-weight="bold" font-size="5.9" fill="#ffffff" dominant-baseline="central" textLength="12.2" lengthAdjust="spacingAndGlyphs">6FF1</text>
<text x="337.22" y="452.665" font-family="Liberation Mono, monospace" font-weight="bold" font-size="5.9" fill="#ffffff" dominant-baseline="central" textLength="12.2" lengthAdjust="spacingAndGlyphs">B530</text>
<text x="352.46000000000004" y="452.665" font-family="Liberation Mono, monospace" font-weight="bold" font-size="5.9" fill="#ffffff" dominant-baseline="central" textLength="12.2" lengthAdjust="spacingAndGlyphs">2511</text>
<text x="367.70000000000005" y="452.665" font-family="Liberation Mono, monospace" font-weight="bold" font-size="5.9" fill="#ffffff" dominant-baseline="central" textLength="12.2" lengthAdjust="spacingAndGlyphs">DA11</text>
<text x="382.94000000000005" y="452.665" font-family="Liberation Mono, monospace" font-weight="bold" font-size="5.9" fill="#ffffff" dominant-baseline="central" textLength="12.2" lengthAdjust="spacingAndGlyphs">FF42</text>
<text x="398.18" y="452.665" font-family="Liberation Mono, monospace" font-weight="bold" font-size="5.9" fill="#ffffff" dominant-baseline="central" textLength="12.2" lengthAdjust="spacingAndGlyphs">D973</text>
<text x="413.42" y="452.665" font-family="Liberation Mono, monospace" font-weight="bold" font-size="5.9" fill="#ffffff" dominant-baseline="central" textLength="12.2" lengthAdjust="spacingAndGlyphs">D885</text>
<text x="428.66" y="452.665" font-family="Liberation Mono, monospace" font-weight="bold" font-size="5.9" fill="#ffffff" dominant-baseline="central" textLength="12.2" lengthAdjust="spacingAndGlyphs">B228</text>
<text x="443.9" y="452.665" font-family="Liberation Mono, monospace" font-weight="bold" font-size="5.9" fill="#ffffff" dominant-baseline="central" textLength="12.2" lengthAdjust="spacingAndGlyphs">8A80</text>
<text x="215.3" y="458.73" font-family="Liberation Mono, monospace" font-weight="bold" font-size="5.9" fill="#ffffff" dominant-baseline="central" textLength="12.2" lengthAdjust="spacingAndGlyphs">3D05</text>
<text x="230.54000000000002" y="458.73" font-family="Liberation Mono, monospace" font-weight="bold" font-size="5.9" fill="#ffffff" dominant-baseline="central" textLength="12.2" lengthAdjust="spacingAndGlyphs">C7E2</text>
<text x="245.78" y="458.73" font-family="Liberation Mono, monospace" font-weight="bold" font-size="5.9" fill="#ffffff" dominant-baseline="central" textLength="12.2" lengthAdjust="spacingAndGlyphs">04E7</text>
<text x="261.02" y="458.73" font-family="Liberation Mono, monospace" font-weight="bold" font-size="5.9" fill="#ffffff" dominant-baseline="central" textLength="12.2" lengthAdjust="spacingAndGlyphs">CCC9</text>
<text x="276.26" y="458.73" font-family="Liberation Mono, monospace" font-weight="bold" font-size="5.9" fill="#ffffff" dominant-baseline="central" textLength="12.2" lengthAdjust="spacingAndGlyphs">D1B0</text>
<text x="291.5" y="458.73" font-family="Liberation Mono, monospace" font-weight="bold" font-size="5.9" fill="#ffffff" dominant-baseline="central" textLength="12.2" lengthAdjust="spacingAndGlyphs">9E79</text>
<text x="306.74" y="458.73" font-family="Liberation Mono, monospace" font-weight="bold" font-size="5.9" fill="#ffffff" dominant-baseline="central" textLength="12.2" lengthAdjust="spacingAndGlyphs">7829</text>
<text x="321.98" y="458.73" font-family="Liberation Mono, monospace" font-weight="bold" font-size="5.9" fill="#ffffff" dominant-baseline="central" textLength="12.2" lengthAdjust="spacingAndGlyphs">0EA3</text>
<text x="337.22" y="458.73" font-family="Liberation Mono, monospace" font-weight="bold" font-size="5.9" fill="#ffffff" dominant-baseline="central" textLength="12.2" lengthAdjust="spacingAndGlyphs">7EC0</text>
<text x="352.46000000000004" y="458.73" font-family="Liberation Mono, monospace" font-weight="bold" font-size="5.9" fill="#ffffff" dominant-baseline="central" textLength="12.2" lengthAdjust="spacingAndGlyphs">8D6D</text>
<text x="367.70000000000005" y="458.73" font-family="Liberation Mono, monospace" font-weight="bold" font-size="5.9" fill="#ffffff" dominant-baseline="central" textLength="12.2" lengthAdjust="spacingAndGlyphs">8C30</text>
<text x="382.94000000000005" y="458.73" font-family="Liberation Mono, monospace" font-weight="bold" font-size="5.9" fill="#ffffff" dominant-baseline="central" textLength="12.2" lengthAdjust="spacingAndGlyphs">9985</text>
<text x="398.18" y="458.73" font-family="Liberation Mono, monospace" font-weight="bold" font-size="5.9" fill="#ffffff" dominant-baseline="central" textLength="12.2" lengthAdjust="spacingAndGlyphs">A5D0</text>
<text x="413.42" y="458.73" font-family="Liberation Mono, monospace" font-weight="bold" font-size="5.9" fill="#ffffff" dominant-baseline="central" textLength="12.2" lengthAdjust="spacingAndGlyphs">3F82</text>
<text x="428.66" y="458.73" font-family="Liberation Mono, monospace" font-weight="bold" font-size="5.9" fill="#ffffff" dominant-baseline="central" textLength="12.2" lengthAdjust="spacingAndGlyphs">C55F</text>
<text x="443.9" y="458.73" font-family="Liberation Mono, monospace" font-weight="bold" font-size="5.9" fill="#ffffff" dominant-baseline="central" textLength="12.2" lengthAdjust="spacingAndGlyphs">24E1</text>
<text x="215.3" y="464.795" font-family="Liberation Mono, monospace" font-weight="bold" font-size="5.9" fill="#ffffff" dominant-baseline="central" textLength="12.2" lengthAdjust="spacingAndGlyphs">0040</text>
<text x="230.54000000000002" y="464.795" font-family="Liberation Mono, monospace" font-weight="bold" font-size="5.9" fill="#ffffff" dominant-baseline="central" textLength="12.2" lengthAdjust="spacingAndGlyphs">2F21</text>
<text x="245.78" y="464.795" font-family="Liberation Mono, monospace" font-weight="bold" font-size="5.9" fill="#ffffff" dominant-baseline="central" textLength="12.2" lengthAdjust="spacingAndGlyphs">1961</text>
<text x="261.02" y="464.795" font-family="Liberation Mono, monospace" font-weight="bold" font-size="5.9" fill="#ffffff" dominant-baseline="central" textLength="12.2" lengthAdjust="spacingAndGlyphs">6082</text>
<text x="276.26" y="464.795" font-family="Liberation Mono, monospace" font-weight="bold" font-size="5.9" fill="#ffffff" dominant-baseline="central" textLength="12.2" lengthAdjust="spacingAndGlyphs">A1E3</text>
<text x="291.5" y="464.795" font-family="Liberation Mono, monospace" font-weight="bold" font-size="5.9" fill="#ffffff" dominant-baseline="central" textLength="12.2" lengthAdjust="spacingAndGlyphs">0965</text>
<text x="306.74" y="464.795" font-family="Liberation Mono, monospace" font-weight="bold" font-size="5.9" fill="#ffffff" dominant-baseline="central" textLength="12.2" lengthAdjust="spacingAndGlyphs">4C48</text>
<text x="321.98" y="464.795" font-family="Liberation Mono, monospace" font-weight="bold" font-size="5.9" fill="#ffffff" dominant-baseline="central" textLength="12.2" lengthAdjust="spacingAndGlyphs">B6A0</text>
<text x="337.22" y="464.795" font-family="Liberation Mono, monospace" font-weight="bold" font-size="5.9" fill="#ffffff" dominant-baseline="central" textLength="12.2" lengthAdjust="spacingAndGlyphs">62F5</text>
<text x="352.46000000000004" y="464.795" font-family="Liberation Mono, monospace" font-weight="bold" font-size="5.9" fill="#ffffff" dominant-baseline="central" textLength="12.2" lengthAdjust="spacingAndGlyphs">1983</text>
<text x="367.70000000000005" y="464.795" font-family="Liberation Mono, monospace" font-weight="bold" font-size="5.9" fill="#ffffff" dominant-baseline="central" textLength="12.2" lengthAdjust="spacingAndGlyphs">7C97</text>
<text x="382.94000000000005" y="464.795" font-family="Liberation Mono, monospace" font-weight="bold" font-size="5.9" fill="#ffffff" dominant-baseline="central" textLength="12.2" lengthAdjust="spacingAndGlyphs">9639</text>
<text x="398.18" y="464.795" font-family="Liberation Mono, monospace" font-weight="bold" font-size="5.9" fill="#ffffff" dominant-baseline="central" textLength="12.2" lengthAdjust="spacingAndGlyphs">1200</text>
<text x="413.42" y="464.795" font-family="Liberation Mono, monospace" font-weight="bold" font-size="5.9" fill="#ffffff" dominant-baseline="central" textLength="12.2" lengthAdjust="spacingAndGlyphs">0989</text>
<text x="428.66" y="464.795" font-family="Liberation Mono, monospace" font-weight="bold" font-size="5.9" fill="#ffffff" dominant-baseline="central" textLength="12.2" lengthAdjust="spacingAndGlyphs">B889</text>
<text x="443.9" y="464.795" font-family="Liberation Mono, monospace" font-weight="bold" font-size="5.9" fill="#ffffff" dominant-baseline="central" textLength="12.2" lengthAdjust="spacingAndGlyphs">64E2</text>
<text x="215.3" y="470.86" font-family="Liberation Mono, monospace" font-weight="bold" font-size="5.9" fill="#ffffff" dominant-baseline="central" textLength="12.2" lengthAdjust="spacingAndGlyphs">3B88</text>
<text x="230.54000000000002" y="470.86" font-family="Liberation Mono, monospace" font-weight="bold" font-size="5.9" fill="#ffffff" dominant-baseline="central" textLength="12.2" lengthAdjust="spacingAndGlyphs">8590</text>
<text x="245.78" y="470.86" font-family="Liberation Mono, monospace" font-weight="bold" font-size="5.9" fill="#ffffff" dominant-baseline="central" textLength="12.2" lengthAdjust="spacingAndGlyphs">8650</text>
<text x="261.02" y="470.86" font-family="Liberation Mono, monospace" font-weight="bold" font-size="5.9" fill="#ffffff" dominant-baseline="central" textLength="12.2" lengthAdjust="spacingAndGlyphs">38F5</text>
<text x="276.26" y="470.86" font-family="Liberation Mono, monospace" font-weight="bold" font-size="5.9" fill="#ffffff" dominant-baseline="central" textLength="12.2" lengthAdjust="spacingAndGlyphs">D240</text>
<text x="291.5" y="470.86" font-family="Liberation Mono, monospace" font-weight="bold" font-size="5.9" fill="#ffffff" dominant-baseline="central" textLength="12.2" lengthAdjust="spacingAndGlyphs">FC42</text>
<text x="306.74" y="470.86" font-family="Liberation Mono, monospace" font-weight="bold" font-size="5.9" fill="#ffffff" dominant-baseline="central" textLength="12.2" lengthAdjust="spacingAndGlyphs">D88F</text>
<text x="321.98" y="470.86" font-family="Liberation Mono, monospace" font-weight="bold" font-size="5.9" fill="#ffffff" dominant-baseline="central" textLength="12.2" lengthAdjust="spacingAndGlyphs">CC01</text>
<text x="337.22" y="470.86" font-family="Liberation Mono, monospace" font-weight="bold" font-size="5.9" fill="#ffffff" dominant-baseline="central" textLength="12.2" lengthAdjust="spacingAndGlyphs">9F68</text>
<text x="352.46000000000004" y="470.86" font-family="Liberation Mono, monospace" font-weight="bold" font-size="5.9" fill="#ffffff" dominant-baseline="central" textLength="12.2" lengthAdjust="spacingAndGlyphs">6E31</text>
<text x="367.70000000000005" y="470.86" font-family="Liberation Mono, monospace" font-weight="bold" font-size="5.9" fill="#ffffff" dominant-baseline="central" textLength="12.2" lengthAdjust="spacingAndGlyphs">8091</text>
<text x="382.94000000000005" y="470.86" font-family="Liberation Mono, monospace" font-weight="bold" font-size="5.9" fill="#ffffff" dominant-baseline="central" textLength="12.2" lengthAdjust="spacingAndGlyphs">78C2</text>
<text x="398.18" y="470.86" font-family="Liberation Mono, monospace" font-weight="bold" font-size="5.9" fill="#ffffff" dominant-baseline="central" textLength="12.2" lengthAdjust="spacingAndGlyphs">0953</text>
<text x="413.42" y="470.86" font-family="Liberation Mono, monospace" font-weight="bold" font-size="5.9" fill="#ffffff" dominant-baseline="central" textLength="12.2" lengthAdjust="spacingAndGlyphs">0515</text>
<text x="428.66" y="470.86" font-family="Liberation Mono, monospace" font-weight="bold" font-size="5.9" fill="#ffffff" dominant-baseline="central" textLength="12.2" lengthAdjust="spacingAndGlyphs">0E68</text>
<text x="443.9" y="470.86" font-family="Liberation Mono, monospace" font-weight="bold" font-size="5.9" fill="#ffffff" dominant-baseline="central" textLength="12.2" lengthAdjust="spacingAndGlyphs">9370</text>
<text x="215.3" y="476.925" font-family="Liberation Mono, monospace" font-weight="bold" font-size="5.9" fill="#ffffff" dominant-baseline="central" textLength="12.2" lengthAdjust="spacingAndGlyphs">21C5</text>
<text x="230.54000000000002" y="476.925" font-family="Liberation Mono, monospace" font-weight="bold" font-size="5.9" fill="#ffffff" dominant-baseline="central" textLength="12.2" lengthAdjust="spacingAndGlyphs">0563</text>
<text x="245.78" y="476.925" font-family="Liberation Mono, monospace" font-weight="bold" font-size="5.9" fill="#ffffff" dominant-baseline="central" textLength="12.2" lengthAdjust="spacingAndGlyphs">E747</text>
<text x="261.02" y="476.925" font-family="Liberation Mono, monospace" font-weight="bold" font-size="5.9" fill="#ffffff" dominant-baseline="central" textLength="12.2" lengthAdjust="spacingAndGlyphs">8CA9</text>
<text x="276.26" y="476.925" font-family="Liberation Mono, monospace" font-weight="bold" font-size="5.9" fill="#ffffff" dominant-baseline="central" textLength="12.2" lengthAdjust="spacingAndGlyphs">63F8</text>
<text x="291.5" y="476.925" font-family="Liberation Mono, monospace" font-weight="bold" font-size="5.9" fill="#ffffff" dominant-baseline="central" textLength="12.2" lengthAdjust="spacingAndGlyphs">F899</text>
<text x="306.74" y="476.925" font-family="Liberation Mono, monospace" font-weight="bold" font-size="5.9" fill="#ffffff" dominant-baseline="central" textLength="12.2" lengthAdjust="spacingAndGlyphs">5409</text>
<text x="321.98" y="476.925" font-family="Liberation Mono, monospace" font-weight="bold" font-size="5.9" fill="#ffffff" dominant-baseline="central" textLength="12.2" lengthAdjust="spacingAndGlyphs">4520</text>
<text x="337.22" y="476.925" font-family="Liberation Mono, monospace" font-weight="bold" font-size="5.9" fill="#ffffff" dominant-baseline="central" textLength="12.2" lengthAdjust="spacingAndGlyphs">9908</text>
<text x="352.46000000000004" y="476.925" font-family="Liberation Mono, monospace" font-weight="bold" font-size="5.9" fill="#ffffff" dominant-baseline="central" textLength="12.2" lengthAdjust="spacingAndGlyphs">0CC8</text>
<text x="367.70000000000005" y="476.925" font-family="Liberation Mono, monospace" font-weight="bold" font-size="5.9" fill="#ffffff" dominant-baseline="central" textLength="12.2" lengthAdjust="spacingAndGlyphs">7878</text>
<text x="382.94000000000005" y="476.925" font-family="Liberation Mono, monospace" font-weight="bold" font-size="5.9" fill="#ffffff" dominant-baseline="central" textLength="12.2" lengthAdjust="spacingAndGlyphs">5745</text>
<text x="398.18" y="476.925" font-family="Liberation Mono, monospace" font-weight="bold" font-size="5.9" fill="#ffffff" dominant-baseline="central" textLength="12.2" lengthAdjust="spacingAndGlyphs">C780</text>
<text x="413.42" y="476.925" font-family="Liberation Mono, monospace" font-weight="bold" font-size="5.9" fill="#ffffff" dominant-baseline="central" textLength="12.2" lengthAdjust="spacingAndGlyphs">3703</text>
<text x="428.66" y="476.925" font-family="Liberation Mono, monospace" font-weight="bold" font-size="5.9" fill="#ffffff" dominant-baseline="central" textLength="12.2" lengthAdjust="spacingAndGlyphs">F68F</text>
<text x="443.9" y="476.925" font-family="Liberation Mono, monospace" font-weight="bold" font-size="5.9" fill="#ffffff" dominant-baseline="central" textLength="12.2" lengthAdjust="spacingAndGlyphs">10C1</text>
<text x="215.3" y="482.99" font-family="Liberation Mono, monospace" font-weight="bold" font-size="5.9" fill="#ffffff" dominant-baseline="central" textLength="12.2" lengthAdjust="spacingAndGlyphs">1488</text>
<text x="230.54000000000002" y="482.99" font-family="Liberation Mono, monospace" font-weight="bold" font-size="5.9" fill="#ffffff" dominant-baseline="central" textLength="12.2" lengthAdjust="spacingAndGlyphs">3341</text>
<text x="245.78" y="482.99" font-family="Liberation Mono, monospace" font-weight="bold" font-size="5.9" fill="#ffffff" dominant-baseline="central" textLength="12.2" lengthAdjust="spacingAndGlyphs">46C1</text>
<text x="261.02" y="482.99" font-family="Liberation Mono, monospace" font-weight="bold" font-size="5.9" fill="#ffffff" dominant-baseline="central" textLength="12.2" lengthAdjust="spacingAndGlyphs">7982</text>
<text x="276.26" y="482.99" font-family="Liberation Mono, monospace" font-weight="bold" font-size="5.9" fill="#ffffff" dominant-baseline="central" textLength="12.2" lengthAdjust="spacingAndGlyphs">0FC3</text>
<text x="291.5" y="482.99" font-family="Liberation Mono, monospace" font-weight="bold" font-size="5.9" fill="#ffffff" dominant-baseline="central" textLength="12.2" lengthAdjust="spacingAndGlyphs">38C5</text>
<text x="306.74" y="482.99" font-family="Liberation Mono, monospace" font-weight="bold" font-size="5.9" fill="#ffffff" dominant-baseline="central" textLength="12.2" lengthAdjust="spacingAndGlyphs">F888</text>
<text x="321.98" y="482.99" font-family="Liberation Mono, monospace" font-weight="bold" font-size="5.9" fill="#ffffff" dominant-baseline="central" textLength="12.2" lengthAdjust="spacingAndGlyphs">3140</text>
<text x="337.22" y="482.99" font-family="Liberation Mono, monospace" font-weight="bold" font-size="5.9" fill="#ffffff" dominant-baseline="central" textLength="12.2" lengthAdjust="spacingAndGlyphs">3905</text>
<text x="352.46000000000004" y="482.99" font-family="Liberation Mono, monospace" font-weight="bold" font-size="5.9" fill="#ffffff" dominant-baseline="central" textLength="12.2" lengthAdjust="spacingAndGlyphs">5833</text>
<text x="367.70000000000005" y="482.99" font-family="Liberation Mono, monospace" font-weight="bold" font-size="5.9" fill="#ffffff" dominant-baseline="central" textLength="12.2" lengthAdjust="spacingAndGlyphs">84F7</text>
<text x="382.94000000000005" y="482.99" font-family="Liberation Mono, monospace" font-weight="bold" font-size="5.9" fill="#ffffff" dominant-baseline="central" textLength="12.2" lengthAdjust="spacingAndGlyphs">C819</text>
<text x="398.18" y="482.99" font-family="Liberation Mono, monospace" font-weight="bold" font-size="5.9" fill="#ffffff" dominant-baseline="central" textLength="12.2" lengthAdjust="spacingAndGlyphs">6518</text>
<text x="413.42" y="482.99" font-family="Liberation Mono, monospace" font-weight="bold" font-size="5.9" fill="#ffffff" dominant-baseline="central" textLength="12.2" lengthAdjust="spacingAndGlyphs">4529</text>
<text x="428.66" y="482.99" font-family="Liberation Mono, monospace" font-weight="bold" font-size="5.9" fill="#ffffff" dominant-baseline="central" textLength="12.2" lengthAdjust="spacingAndGlyphs">AA39</text>
<text x="443.9" y="482.99" font-family="Liberation Mono, monospace" font-weight="bold" font-size="5.9" fill="#ffffff" dominant-baseline="central" textLength="12.2" lengthAdjust="spacingAndGlyphs">E763</text>
<text x="215.3" y="489.055" font-family="Liberation Mono, monospace" font-weight="bold" font-size="5.9" fill="#ffffff" dominant-baseline="central" textLength="12.2" lengthAdjust="spacingAndGlyphs">9998</text>
<text x="230.54000000000002" y="489.055" font-family="Liberation Mono, monospace" font-weight="bold" font-size="5.9" fill="#ffffff" dominant-baseline="central" textLength="12.2" lengthAdjust="spacingAndGlyphs">88F8</text>
<text x="245.78" y="489.055" font-family="Liberation Mono, monospace" font-weight="bold" font-size="5.9" fill="#ffffff" dominant-baseline="central" textLength="12.2" lengthAdjust="spacingAndGlyphs">2298</text>
<text x="261.02" y="489.055" font-family="Liberation Mono, monospace" font-weight="bold" font-size="5.9" fill="#ffffff" dominant-baseline="central" textLength="12.2" lengthAdjust="spacingAndGlyphs">A895</text>
<text x="276.26" y="489.055" font-family="Liberation Mono, monospace" font-weight="bold" font-size="5.9" fill="#ffffff" dominant-baseline="central" textLength="12.2" lengthAdjust="spacingAndGlyphs">CC20</text>
<text x="291.5" y="489.055" font-family="Liberation Mono, monospace" font-weight="bold" font-size="5.9" fill="#ffffff" dominant-baseline="central" textLength="12.2" lengthAdjust="spacingAndGlyphs">79C2</text>
<text x="306.74" y="489.055" font-family="Liberation Mono, monospace" font-weight="bold" font-size="5.9" fill="#ffffff" dominant-baseline="central" textLength="12.2" lengthAdjust="spacingAndGlyphs">47CF</text>
<text x="321.98" y="489.055" font-family="Liberation Mono, monospace" font-weight="bold" font-size="5.9" fill="#ffffff" dominant-baseline="central" textLength="12.2" lengthAdjust="spacingAndGlyphs">C181</text>
<text x="337.22" y="489.055" font-family="Liberation Mono, monospace" font-weight="bold" font-size="5.9" fill="#ffffff" dominant-baseline="central" textLength="12.2" lengthAdjust="spacingAndGlyphs">0980</text>
<text x="352.46000000000004" y="489.055" font-family="Liberation Mono, monospace" font-weight="bold" font-size="5.9" fill="#ffffff" dominant-baseline="central" textLength="12.2" lengthAdjust="spacingAndGlyphs">C851</text>
<text x="367.70000000000005" y="489.055" font-family="Liberation Mono, monospace" font-weight="bold" font-size="5.9" fill="#ffffff" dominant-baseline="central" textLength="12.2" lengthAdjust="spacingAndGlyphs">04F1</text>
<text x="382.94000000000005" y="489.055" font-family="Liberation Mono, monospace" font-weight="bold" font-size="5.9" fill="#ffffff" dominant-baseline="central" textLength="12.2" lengthAdjust="spacingAndGlyphs">A042</text>
<text x="398.18" y="489.055" font-family="Liberation Mono, monospace" font-weight="bold" font-size="5.9" fill="#ffffff" dominant-baseline="central" textLength="12.2" lengthAdjust="spacingAndGlyphs">7533</text>
<text x="413.42" y="489.055" font-family="Liberation Mono, monospace" font-weight="bold" font-size="5.9" fill="#ffffff" dominant-baseline="central" textLength="12.2" lengthAdjust="spacingAndGlyphs">1575</text>
<text x="428.66" y="489.055" font-family="Liberation Mono, monospace" font-weight="bold" font-size="5.9" fill="#ffffff" dominant-baseline="central" textLength="12.2" lengthAdjust="spacingAndGlyphs">8AA8</text>
<text x="443.9" y="489.055" font-family="Liberation Mono, monospace" font-weight="bold" font-size="5.9" fill="#ffffff" dominant-baseline="central" textLength="12.2" lengthAdjust="spacingAndGlyphs">8810</text>
<text x="215.3" y="495.12" font-family="Liberation Mono, monospace" font-weight="bold" font-size="5.9" fill="#ffffff" dominant-baseline="central" textLength="12.2" lengthAdjust="spacingAndGlyphs">3AC5</text>
<text x="230.54000000000002" y="495.12" font-family="Liberation Mono, monospace" font-weight="bold" font-size="5.9" fill="#ffffff" dominant-baseline="central" textLength="12.2" lengthAdjust="spacingAndGlyphs">CAE3</text>
<text x="245.78" y="495.12" font-family="Liberation Mono, monospace" font-weight="bold" font-size="5.9" fill="#ffffff" dominant-baseline="central" textLength="12.2" lengthAdjust="spacingAndGlyphs">F587</text>
<text x="261.02" y="495.12" font-family="Liberation Mono, monospace" font-weight="bold" font-size="5.9" fill="#ffffff" dominant-baseline="central" textLength="12.2" lengthAdjust="spacingAndGlyphs">C809</text>
<text x="276.26" y="495.12" font-family="Liberation Mono, monospace" font-weight="bold" font-size="5.9" fill="#ffffff" dominant-baseline="central" textLength="12.2" lengthAdjust="spacingAndGlyphs">8630</text>
<text x="291.5" y="495.12" font-family="Liberation Mono, monospace" font-weight="bold" font-size="5.9" fill="#ffffff" dominant-baseline="central" textLength="12.2" lengthAdjust="spacingAndGlyphs">7689</text>
<text x="306.74" y="495.12" font-family="Liberation Mono, monospace" font-weight="bold" font-size="5.9" fill="#ffffff" dominant-baseline="central" textLength="12.2" lengthAdjust="spacingAndGlyphs">3CE9</text>
<text x="321.98" y="495.12" font-family="Liberation Mono, monospace" font-weight="bold" font-size="5.9" fill="#ffffff" dominant-baseline="central" textLength="12.2" lengthAdjust="spacingAndGlyphs">A3A2</text>
<text x="337.22" y="495.12" font-family="Liberation Mono, monospace" font-weight="bold" font-size="5.9" fill="#ffffff" dominant-baseline="central" textLength="12.2" lengthAdjust="spacingAndGlyphs">0808</text>
<text x="352.46000000000004" y="495.12" font-family="Liberation Mono, monospace" font-weight="bold" font-size="5.9" fill="#ffffff" dominant-baseline="central" textLength="12.2" lengthAdjust="spacingAndGlyphs">7428</text>
<text x="367.70000000000005" y="495.12" font-family="Liberation Mono, monospace" font-weight="bold" font-size="5.9" fill="#ffffff" dominant-baseline="central" textLength="12.2" lengthAdjust="spacingAndGlyphs">4488</text>
<text x="382.94000000000005" y="495.12" font-family="Liberation Mono, monospace" font-weight="bold" font-size="5.9" fill="#ffffff" dominant-baseline="central" textLength="12.2" lengthAdjust="spacingAndGlyphs">88E5</text>
<text x="398.18" y="495.12" font-family="Liberation Mono, monospace" font-weight="bold" font-size="5.9" fill="#ffffff" dominant-baseline="central" textLength="12.2" lengthAdjust="spacingAndGlyphs">F290</text>
<text x="413.42" y="495.12" font-family="Liberation Mono, monospace" font-weight="bold" font-size="5.9" fill="#ffffff" dominant-baseline="central" textLength="12.2" lengthAdjust="spacingAndGlyphs">8682</text>
<text x="428.66" y="495.12" font-family="Liberation Mono, monospace" font-weight="bold" font-size="5.9" fill="#ffffff" dominant-baseline="central" textLength="12.2" lengthAdjust="spacingAndGlyphs">8417</text>
<text x="443.9" y="495.12" font-family="Liberation Mono, monospace" font-weight="bold" font-size="5.9" fill="#ffffff" dominant-baseline="central" textLength="12.2" lengthAdjust="spacingAndGlyphs">6AA1</text>
<text x="215.3" y="501.185" font-family="Liberation Mono, monospace" font-weight="bold" font-size="5.9" fill="#ffffff" dominant-baseline="central" textLength="12.2" lengthAdjust="spacingAndGlyphs">1EC8</text>
<text x="230.54000000000002" y="501.185" font-family="Liberation Mono, monospace" font-weight="bold" font-size="5.9" fill="#ffffff" dominant-baseline="central" textLength="12.2" lengthAdjust="spacingAndGlyphs">8961</text>
<text x="245.78" y="501.185" font-family="Liberation Mono, monospace" font-weight="bold" font-size="5.9" fill="#ffffff" dominant-baseline="central" textLength="12.2" lengthAdjust="spacingAndGlyphs">8831</text>
<text x="261.02" y="501.185" font-family="Liberation Mono, monospace" font-weight="bold" font-size="5.9" fill="#ffffff" dominant-baseline="central" textLength="12.2" lengthAdjust="spacingAndGlyphs">3182</text>
<text x="276.26" y="501.185" font-family="Liberation Mono, monospace" font-weight="bold" font-size="5.9" fill="#ffffff" dominant-baseline="central" textLength="12.2" lengthAdjust="spacingAndGlyphs">D9A3</text>
<text x="291.5" y="501.185" font-family="Liberation Mono, monospace" font-weight="bold" font-size="5.9" fill="#ffffff" dominant-baseline="central" textLength="12.2" lengthAdjust="spacingAndGlyphs">0825</text>
<text x="306.74" y="501.185" font-family="Liberation Mono, monospace" font-weight="bold" font-size="5.9" fill="#ffffff" dominant-baseline="central" textLength="12.2" lengthAdjust="spacingAndGlyphs">E4C8</text>
<text x="321.98" y="501.185" font-family="Liberation Mono, monospace" font-weight="bold" font-size="5.9" fill="#ffffff" dominant-baseline="central" textLength="12.2" lengthAdjust="spacingAndGlyphs">EFE8</text>
<text x="337.22" y="501.185" font-family="Liberation Mono, monospace" font-weight="bold" font-size="5.9" fill="#ffffff" dominant-baseline="central" textLength="12.2" lengthAdjust="spacingAndGlyphs">D405</text>
<text x="352.46000000000004" y="501.185" font-family="Liberation Mono, monospace" font-weight="bold" font-size="5.9" fill="#ffffff" dominant-baseline="central" textLength="12.2" lengthAdjust="spacingAndGlyphs">C4A2</text>
<text x="367.70000000000005" y="501.185" font-family="Liberation Mono, monospace" font-weight="bold" font-size="5.9" fill="#ffffff" dominant-baseline="central" textLength="12.2" lengthAdjust="spacingAndGlyphs">9957</text>
<text x="382.94000000000005" y="501.185" font-family="Liberation Mono, monospace" font-weight="bold" font-size="5.9" fill="#ffffff" dominant-baseline="central" textLength="12.2" lengthAdjust="spacingAndGlyphs">5DF9</text>
<text x="398.18" y="501.185" font-family="Liberation Mono, monospace" font-weight="bold" font-size="5.9" fill="#ffffff" dominant-baseline="central" textLength="12.2" lengthAdjust="spacingAndGlyphs">F758</text>
<text x="413.42" y="501.185" font-family="Liberation Mono, monospace" font-weight="bold" font-size="5.9" fill="#ffffff" dominant-baseline="central" textLength="12.2" lengthAdjust="spacingAndGlyphs">5949</text>
<text x="428.66" y="501.185" font-family="Liberation Mono, monospace" font-weight="bold" font-size="5.9" fill="#ffffff" dominant-baseline="central" textLength="12.2" lengthAdjust="spacingAndGlyphs">4C99</text>
<text x="443.9" y="501.185" font-family="Liberation Mono, monospace" font-weight="bold" font-size="5.9" fill="#ffffff" dominant-baseline="central" textLength="12.2" lengthAdjust="spacingAndGlyphs">A1E2</text>
<text x="215.3" y="507.25" font-family="Liberation Mono, monospace" font-weight="bold" font-size="5.9" fill="#ffffff" dominant-baseline="central" textLength="12.2" lengthAdjust="spacingAndGlyphs">EE78</text>
<text x="230.54000000000002" y="507.25" font-family="Liberation Mono, monospace" font-weight="bold" font-size="5.9" fill="#ffffff" dominant-baseline="central" textLength="12.2" lengthAdjust="spacingAndGlyphs">9858</text>
<text x="245.78" y="507.25" font-family="Liberation Mono, monospace" font-weight="bold" font-size="5.9" fill="#ffffff" dominant-baseline="central" textLength="12.2" lengthAdjust="spacingAndGlyphs">7E38</text>
<text x="261.02" y="507.25" font-family="Liberation Mono, monospace" font-weight="bold" font-size="5.9" fill="#ffffff" dominant-baseline="central" textLength="12.2" lengthAdjust="spacingAndGlyphs">8F36</text>
<text x="276.26" y="507.25" font-family="Liberation Mono, monospace" font-weight="bold" font-size="5.9" fill="#ffffff" dominant-baseline="central" textLength="12.2" lengthAdjust="spacingAndGlyphs">8EA8</text>
<text x="291.5" y="507.25" font-family="Liberation Mono, monospace" font-weight="bold" font-size="5.9" fill="#ffffff" dominant-baseline="central" textLength="12.2" lengthAdjust="spacingAndGlyphs">9D42</text>
<text x="306.74" y="507.25" font-family="Liberation Mono, monospace" font-weight="bold" font-size="5.9" fill="#ffffff" dominant-baseline="central" textLength="12.2" lengthAdjust="spacingAndGlyphs">384F</text>
<text x="321.98" y="507.25" font-family="Liberation Mono, monospace" font-weight="bold" font-size="5.9" fill="#ffffff" dominant-baseline="central" textLength="12.2" lengthAdjust="spacingAndGlyphs">C891</text>
<text x="337.22" y="507.25" font-family="Liberation Mono, monospace" font-weight="bold" font-size="5.9" fill="#ffffff" dominant-baseline="central" textLength="12.2" lengthAdjust="spacingAndGlyphs">F3E8</text>
<text x="352.46000000000004" y="507.25" font-family="Liberation Mono, monospace" font-weight="bold" font-size="5.9" fill="#ffffff" dominant-baseline="central" textLength="12.2" lengthAdjust="spacingAndGlyphs">8C71</text>
<text x="367.70000000000005" y="507.25" font-family="Liberation Mono, monospace" font-weight="bold" font-size="5.9" fill="#ffffff" dominant-baseline="central" textLength="12.2" lengthAdjust="spacingAndGlyphs">8851</text>
<text x="382.94000000000005" y="507.25" font-family="Liberation Mono, monospace" font-weight="bold" font-size="5.9" fill="#ffffff" dominant-baseline="central" textLength="12.2" lengthAdjust="spacingAndGlyphs">6CC2</text>
<text x="398.18" y="507.25" font-family="Liberation Mono, monospace" font-weight="bold" font-size="5.9" fill="#ffffff" dominant-baseline="central" textLength="12.2" lengthAdjust="spacingAndGlyphs">1013</text>
<text x="413.42" y="507.25" font-family="Liberation Mono, monospace" font-weight="bold" font-size="5.9" fill="#ffffff" dominant-baseline="central" textLength="12.2" lengthAdjust="spacingAndGlyphs">89D5</text>
<text x="428.66" y="507.25" font-family="Liberation Mono, monospace" font-weight="bold" font-size="5.9" fill="#ffffff" dominant-baseline="central" textLength="12.2" lengthAdjust="spacingAndGlyphs">A6E8</text>
<text x="443.9" y="507.25" font-family="Liberation Mono, monospace" font-weight="bold" font-size="5.9" fill="#ffffff" dominant-baseline="central" textLength="12.2" lengthAdjust="spacingAndGlyphs">3080</text>
<text x="215.3" y="513.315" font-family="Liberation Mono, monospace" font-weight="bold" font-size="5.9" fill="#ffffff" dominant-baseline="central" textLength="12.2" lengthAdjust="spacingAndGlyphs">0745</text>
<text x="230.54000000000002" y="513.315" font-family="Liberation Mono, monospace" font-weight="bold" font-size="5.9" fill="#ffffff" dominant-baseline="central" textLength="12.2" lengthAdjust="spacingAndGlyphs">8863</text>
<text x="245.78" y="513.315" font-family="Liberation Mono, monospace" font-weight="bold" font-size="5.9" fill="#ffffff" dominant-baseline="central" textLength="12.2" lengthAdjust="spacingAndGlyphs">E887</text>
<text x="261.02" y="513.315" font-family="Liberation Mono, monospace" font-weight="bold" font-size="5.9" fill="#ffffff" dominant-baseline="central" textLength="12.2" lengthAdjust="spacingAndGlyphs">EA69</text>
<text x="276.26" y="513.315" font-family="Liberation Mono, monospace" font-weight="bold" font-size="5.9" fill="#ffffff" dominant-baseline="central" textLength="12.2" lengthAdjust="spacingAndGlyphs">CA78</text>
<text x="291.5" y="513.315" font-family="Liberation Mono, monospace" font-weight="bold" font-size="5.9" fill="#ffffff" dominant-baseline="central" textLength="12.2" lengthAdjust="spacingAndGlyphs">8809</text>
<text x="306.74" y="513.315" font-family="Liberation Mono, monospace" font-weight="bold" font-size="5.9" fill="#ffffff" dominant-baseline="central" textLength="12.2" lengthAdjust="spacingAndGlyphs">7944</text>
<text x="321.98" y="513.315" font-family="Liberation Mono, monospace" font-weight="bold" font-size="5.9" fill="#ffffff" dominant-baseline="central" textLength="12.2" lengthAdjust="spacingAndGlyphs">3A23</text>
<text x="337.22" y="513.315" font-family="Liberation Mono, monospace" font-weight="bold" font-size="5.9" fill="#ffffff" dominant-baseline="central" textLength="12.2" lengthAdjust="spacingAndGlyphs">A368</text>
<text x="352.46000000000004" y="513.315" font-family="Liberation Mono, monospace" font-weight="bold" font-size="5.9" fill="#ffffff" dominant-baseline="central" textLength="12.2" lengthAdjust="spacingAndGlyphs">C888</text>
<text x="367.70000000000005" y="513.315" font-family="Liberation Mono, monospace" font-weight="bold" font-size="5.9" fill="#ffffff" dominant-baseline="central" textLength="12.2" lengthAdjust="spacingAndGlyphs">78F8</text>
<text x="382.94000000000005" y="513.315" font-family="Liberation Mono, monospace" font-weight="bold" font-size="5.9" fill="#ffffff" dominant-baseline="central" textLength="12.2" lengthAdjust="spacingAndGlyphs">3E85</text>
<text x="398.18" y="513.315" font-family="Liberation Mono, monospace" font-weight="bold" font-size="5.9" fill="#ffffff" dominant-baseline="central" textLength="12.2" lengthAdjust="spacingAndGlyphs">AF70</text>
<text x="413.42" y="513.315" font-family="Liberation Mono, monospace" font-weight="bold" font-size="5.9" fill="#ffffff" dominant-baseline="central" textLength="12.2" lengthAdjust="spacingAndGlyphs">EE83</text>
<text x="428.66" y="513.315" font-family="Liberation Mono, monospace" font-weight="bold" font-size="5.9" fill="#ffffff" dominant-baseline="central" textLength="12.2" lengthAdjust="spacingAndGlyphs">987F</text>
<text x="443.9" y="513.315" font-family="Liberation Mono, monospace" font-weight="bold" font-size="5.9" fill="#ffffff" dominant-baseline="central" textLength="12.2" lengthAdjust="spacingAndGlyphs">8881</text>
<text x="215.3" y="519.38" font-family="Liberation Mono, monospace" font-weight="bold" font-size="5.9" fill="#ffffff" dominant-baseline="central" textLength="12.2" lengthAdjust="spacingAndGlyphs">2988</text>
<text x="230.54000000000002" y="519.38" font-family="Liberation Mono, monospace" font-weight="bold" font-size="5.9" fill="#ffffff" dominant-baseline="central" textLength="12.2" lengthAdjust="spacingAndGlyphs">8481</text>
<text x="245.78" y="519.38" font-family="Liberation Mono, monospace" font-weight="bold" font-size="5.9" fill="#ffffff" dominant-baseline="central" textLength="12.2" lengthAdjust="spacingAndGlyphs">8881</text>
<text x="261.02" y="519.38" font-family="Liberation Mono, monospace" font-weight="bold" font-size="5.9" fill="#ffffff" dominant-baseline="central" textLength="12.2" lengthAdjust="spacingAndGlyphs">9282</text>
<text x="276.26" y="519.38" font-family="Liberation Mono, monospace" font-weight="bold" font-size="5.9" fill="#ffffff" dominant-baseline="central" textLength="12.2" lengthAdjust="spacingAndGlyphs">AF83</text>
<text x="291.5" y="519.38" font-family="Liberation Mono, monospace" font-weight="bold" font-size="5.9" fill="#ffffff" dominant-baseline="central" textLength="12.2" lengthAdjust="spacingAndGlyphs">8185</text>
<text x="306.74" y="519.38" font-family="Liberation Mono, monospace" font-weight="bold" font-size="5.9" fill="#ffffff" dominant-baseline="central" textLength="12.2" lengthAdjust="spacingAndGlyphs">7188</text>
<text x="321.98" y="519.38" font-family="Liberation Mono, monospace" font-weight="bold" font-size="5.9" fill="#ffffff" dominant-baseline="central" textLength="12.2" lengthAdjust="spacingAndGlyphs">7280</text>
<text x="337.22" y="519.38" font-family="Liberation Mono, monospace" font-weight="bold" font-size="5.9" fill="#ffffff" dominant-baseline="central" textLength="12.2" lengthAdjust="spacingAndGlyphs">C395</text>
<text x="352.46000000000004" y="519.38" font-family="Liberation Mono, monospace" font-weight="bold" font-size="5.9" fill="#ffffff" dominant-baseline="central" textLength="12.2" lengthAdjust="spacingAndGlyphs">5622</text>
<text x="367.70000000000005" y="519.38" font-family="Liberation Mono, monospace" font-weight="bold" font-size="5.9" fill="#ffffff" dominant-baseline="central" textLength="12.2" lengthAdjust="spacingAndGlyphs">3987</text>
<text x="382.94000000000005" y="519.38" font-family="Liberation Mono, monospace" font-weight="bold" font-size="5.9" fill="#ffffff" dominant-baseline="central" textLength="12.2" lengthAdjust="spacingAndGlyphs">8F09</text>
<text x="398.18" y="519.38" font-family="Liberation Mono, monospace" font-weight="bold" font-size="5.9" fill="#ffffff" dominant-baseline="central" textLength="12.2" lengthAdjust="spacingAndGlyphs">C998</text>
<text x="413.42" y="519.38" font-family="Liberation Mono, monospace" font-weight="bold" font-size="5.9" fill="#ffffff" dominant-baseline="central" textLength="12.2" lengthAdjust="spacingAndGlyphs">5969</text>
<text x="428.66" y="519.38" font-family="Liberation Mono, monospace" font-weight="bold" font-size="5.9" fill="#ffffff" dominant-baseline="central" textLength="12.2" lengthAdjust="spacingAndGlyphs">23F9</text>
<text x="443.9" y="519.38" font-family="Liberation Mono, monospace" font-weight="bold" font-size="5.9" fill="#ffffff" dominant-baseline="central" textLength="12.2" lengthAdjust="spacingAndGlyphs">7CA3</text>
<text x="215.3" y="525.445" font-family="Liberation Mono, monospace" font-weight="bold" font-size="5.9" fill="#ffffff" dominant-baseline="central" textLength="12.2" lengthAdjust="spacingAndGlyphs">9F58</text>
<text x="230.54000000000002" y="525.445" font-family="Liberation Mono, monospace" font-weight="bold" font-size="5.9" fill="#ffffff" dominant-baseline="central" textLength="12.2" lengthAdjust="spacingAndGlyphs">1888</text>
<text x="245.78" y="525.445" font-family="Liberation Mono, monospace" font-weight="bold" font-size="5.9" fill="#ffffff" dominant-baseline="central" textLength="12.2" lengthAdjust="spacingAndGlyphs">8818</text>
<text x="261.02" y="525.445" font-family="Liberation Mono, monospace" font-weight="bold" font-size="5.9" fill="#ffffff" dominant-baseline="central" textLength="12.2" lengthAdjust="spacingAndGlyphs">8465</text>
<text x="276.26" y="525.445" font-family="Liberation Mono, monospace" font-weight="bold" font-size="5.9" fill="#ffffff" dominant-baseline="central" textLength="12.2" lengthAdjust="spacingAndGlyphs">9120</text>
<text x="291.5" y="525.445" font-family="Liberation Mono, monospace" font-weight="bold" font-size="5.9" fill="#ffffff" dominant-baseline="central" textLength="12.2" lengthAdjust="spacingAndGlyphs">68C2</text>
<text x="306.74" y="525.445" font-family="Liberation Mono, monospace" font-weight="bold" font-size="5.9" fill="#ffffff" dominant-baseline="central" textLength="12.2" lengthAdjust="spacingAndGlyphs">F8AF</text>
<text x="321.98" y="525.445" font-family="Liberation Mono, monospace" font-weight="bold" font-size="5.9" fill="#ffffff" dominant-baseline="central" textLength="12.2" lengthAdjust="spacingAndGlyphs">8371</text>
<text x="337.22" y="525.445" font-family="Liberation Mono, monospace" font-weight="bold" font-size="5.9" fill="#ffffff" dominant-baseline="central" textLength="12.2" lengthAdjust="spacingAndGlyphs">5E28</text>
<text x="352.46000000000004" y="525.445" font-family="Liberation Mono, monospace" font-weight="bold" font-size="5.9" fill="#ffffff" dominant-baseline="central" textLength="12.2" lengthAdjust="spacingAndGlyphs">C191</text>
<text x="367.70000000000005" y="525.445" font-family="Liberation Mono, monospace" font-weight="bold" font-size="5.9" fill="#ffffff" dominant-baseline="central" textLength="12.2" lengthAdjust="spacingAndGlyphs">1F81</text>
<text x="382.94000000000005" y="525.445" font-family="Liberation Mono, monospace" font-weight="bold" font-size="5.9" fill="#ffffff" dominant-baseline="central" textLength="12.2" lengthAdjust="spacingAndGlyphs">E142</text>
<text x="398.18" y="525.445" font-family="Liberation Mono, monospace" font-weight="bold" font-size="5.9" fill="#ffffff" dominant-baseline="central" textLength="12.2" lengthAdjust="spacingAndGlyphs">88F3</text>
<text x="413.42" y="525.445" font-family="Liberation Mono, monospace" font-weight="bold" font-size="5.9" fill="#ffffff" dominant-baseline="central" textLength="12.2" lengthAdjust="spacingAndGlyphs">C335</text>
<text x="428.66" y="525.445" font-family="Liberation Mono, monospace" font-weight="bold" font-size="5.9" fill="#ffffff" dominant-baseline="central" textLength="12.2" lengthAdjust="spacingAndGlyphs">E328</text>
<text x="443.9" y="525.445" font-family="Liberation Mono, monospace" font-weight="bold" font-size="5.9" fill="#ffffff" dominant-baseline="central" textLength="12.2" lengthAdjust="spacingAndGlyphs">C558</text>
<text x="215.3" y="531.51" font-family="Liberation Mono, monospace" font-weight="bold" font-size="5.9" fill="#ffffff" dominant-baseline="central" textLength="12.2" lengthAdjust="spacingAndGlyphs">A8B5</text>
<text x="230.54000000000002" y="531.51" font-family="Liberation Mono, monospace" font-weight="bold" font-size="5.9" fill="#ffffff" dominant-baseline="central" textLength="12.2" lengthAdjust="spacingAndGlyphs">6BE2</text>
<text x="245.78" y="531.51" font-family="Liberation Mono, monospace" font-weight="bold" font-size="5.9" fill="#ffffff" dominant-baseline="central" textLength="12.2" lengthAdjust="spacingAndGlyphs">1667</text>
<text x="261.02" y="531.51" font-family="Liberation Mono, monospace" font-weight="bold" font-size="5.9" fill="#ffffff" dominant-baseline="central" textLength="12.2" lengthAdjust="spacingAndGlyphs">8449</text>
<text x="276.26" y="531.51" font-family="Liberation Mono, monospace" font-weight="bold" font-size="5.9" fill="#ffffff" dominant-baseline="central" textLength="12.2" lengthAdjust="spacingAndGlyphs">9888</text>
<text x="291.5" y="531.51" font-family="Liberation Mono, monospace" font-weight="bold" font-size="5.9" fill="#ffffff" dominant-baseline="central" textLength="12.2" lengthAdjust="spacingAndGlyphs">1EF9</text>
<text x="306.74" y="531.51" font-family="Liberation Mono, monospace" font-weight="bold" font-size="5.9" fill="#ffffff" dominant-baseline="central" textLength="12.2" lengthAdjust="spacingAndGlyphs">8989</text>
<text x="321.98" y="531.51" font-family="Liberation Mono, monospace" font-weight="bold" font-size="5.9" fill="#ffffff" dominant-baseline="central" textLength="12.2" lengthAdjust="spacingAndGlyphs">88A3</text>
<text x="337.22" y="531.51" font-family="Liberation Mono, monospace" font-weight="bold" font-size="5.9" fill="#ffffff" dominant-baseline="central" textLength="12.2" lengthAdjust="spacingAndGlyphs">9240</text>
<text x="352.46000000000004" y="531.51" font-family="Liberation Mono, monospace" font-weight="bold" font-size="5.9" fill="#ffffff" dominant-baseline="central" textLength="12.2" lengthAdjust="spacingAndGlyphs">6AED</text>
<text x="367.70000000000005" y="531.51" font-family="Liberation Mono, monospace" font-weight="bold" font-size="5.9" fill="#ffffff" dominant-baseline="central" textLength="12.2" lengthAdjust="spacingAndGlyphs">F838</text>
<text x="382.94000000000005" y="531.51" font-family="Liberation Mono, monospace" font-weight="bold" font-size="5.9" fill="#ffffff" dominant-baseline="central" textLength="12.2" lengthAdjust="spacingAndGlyphs">6825</text>
<text x="398.18" y="531.51" font-family="Liberation Mono, monospace" font-weight="bold" font-size="5.9" fill="#ffffff" dominant-baseline="central" textLength="12.2" lengthAdjust="spacingAndGlyphs">6950</text>
<text x="413.42" y="531.51" font-family="Liberation Mono, monospace" font-weight="bold" font-size="5.9" fill="#ffffff" dominant-baseline="central" textLength="12.2" lengthAdjust="spacingAndGlyphs">C882</text>
<text x="428.66" y="531.51" font-family="Liberation Mono, monospace" font-weight="bold" font-size="5.9" fill="#ffffff" dominant-baseline="central" textLength="12.2" lengthAdjust="spacingAndGlyphs">320F</text>
<text x="443.9" y="531.51" font-family="Liberation Mono, monospace" font-weight="bold" font-size="5.9" fill="#ffffff" dominant-baseline="central" textLength="12.2" lengthAdjust="spacingAndGlyphs">8861</text>
<text x="215.3" y="537.575" font-family="Liberation Mono, monospace" font-weight="bold" font-size="5.9" fill="#ffffff" dominant-baseline="central" textLength="12.2" lengthAdjust="spacingAndGlyphs">3348</text>
<text x="230.54000000000002" y="537.575" font-family="Liberation Mono, monospace" font-weight="bold" font-size="5.9" fill="#ffffff" dominant-baseline="central" textLength="12.2" lengthAdjust="spacingAndGlyphs">3381</text>
<text x="245.78" y="537.575" font-family="Liberation Mono, monospace" font-weight="bold" font-size="5.9" fill="#ffffff" dominant-baseline="central" textLength="12.2" lengthAdjust="spacingAndGlyphs">66C1</text>
<text x="261.02" y="537.575" font-family="Liberation Mono, monospace" font-weight="bold" font-size="5.9" fill="#ffffff" dominant-baseline="central" textLength="12.2" lengthAdjust="spacingAndGlyphs">9A82</text>
<text x="276.26" y="537.575" font-family="Liberation Mono, monospace" font-weight="bold" font-size="5.9" fill="#ffffff" dominant-baseline="central" textLength="12.2" lengthAdjust="spacingAndGlyphs">8163</text>
<text x="291.5" y="537.575" font-family="Liberation Mono, monospace" font-weight="bold" font-size="5.9" fill="#ffffff" dominant-baseline="central" textLength="12.2" lengthAdjust="spacingAndGlyphs">98E5</text>
<text x="306.74" y="537.575" font-family="Liberation Mono, monospace" font-weight="bold" font-size="5.9" fill="#ffffff" dominant-baseline="central" textLength="12.2" lengthAdjust="spacingAndGlyphs">9848</text>
<text x="321.98" y="537.575" font-family="Liberation Mono, monospace" font-weight="bold" font-size="5.9" fill="#ffffff" dominant-baseline="central" textLength="12.2" lengthAdjust="spacingAndGlyphs">3920</text>
<text x="337.22" y="537.575" font-family="Liberation Mono, monospace" font-weight="bold" font-size="5.9" fill="#ffffff" dominant-baseline="central" textLength="12.2" lengthAdjust="spacingAndGlyphs">D675</text>
<text x="352.46000000000004" y="537.575" font-family="Liberation Mono, monospace" font-weight="bold" font-size="5.9" fill="#ffffff" dominant-baseline="central" textLength="12.2" lengthAdjust="spacingAndGlyphs">8FA3</text>
<text x="367.70000000000005" y="537.575" font-family="Liberation Mono, monospace" font-weight="bold" font-size="5.9" fill="#ffffff" dominant-baseline="central" textLength="12.2" lengthAdjust="spacingAndGlyphs">EA17</text>
<text x="382.94000000000005" y="537.575" font-family="Liberation Mono, monospace" font-weight="bold" font-size="5.9" fill="#ffffff" dominant-baseline="central" textLength="12.2" lengthAdjust="spacingAndGlyphs">F589</text>
<text x="398.18" y="537.575" font-family="Liberation Mono, monospace" font-weight="bold" font-size="5.9" fill="#ffffff" dominant-baseline="central" textLength="12.2" lengthAdjust="spacingAndGlyphs">D8D8</text>
<text x="413.42" y="537.575" font-family="Liberation Mono, monospace" font-weight="bold" font-size="5.9" fill="#ffffff" dominant-baseline="central" textLength="12.2" lengthAdjust="spacingAndGlyphs">8189</text>
<text x="428.66" y="537.575" font-family="Liberation Mono, monospace" font-weight="bold" font-size="5.9" fill="#ffffff" dominant-baseline="central" textLength="12.2" lengthAdjust="spacingAndGlyphs">A859</text>
<text x="443.9" y="537.575" font-family="Liberation Mono, monospace" font-weight="bold" font-size="5.9" fill="#ffffff" dominant-baseline="central" textLength="12.2" lengthAdjust="spacingAndGlyphs">7EE2</text>
<text x="215.3" y="543.64" font-family="Liberation Mono, monospace" font-weight="bold" font-size="5.9" fill="#ffffff" dominant-baseline="central" textLength="12.2" lengthAdjust="spacingAndGlyphs">2C38</text>
<text x="230.54000000000002" y="543.64" font-family="Liberation Mono, monospace" font-weight="bold" font-size="5.9" fill="#ffffff" dominant-baseline="central" textLength="12.2" lengthAdjust="spacingAndGlyphs">A818</text>
<text x="245.78" y="543.64" font-family="Liberation Mono, monospace" font-weight="bold" font-size="5.9" fill="#ffffff" dominant-baseline="central" textLength="12.2" lengthAdjust="spacingAndGlyphs">E758</text>
<text x="261.02" y="543.64" font-family="Liberation Mono, monospace" font-weight="bold" font-size="5.9" fill="#ffffff" dominant-baseline="central" textLength="12.2" lengthAdjust="spacingAndGlyphs">8275</text>
<text x="276.26" y="543.64" font-family="Liberation Mono, monospace" font-weight="bold" font-size="5.9" fill="#ffffff" dominant-baseline="central" textLength="12.2" lengthAdjust="spacingAndGlyphs">59CD</text>
<text x="291.5" y="543.64" font-family="Liberation Mono, monospace" font-weight="bold" font-size="5.9" fill="#ffffff" dominant-baseline="central" textLength="12.2" lengthAdjust="spacingAndGlyphs">DC42</text>
<text x="306.74" y="543.64" font-family="Liberation Mono, monospace" font-weight="bold" font-size="5.9" fill="#ffffff" dominant-baseline="central" textLength="12.2" lengthAdjust="spacingAndGlyphs">368F</text>
<text x="321.98" y="543.64" font-family="Liberation Mono, monospace" font-weight="bold" font-size="5.9" fill="#ffffff" dominant-baseline="central" textLength="12.2" lengthAdjust="spacingAndGlyphs">1251</text>
<text x="337.22" y="543.64" font-family="Liberation Mono, monospace" font-weight="bold" font-size="5.9" fill="#ffffff" dominant-baseline="central" textLength="12.2" lengthAdjust="spacingAndGlyphs">4868</text>
<text x="352.46000000000004" y="543.64" font-family="Liberation Mono, monospace" font-weight="bold" font-size="5.9" fill="#ffffff" dominant-baseline="central" textLength="12.2" lengthAdjust="spacingAndGlyphs">5A81</text>
<text x="367.70000000000005" y="543.64" font-family="Liberation Mono, monospace" font-weight="bold" font-size="5.9" fill="#ffffff" dominant-baseline="central" textLength="12.2" lengthAdjust="spacingAndGlyphs">8311</text>
<text x="382.94000000000005" y="543.64" font-family="Liberation Mono, monospace" font-weight="bold" font-size="5.9" fill="#ffffff" dominant-baseline="central" textLength="12.2" lengthAdjust="spacingAndGlyphs">F8C2</text>
<text x="398.18" y="543.64" font-family="Liberation Mono, monospace" font-weight="bold" font-size="5.9" fill="#ffffff" dominant-baseline="central" textLength="12.2" lengthAdjust="spacingAndGlyphs">A8D3</text>
<text x="413.42" y="543.64" font-family="Liberation Mono, monospace" font-weight="bold" font-size="5.9" fill="#ffffff" dominant-baseline="central" textLength="12.2" lengthAdjust="spacingAndGlyphs">9E95</text>
<text x="428.66" y="543.64" font-family="Liberation Mono, monospace" font-weight="bold" font-size="5.9" fill="#ffffff" dominant-baseline="central" textLength="12.2" lengthAdjust="spacingAndGlyphs">3F68</text>
<text x="443.9" y="543.64" font-family="Liberation Mono, monospace" font-weight="bold" font-size="5.9" fill="#ffffff" dominant-baseline="central" textLength="12.2" lengthAdjust="spacingAndGlyphs">D8F8</text>
<text x="215.3" y="549.705" font-family="Liberation Mono, monospace" font-weight="bold" font-size="5.9" fill="#ffffff" dominant-baseline="central" textLength="12.2" lengthAdjust="spacingAndGlyphs">1065</text>
<text x="230.54000000000002" y="549.705" font-family="Liberation Mono, monospace" font-weight="bold" font-size="5.9" fill="#ffffff" dominant-baseline="central" textLength="12.2" lengthAdjust="spacingAndGlyphs">F862</text>
<text x="245.78" y="549.705" font-family="Liberation Mono, monospace" font-weight="bold" font-size="5.9" fill="#ffffff" dominant-baseline="central" textLength="12.2" lengthAdjust="spacingAndGlyphs">18C7</text>
<text x="261.02" y="549.705" font-family="Liberation Mono, monospace" font-weight="bold" font-size="5.9" fill="#ffffff" dominant-baseline="central" textLength="12.2" lengthAdjust="spacingAndGlyphs">1429</text>
<text x="276.26" y="549.705" font-family="Liberation Mono, monospace" font-weight="bold" font-size="5.9" fill="#ffffff" dominant-baseline="central" textLength="12.2" lengthAdjust="spacingAndGlyphs">DCF8</text>
<text x="291.5" y="549.705" font-family="Liberation Mono, monospace" font-weight="bold" font-size="5.9" fill="#ffffff" dominant-baseline="central" textLength="12.2" lengthAdjust="spacingAndGlyphs">4119</text>
<text x="306.74" y="549.705" font-family="Liberation Mono, monospace" font-weight="bold" font-size="5.9" fill="#ffffff" dominant-baseline="central" textLength="12.2" lengthAdjust="spacingAndGlyphs">6C89</text>
<text x="321.98" y="549.705" font-family="Liberation Mono, monospace" font-weight="bold" font-size="5.9" fill="#ffffff" dominant-baseline="central" textLength="12.2" lengthAdjust="spacingAndGlyphs">8F33</text>
<text x="337.22" y="549.705" font-family="Liberation Mono, monospace" font-weight="bold" font-size="5.9" fill="#ffffff" dominant-baseline="central" textLength="12.2" lengthAdjust="spacingAndGlyphs">1D88</text>
<text x="352.46000000000004" y="549.705" font-family="Liberation Mono, monospace" font-weight="bold" font-size="5.9" fill="#ffffff" dominant-baseline="central" textLength="12.2" lengthAdjust="spacingAndGlyphs">CC48</text>
<text x="367.70000000000005" y="549.705" font-family="Liberation Mono, monospace" font-weight="bold" font-size="5.9" fill="#ffffff" dominant-baseline="central" textLength="12.2" lengthAdjust="spacingAndGlyphs">E978</text>
<text x="382.94000000000005" y="549.705" font-family="Liberation Mono, monospace" font-weight="bold" font-size="5.9" fill="#ffffff" dominant-baseline="central" textLength="12.2" lengthAdjust="spacingAndGlyphs">85C5</text>
<text x="398.18" y="549.705" font-family="Liberation Mono, monospace" font-weight="bold" font-size="5.9" fill="#ffffff" dominant-baseline="central" textLength="12.2" lengthAdjust="spacingAndGlyphs">9F3D</text>
<text x="413.42" y="549.705" font-family="Liberation Mono, monospace" font-weight="bold" font-size="5.9" fill="#ffffff" dominant-baseline="central" textLength="12.2" lengthAdjust="spacingAndGlyphs">6582</text>
<text x="428.66" y="549.705" font-family="Liberation Mono, monospace" font-weight="bold" font-size="5.9" fill="#ffffff" dominant-baseline="central" textLength="12.2" lengthAdjust="spacingAndGlyphs">F43F</text>
<text x="443.9" y="549.705" font-family="Liberation Mono, monospace" font-weight="bold" font-size="5.9" fill="#ffffff" dominant-baseline="central" textLength="12.2" lengthAdjust="spacingAndGlyphs">4941</text>
<text x="215.3" y="555.77" font-family="Liberation Mono, monospace" font-weight="bold" font-size="5.9" fill="#ffffff" dominant-baseline="central" textLength="12.2" lengthAdjust="spacingAndGlyphs">3D88</text>
<text x="230.54000000000002" y="555.77" font-family="Liberation Mono, monospace" font-weight="bold" font-size="5.9" fill="#ffffff" dominant-baseline="central" textLength="12.2" lengthAdjust="spacingAndGlyphs">86C1</text>
<text x="245.78" y="555.77" font-family="Liberation Mono, monospace" font-weight="bold" font-size="5.9" fill="#ffffff" dominant-baseline="central" textLength="12.2" lengthAdjust="spacingAndGlyphs">C441</text>
<text x="261.02" y="555.77" font-family="Liberation Mono, monospace" font-weight="bold" font-size="5.9" fill="#ffffff" dominant-baseline="central" textLength="12.2" lengthAdjust="spacingAndGlyphs">4882</text>
<text x="276.26" y="555.77" font-family="Liberation Mono, monospace" font-weight="bold" font-size="5.9" fill="#ffffff" dominant-baseline="central" textLength="12.2" lengthAdjust="spacingAndGlyphs">8F43</text>
<text x="291.5" y="555.77" font-family="Liberation Mono, monospace" font-weight="bold" font-size="5.9" fill="#ffffff" dominant-baseline="central" textLength="12.2" lengthAdjust="spacingAndGlyphs">5A45</text>
<text x="306.74" y="555.77" font-family="Liberation Mono, monospace" font-weight="bold" font-size="5.9" fill="#ffffff" dominant-baseline="central" textLength="12.2" lengthAdjust="spacingAndGlyphs">6388</text>
<text x="321.98" y="555.77" font-family="Liberation Mono, monospace" font-weight="bold" font-size="5.9" fill="#ffffff" dominant-baseline="central" textLength="12.2" lengthAdjust="spacingAndGlyphs">C3C8</text>
<text x="337.22" y="555.77" font-family="Liberation Mono, monospace" font-weight="bold" font-size="5.9" fill="#ffffff" dominant-baseline="central" textLength="12.2" lengthAdjust="spacingAndGlyphs">1D55</text>
<text x="352.46000000000004" y="555.77" font-family="Liberation Mono, monospace" font-weight="bold" font-size="5.9" fill="#ffffff" dominant-baseline="central" textLength="12.2" lengthAdjust="spacingAndGlyphs">F133</text>
<text x="367.70000000000005" y="555.77" font-family="Liberation Mono, monospace" font-weight="bold" font-size="5.9" fill="#ffffff" dominant-baseline="central" textLength="12.2" lengthAdjust="spacingAndGlyphs">1E77</text>
<text x="382.94000000000005" y="555.77" font-family="Liberation Mono, monospace" font-weight="bold" font-size="5.9" fill="#ffffff" dominant-baseline="central" textLength="12.2" lengthAdjust="spacingAndGlyphs">8F89</text>
<text x="398.18" y="555.77" font-family="Liberation Mono, monospace" font-weight="bold" font-size="5.9" fill="#ffffff" dominant-baseline="central" textLength="12.2" lengthAdjust="spacingAndGlyphs">9C18</text>
<text x="413.42" y="555.77" font-family="Liberation Mono, monospace" font-weight="bold" font-size="5.9" fill="#ffffff" dominant-baseline="central" textLength="12.2" lengthAdjust="spacingAndGlyphs">3389</text>
<text x="428.66" y="555.77" font-family="Liberation Mono, monospace" font-weight="bold" font-size="5.9" fill="#ffffff" dominant-baseline="central" textLength="12.2" lengthAdjust="spacingAndGlyphs">6889</text>
<text x="443.9" y="555.77" font-family="Liberation Mono, monospace" font-weight="bold" font-size="5.9" fill="#ffffff" dominant-baseline="central" textLength="12.2" lengthAdjust="spacingAndGlyphs">8963</text>
<text x="215.3" y="561.835" font-family="Liberation Mono, monospace" font-weight="bold" font-size="5.9" fill="#ffffff" dominant-baseline="central" textLength="12.2" lengthAdjust="spacingAndGlyphs">1516</text>
<text x="230.54000000000002" y="561.835" font-family="Liberation Mono, monospace" font-weight="bold" font-size="5.9" fill="#ffffff" dominant-baseline="central" textLength="12.2" lengthAdjust="spacingAndGlyphs">8E78</text>
<text x="245.78" y="561.835" font-family="Liberation Mono, monospace" font-weight="bold" font-size="5.9" fill="#ffffff" dominant-baseline="central" textLength="12.2" lengthAdjust="spacingAndGlyphs">8398</text>
<text x="261.02" y="561.835" font-family="Liberation Mono, monospace" font-weight="bold" font-size="5.9" fill="#ffffff" dominant-baseline="central" textLength="12.2" lengthAdjust="spacingAndGlyphs">9216</text>
<text x="276.26" y="561.835" font-family="Liberation Mono, monospace" font-weight="bold" font-size="5.9" fill="#ffffff" dominant-baseline="central" textLength="12.2" lengthAdjust="spacingAndGlyphs">6AAD</text>
<text x="291.5" y="561.835" font-family="Liberation Mono, monospace" font-weight="bold" font-size="5.9" fill="#ffffff" dominant-baseline="central" textLength="12.2" lengthAdjust="spacingAndGlyphs">F7C3</text>
<text x="306.74" y="561.835" font-family="Liberation Mono, monospace" font-weight="bold" font-size="5.9" fill="#ffffff" dominant-baseline="central" textLength="12.2" lengthAdjust="spacingAndGlyphs">586F</text>
<text x="321.98" y="561.835" font-family="Liberation Mono, monospace" font-weight="bold" font-size="5.9" fill="#ffffff" dominant-baseline="central" textLength="12.2" lengthAdjust="spacingAndGlyphs">5531</text>
<text x="337.22" y="561.835" font-family="Liberation Mono, monospace" font-weight="bold" font-size="5.9" fill="#ffffff" dominant-baseline="central" textLength="12.2" lengthAdjust="spacingAndGlyphs">83A8</text>
<text x="352.46000000000004" y="561.835" font-family="Liberation Mono, monospace" font-weight="bold" font-size="5.9" fill="#ffffff" dominant-baseline="central" textLength="12.2" lengthAdjust="spacingAndGlyphs">8781</text>
<text x="367.70000000000005" y="561.835" font-family="Liberation Mono, monospace" font-weight="bold" font-size="5.9" fill="#ffffff" dominant-baseline="central" textLength="12.2" lengthAdjust="spacingAndGlyphs">8A71</text>
<text x="382.94000000000005" y="561.835" font-family="Liberation Mono, monospace" font-weight="bold" font-size="5.9" fill="#ffffff" dominant-baseline="central" textLength="12.2" lengthAdjust="spacingAndGlyphs">C342</text>
<text x="398.18" y="561.835" font-family="Liberation Mono, monospace" font-weight="bold" font-size="5.9" fill="#ffffff" dominant-baseline="central" textLength="12.2" lengthAdjust="spacingAndGlyphs">7C83</text>
<text x="413.42" y="561.835" font-family="Liberation Mono, monospace" font-weight="bold" font-size="5.9" fill="#ffffff" dominant-baseline="central" textLength="12.2" lengthAdjust="spacingAndGlyphs">3175</text>
<text x="428.66" y="561.835" font-family="Liberation Mono, monospace" font-weight="bold" font-size="5.9" fill="#ffffff" dominant-baseline="central" textLength="12.2" lengthAdjust="spacingAndGlyphs">88A8</text>
<text x="443.9" y="561.835" font-family="Liberation Mono, monospace" font-weight="bold" font-size="5.9" fill="#ffffff" dominant-baseline="central" textLength="12.2" lengthAdjust="spacingAndGlyphs">FA98</text>
<text x="215.3" y="567.9000000000001" font-family="Liberation Mono, monospace" font-weight="bold" font-size="5.9" fill="#ffffff" dominant-baseline="central" textLength="12.2" lengthAdjust="spacingAndGlyphs">8A45</text>
<text x="230.54000000000002" y="567.9000000000001" font-family="Liberation Mono, monospace" font-weight="bold" font-size="5.9" fill="#ffffff" dominant-baseline="central" textLength="12.2" lengthAdjust="spacingAndGlyphs">88E3</text>
<text x="245.78" y="567.9000000000001" font-family="Liberation Mono, monospace" font-weight="bold" font-size="5.9" fill="#ffffff" dominant-baseline="central" textLength="12.2" lengthAdjust="spacingAndGlyphs">6737</text>
<text x="261.02" y="567.9000000000001" font-family="Liberation Mono, monospace" font-weight="bold" font-size="5.9" fill="#ffffff" dominant-baseline="central" textLength="12.2" lengthAdjust="spacingAndGlyphs">1889</text>
<text x="276.26" y="567.9000000000001" font-family="Liberation Mono, monospace" font-weight="bold" font-size="5.9" fill="#ffffff" dominant-baseline="central" textLength="12.2" lengthAdjust="spacingAndGlyphs">7F38</text>
<text x="291.5" y="567.9000000000001" font-family="Liberation Mono, monospace" font-weight="bold" font-size="5.9" fill="#ffffff" dominant-baseline="central" textLength="12.2" lengthAdjust="spacingAndGlyphs">9739</text>
<text x="306.74" y="567.9000000000001" font-family="Liberation Mono, monospace" font-weight="bold" font-size="5.9" fill="#ffffff" dominant-baseline="central" textLength="12.2" lengthAdjust="spacingAndGlyphs">1663</text>
<text x="321.98" y="567.9000000000001" font-family="Liberation Mono, monospace" font-weight="bold" font-size="5.9" fill="#ffffff" dominant-baseline="central" textLength="12.2" lengthAdjust="spacingAndGlyphs">A8A3</text>
<text x="337.22" y="567.9000000000001" font-family="Liberation Mono, monospace" font-weight="bold" font-size="5.9" fill="#ffffff" dominant-baseline="central" textLength="12.2" lengthAdjust="spacingAndGlyphs">C488</text>
<text x="352.46000000000004" y="567.9000000000001" font-family="Liberation Mono, monospace" font-weight="bold" font-size="5.9" fill="#ffffff" dominant-baseline="central" textLength="12.2" lengthAdjust="spacingAndGlyphs">71A8</text>
<text x="367.70000000000005" y="567.9000000000001" font-family="Liberation Mono, monospace" font-weight="bold" font-size="5.9" fill="#ffffff" dominant-baseline="central" textLength="12.2" lengthAdjust="spacingAndGlyphs">3588</text>
<text x="382.94000000000005" y="567.9000000000001" font-family="Liberation Mono, monospace" font-weight="bold" font-size="5.9" fill="#ffffff" dominant-baseline="central" textLength="12.2" lengthAdjust="spacingAndGlyphs">A765</text>
<text x="398.18" y="567.9000000000001" font-family="Liberation Mono, monospace" font-weight="bold" font-size="5.9" fill="#ffffff" dominant-baseline="central" textLength="12.2" lengthAdjust="spacingAndGlyphs">D818</text>
<text x="413.42" y="567.9000000000001" font-family="Liberation Mono, monospace" font-weight="bold" font-size="5.9" fill="#ffffff" dominant-baseline="central" textLength="12.2" lengthAdjust="spacingAndGlyphs">8483</text>
<text x="428.66" y="567.9000000000001" font-family="Liberation Mono, monospace" font-weight="bold" font-size="5.9" fill="#ffffff" dominant-baseline="central" textLength="12.2" lengthAdjust="spacingAndGlyphs">619F</text>
<text x="443.9" y="567.9000000000001" font-family="Liberation Mono, monospace" font-weight="bold" font-size="5.9" fill="#ffffff" dominant-baseline="central" textLength="12.2" lengthAdjust="spacingAndGlyphs">E621</text>
<text x="215.3" y="573.965" font-family="Liberation Mono, monospace" font-weight="bold" font-size="5.9" fill="#ffffff" dominant-baseline="central" textLength="12.2" lengthAdjust="spacingAndGlyphs">47C8</text>
<text x="230.54000000000002" y="573.965" font-family="Liberation Mono, monospace" font-weight="bold" font-size="5.9" fill="#ffffff" dominant-baseline="central" textLength="12.2" lengthAdjust="spacingAndGlyphs">2BE1</text>
<text x="245.78" y="573.965" font-family="Liberation Mono, monospace" font-weight="bold" font-size="5.9" fill="#ffffff" dominant-baseline="central" textLength="12.2" lengthAdjust="spacingAndGlyphs">7581</text>
<text x="261.02" y="573.965" font-family="Liberation Mono, monospace" font-weight="bold" font-size="5.9" fill="#ffffff" dominant-baseline="central" textLength="12.2" lengthAdjust="spacingAndGlyphs">A3B2</text>
<text x="276.26" y="573.965" font-family="Liberation Mono, monospace" font-weight="bold" font-size="5.9" fill="#ffffff" dominant-baseline="central" textLength="12.2" lengthAdjust="spacingAndGlyphs">1923</text>
<text x="291.5" y="573.965" font-family="Liberation Mono, monospace" font-weight="bold" font-size="5.9" fill="#ffffff" dominant-baseline="central" textLength="12.2" lengthAdjust="spacingAndGlyphs">8CA5</text>
<text x="306.74" y="573.965" font-family="Liberation Mono, monospace" font-weight="bold" font-size="5.9" fill="#ffffff" dominant-baseline="central" textLength="12.2" lengthAdjust="spacingAndGlyphs">85C8</text>
<text x="321.98" y="573.965" font-family="Liberation Mono, monospace" font-weight="bold" font-size="5.9" fill="#ffffff" dominant-baseline="central" textLength="12.2" lengthAdjust="spacingAndGlyphs">9248</text>
<text x="337.22" y="573.965" font-family="Liberation Mono, monospace" font-weight="bold" font-size="5.9" fill="#ffffff" dominant-baseline="central" textLength="12.2" lengthAdjust="spacingAndGlyphs">6835</text>
<text x="352.46000000000004" y="573.965" font-family="Liberation Mono, monospace" font-weight="bold" font-size="5.9" fill="#ffffff" dominant-baseline="central" textLength="12.2" lengthAdjust="spacingAndGlyphs">FAA3</text>
<text x="367.70000000000005" y="573.965" font-family="Liberation Mono, monospace" font-weight="bold" font-size="5.9" fill="#ffffff" dominant-baseline="central" textLength="12.2" lengthAdjust="spacingAndGlyphs">6287</text>
<text x="382.94000000000005" y="573.965" font-family="Liberation Mono, monospace" font-weight="bold" font-size="5.9" fill="#ffffff" dominant-baseline="central" textLength="12.2" lengthAdjust="spacingAndGlyphs">5879</text>
<text x="398.18" y="573.965" font-family="Liberation Mono, monospace" font-weight="bold" font-size="5.9" fill="#ffffff" dominant-baseline="central" textLength="12.2" lengthAdjust="spacingAndGlyphs">C858</text>
<text x="413.42" y="573.965" font-family="Liberation Mono, monospace" font-weight="bold" font-size="5.9" fill="#ffffff" dominant-baseline="central" textLength="12.2" lengthAdjust="spacingAndGlyphs">18C9</text>
<text x="428.66" y="573.965" font-family="Liberation Mono, monospace" font-weight="bold" font-size="5.9" fill="#ffffff" dominant-baseline="central" textLength="12.2" lengthAdjust="spacingAndGlyphs">8E19</text>
<text x="443.9" y="573.965" font-family="Liberation Mono, monospace" font-weight="bold" font-size="5.9" fill="#ffffff" dominant-baseline="central" textLength="12.2" lengthAdjust="spacingAndGlyphs">F8E2</text>
<text x="215.3" y="580.03" font-family="Liberation Mono, monospace" font-weight="bold" font-size="5.9" fill="#ffffff" dominant-baseline="central" textLength="12.2" lengthAdjust="spacingAndGlyphs">09F8</text>
<text x="230.54000000000002" y="580.03" font-family="Liberation Mono, monospace" font-weight="bold" font-size="5.9" fill="#ffffff" dominant-baseline="central" textLength="12.2" lengthAdjust="spacingAndGlyphs">2538</text>
<text x="245.78" y="580.03" font-family="Liberation Mono, monospace" font-weight="bold" font-size="5.9" fill="#ffffff" dominant-baseline="central" textLength="12.2" lengthAdjust="spacingAndGlyphs">AF88</text>
<text x="261.02" y="580.03" font-family="Liberation Mono, monospace" font-weight="bold" font-size="5.9" fill="#ffffff" dominant-baseline="central" textLength="12.2" lengthAdjust="spacingAndGlyphs">8585</text>
<text x="276.26" y="580.03" font-family="Liberation Mono, monospace" font-weight="bold" font-size="5.9" fill="#ffffff" dominant-baseline="central" textLength="12.2" lengthAdjust="spacingAndGlyphs">3588</text>
<text x="291.5" y="580.03" font-family="Liberation Mono, monospace" font-weight="bold" font-size="5.9" fill="#ffffff" dominant-baseline="central" textLength="12.2" lengthAdjust="spacingAndGlyphs">8842</text>
<text x="306.74" y="580.03" font-family="Liberation Mono, monospace" font-weight="bold" font-size="5.9" fill="#ffffff" dominant-baseline="central" textLength="12.2" lengthAdjust="spacingAndGlyphs">F8CF</text>
<text x="321.98" y="580.03" font-family="Liberation Mono, monospace" font-weight="bold" font-size="5.9" fill="#ffffff" dominant-baseline="central" textLength="12.2" lengthAdjust="spacingAndGlyphs">8C11</text>
<text x="337.22" y="580.03" font-family="Liberation Mono, monospace" font-weight="bold" font-size="5.9" fill="#ffffff" dominant-baseline="central" textLength="12.2" lengthAdjust="spacingAndGlyphs">9CE8</text>
<text x="352.46000000000004" y="580.03" font-family="Liberation Mono, monospace" font-weight="bold" font-size="5.9" fill="#ffffff" dominant-baseline="central" textLength="12.2" lengthAdjust="spacingAndGlyphs">48F1</text>
<text x="367.70000000000005" y="580.03" font-family="Liberation Mono, monospace" font-weight="bold" font-size="5.9" fill="#ffffff" dominant-baseline="central" textLength="12.2" lengthAdjust="spacingAndGlyphs">E581</text>
<text x="382.94000000000005" y="580.03" font-family="Liberation Mono, monospace" font-weight="bold" font-size="5.9" fill="#ffffff" dominant-baseline="central" textLength="12.2" lengthAdjust="spacingAndGlyphs">3EC2</text>
<text x="398.18" y="580.03" font-family="Liberation Mono, monospace" font-weight="bold" font-size="5.9" fill="#ffffff" dominant-baseline="central" textLength="12.2" lengthAdjust="spacingAndGlyphs">1493</text>
<text x="413.42" y="580.03" font-family="Liberation Mono, monospace" font-weight="bold" font-size="5.9" fill="#ffffff" dominant-baseline="central" textLength="12.2" lengthAdjust="spacingAndGlyphs">4355</text>
<text x="428.66" y="580.03" font-family="Liberation Mono, monospace" font-weight="bold" font-size="5.9" fill="#ffffff" dominant-baseline="central" textLength="12.2" lengthAdjust="spacingAndGlyphs">57E8</text>
<text x="443.9" y="580.03" font-family="Liberation Mono, monospace" font-weight="bold" font-size="5.9" fill="#ffffff" dominant-baseline="central" textLength="12.2" lengthAdjust="spacingAndGlyphs">9838</text>
<text x="215.3" y="586.095" font-family="Liberation Mono, monospace" font-weight="bold" font-size="5.9" fill="#ffffff" dominant-baseline="central" textLength="12.2" lengthAdjust="spacingAndGlyphs">F325</text>
<text x="230.54000000000002" y="586.095" font-family="Liberation Mono, monospace" font-weight="bold" font-size="5.9" fill="#ffffff" dominant-baseline="central" textLength="12.2" lengthAdjust="spacingAndGlyphs">8E42</text>
<text x="245.78" y="586.095" font-family="Liberation Mono, monospace" font-weight="bold" font-size="5.9" fill="#ffffff" dominant-baseline="central" textLength="12.2" lengthAdjust="spacingAndGlyphs">8187</text>
<text x="261.02" y="586.095" font-family="Liberation Mono, monospace" font-weight="bold" font-size="5.9" fill="#ffffff" dominant-baseline="central" textLength="12.2" lengthAdjust="spacingAndGlyphs">8FC9</text>
<text x="276.26" y="586.095" font-family="Liberation Mono, monospace" font-weight="bold" font-size="5.9" fill="#ffffff" dominant-baseline="central" textLength="12.2" lengthAdjust="spacingAndGlyphs">9178</text>
<text x="291.5" y="586.095" font-family="Liberation Mono, monospace" font-weight="bold" font-size="5.9" fill="#ffffff" dominant-baseline="central" textLength="12.2" lengthAdjust="spacingAndGlyphs">A159</text>
<text x="306.74" y="586.095" font-family="Liberation Mono, monospace" font-weight="bold" font-size="5.9" fill="#ffffff" dominant-baseline="central" textLength="12.2" lengthAdjust="spacingAndGlyphs">33C9</text>
<text x="321.98" y="586.095" font-family="Liberation Mono, monospace" font-weight="bold" font-size="5.9" fill="#ffffff" dominant-baseline="central" textLength="12.2" lengthAdjust="spacingAndGlyphs">8422</text>
<text x="337.22" y="586.095" font-family="Liberation Mono, monospace" font-weight="bold" font-size="5.9" fill="#ffffff" dominant-baseline="central" textLength="12.2" lengthAdjust="spacingAndGlyphs">84E8</text>
<text x="352.46000000000004" y="586.095" font-family="Liberation Mono, monospace" font-weight="bold" font-size="5.9" fill="#ffffff" dominant-baseline="central" textLength="12.2" lengthAdjust="spacingAndGlyphs">D8B8</text>
<text x="367.70000000000005" y="586.095" font-family="Liberation Mono, monospace" font-weight="bold" font-size="5.9" fill="#ffffff" dominant-baseline="central" textLength="12.2" lengthAdjust="spacingAndGlyphs">E1F8</text>
<text x="382.94000000000005" y="586.095" font-family="Liberation Mono, monospace" font-weight="bold" font-size="5.9" fill="#ffffff" dominant-baseline="central" textLength="12.2" lengthAdjust="spacingAndGlyphs">8885</text>
<text x="398.18" y="586.095" font-family="Liberation Mono, monospace" font-weight="bold" font-size="5.9" fill="#ffffff" dominant-baseline="central" textLength="12.2" lengthAdjust="spacingAndGlyphs">9CF8</text>
<text x="413.42" y="586.095" font-family="Liberation Mono, monospace" font-weight="bold" font-size="5.9" fill="#ffffff" dominant-baseline="central" textLength="12.2" lengthAdjust="spacingAndGlyphs">5C82</text>
<text x="428.66" y="586.095" font-family="Liberation Mono, monospace" font-weight="bold" font-size="5.9" fill="#ffffff" dominant-baseline="central" textLength="12.2" lengthAdjust="spacingAndGlyphs">F8F7</text>
<text x="443.9" y="586.095" font-family="Liberation Mono, monospace" font-weight="bold" font-size="5.9" fill="#ffffff" dominant-baseline="central" textLength="12.2" lengthAdjust="spacingAndGlyphs">5781</text>
<circle cx="210.5" cy="445" r="2.8" fill="#e06080"/>
<circle cx="454" cy="435.5" r="6.2" fill="#e04a58"/><rect x="451.2" y="432.5" width="5.6" height="6" fill="none" stroke="#fbe0e0" stroke-width="0.9"/><path d="M451.2,434.5 h5.6 M451.2,436.5 h5.6" stroke="#fbe0e0" stroke-width="0.7"/>
<rect x="-2" y="506.5" width="78.5" height="161.3" fill="#1e5c9c"/>
<rect x="0" y="508" width="74" height="145.6" fill="#111316"/>
<circle cx="353.5" cy="304.5" r="9.5" fill="#e0505a"/><rect x="349" y="300" width="9" height="9" fill="none" stroke="#f8e0e0" stroke-width="1.2"/><path d="M349,303 h9 M349,306 h9" stroke="#f8e0e0" stroke-width="1"/>
<circle cx="374.5" cy="304.5" r="9.5" fill="#e8a040"/><path d="M370,309 L379,300" stroke="#fbe6c0" stroke-width="2.2" stroke-linecap="round"/>
<text x="431" y="72" font-family="Liberation Mono, monospace" font-weight="bold" font-size="8.2" fill="#f4f0e6" stroke="#2a2a2a" stroke-width="0.8" stroke-opacity="0.6" paint-order="stroke" text-anchor="middle" dominant-baseline="central">State</text>
<text x="540" y="72" font-family="Liberation Mono, monospace" font-weight="bold" font-size="8.2" fill="#f4f0e6" stroke="#2a2a2a" stroke-width="0.8" stroke-opacity="0.6" paint-order="stroke" text-anchor="middle" dominant-baseline="central">1st Read</text>
<text x="540" y="80" font-family="Liberation Mono, monospace" font-weight="bold" font-size="8.2" fill="#f4f0e6" stroke="#2a2a2a" stroke-width="0.8" stroke-opacity="0.6" paint-order="stroke" text-anchor="middle" dominant-baseline="central">2nd Read</text>
<text x="540" y="87" font-family="Liberation Mono, monospace" font-weight="bold" font-size="8.2" fill="#f4f0e6" stroke="#2a2a2a" stroke-width="0.8" stroke-opacity="0.6" paint-order="stroke" text-anchor="middle" dominant-baseline="central">Write</text>
<text x="416" y="178.3" font-family="Liberation Mono, monospace" font-weight="bold" font-size="8.2" fill="#f4f0e6" stroke="#2a2a2a" stroke-width="0.8" stroke-opacity="0.6" paint-order="stroke" text-anchor="middle" dominant-baseline="central">Unknown?</text>
<text x="740" y="179" font-family="Liberation Mono, monospace" font-weight="bold" font-size="8.2" fill="#f4f0e6" stroke="#2a2a2a" stroke-width="0.8" stroke-opacity="0.6" paint-order="stroke" text-anchor="middle" dominant-baseline="central">Read?</text>
<text x="655" y="285" font-family="Liberation Mono, monospace" font-weight="bold" font-size="8.2" fill="#f4f0e6" stroke="#2a2a2a" stroke-width="0.8" stroke-opacity="0.6" paint-order="stroke" text-anchor="middle" dominant-baseline="central">Write?</text>
<text x="697" y="293" font-family="Liberation Mono, monospace" font-weight="bold" font-size="8.2" fill="#f4f0e6" stroke="#2a2a2a" stroke-width="0.8" stroke-opacity="0.6" paint-order="stroke" text-anchor="middle" dominant-baseline="central">Carry</text>
<text x="749" y="331" font-family="Liberation Mono, monospace" font-weight="bold" font-size="8.2" fill="#f4f0e6" stroke="#2a2a2a" stroke-width="0.8" stroke-opacity="0.6" paint-order="stroke" text-anchor="middle" dominant-baseline="central">Adds</text>
<text x="1064" y="285" font-family="Liberation Mono, monospace" font-weight="bold" font-size="8.2" fill="#f4f0e6" stroke="#2a2a2a" stroke-width="0.8" stroke-opacity="0.6" paint-order="stroke" text-anchor="middle" dominant-baseline="central">Calculation Enable</text>
<text x="1240" y="270" font-family="Liberation Mono, monospace" font-weight="bold" font-size="8.2" fill="#f4f0e6" stroke="#2a2a2a" stroke-width="0.8" stroke-opacity="0.6" paint-order="stroke" text-anchor="middle" dominant-baseline="central">Unknown</text>
<text x="545" y="606" font-family="Liberation Mono, monospace" font-weight="bold" font-size="8.2" fill="#f4f0e6" stroke="#2a2a2a" stroke-width="0.8" stroke-opacity="0.6" paint-order="stroke" text-anchor="middle" dominant-baseline="central">J/C/R Addr.</text>
<text x="1027" y="681.25" font-family="Liberation Mono, monospace" font-weight="bold" font-size="8.2" fill="#f4f0e6" stroke="#2a2a2a" stroke-width="0.8" stroke-opacity="0.6" paint-order="stroke" text-anchor="middle" dominant-baseline="central">Video RAM</text>
<text x="1026" y="688.75" font-family="Liberation Mono, monospace" font-weight="bold" font-size="8.2" fill="#f4f0e6" stroke="#2a2a2a" stroke-width="0.8" stroke-opacity="0.6" paint-order="stroke" text-anchor="middle" dominant-baseline="central">RAM 0x8002 → VRAM 0x00</text>
<text x="448" y="254.8" font-family="Liberation Mono, monospace" font-weight="bold" font-size="8.2" fill="#eef4ee" stroke="#2a2a2a" stroke-width="0.8" stroke-opacity="0.5" paint-order="stroke" text-anchor="middle" dominant-baseline="central">49152</text>
<text x="725" y="254.8" font-family="Liberation Mono, monospace" font-weight="bold" font-size="8.2" fill="#eef4ee" stroke="#2a2a2a" stroke-width="0.8" stroke-opacity="0.5" paint-order="stroke" text-anchor="middle" dominant-baseline="central">49152</text>
<text x="934" y="254.8" font-family="Liberation Mono, monospace" font-weight="bold" font-size="8.2" fill="#eef4ee" stroke="#2a2a2a" stroke-width="0.8" stroke-opacity="0.5" paint-order="stroke" text-anchor="middle" dominant-baseline="central">49152</text>
<text x="1153" y="254.8" font-family="Liberation Mono, monospace" font-weight="bold" font-size="8.2" fill="#eef4ee" stroke="#2a2a2a" stroke-width="0.8" stroke-opacity="0.5" paint-order="stroke" text-anchor="middle" dominant-baseline="central">49152</text>
<text x="415" y="285" font-family="Liberation Mono, monospace" font-weight="bold" font-size="8.2" fill="#eef4ee" stroke="#2a2a2a" stroke-width="0.8" stroke-opacity="0.5" paint-order="stroke" text-anchor="middle" dominant-baseline="central">49152</text>
<text x="469" y="323.6" font-family="Liberation Mono, monospace" font-weight="bold" font-size="8.2" fill="#eef4ee" stroke="#2a2a2a" stroke-width="0.8" stroke-opacity="0.5" paint-order="stroke" text-anchor="middle" dominant-baseline="central">32768</text>
<text x="461" y="331.4" font-family="Liberation Mono, monospace" font-weight="bold" font-size="8.2" fill="#eef4ee" stroke="#2a2a2a" stroke-width="0.8" stroke-opacity="0.5" paint-order="stroke" text-anchor="middle" dominant-baseline="central">0</text>
<text x="431" y="338.75" font-family="Liberation Mono, monospace" font-weight="bold" font-size="8.2" fill="#eef4ee" stroke="#2a2a2a" stroke-width="0.8" stroke-opacity="0.5" paint-order="stroke" text-anchor="middle" dominant-baseline="central">1</text>
<text x="841" y="292.8" font-family="Liberation Mono, monospace" font-weight="bold" font-size="8.2" fill="#eef4ee" stroke="#2a2a2a" stroke-width="0.8" stroke-opacity="0.5" paint-order="stroke" text-anchor="middle" dominant-baseline="central">32768</text>
<text x="1073" y="292.8" font-family="Liberation Mono, monospace" font-weight="bold" font-size="8.2" fill="#eef4ee" stroke="#2a2a2a" stroke-width="0.8" stroke-opacity="0.5" paint-order="stroke" text-anchor="middle" dominant-baseline="central">32768</text>
<text x="1171" y="315.6" font-family="Liberation Mono, monospace" font-weight="bold" font-size="8.2" fill="#eef4ee" stroke="#2a2a2a" stroke-width="0.8" stroke-opacity="0.5" paint-order="stroke" text-anchor="middle" dominant-baseline="central">32768</text>
<text x="1243" y="277.6" font-family="Liberation Mono, monospace" font-weight="bold" font-size="8.2" fill="#eef4ee" stroke="#2a2a2a" stroke-width="0.8" stroke-opacity="0.5" paint-order="stroke" text-anchor="middle" dominant-baseline="central">49152</text>
<text x="1266" y="277.6" font-family="Liberation Mono, monospace" font-weight="bold" font-size="8.2" fill="#eef4ee" stroke="#2a2a2a" stroke-width="0.8" stroke-opacity="0.5" paint-order="stroke" text-anchor="middle" dominant-baseline="central">Opcode</text>
<text x="1240" y="315.6" font-family="Liberation Mono, monospace" font-weight="bold" font-size="8.2" fill="#eef4ee" stroke="#2a2a2a" stroke-width="0.8" stroke-opacity="0.5" paint-order="stroke" text-anchor="middle" dominant-baseline="central">32768</text>
<text x="1266" y="315.6" font-family="Liberation Mono, monospace" font-weight="bold" font-size="8.2" fill="#eef4ee" stroke="#2a2a2a" stroke-width="0.8" stroke-opacity="0.5" paint-order="stroke" text-anchor="middle" dominant-baseline="central">2nd Value</text>
<text x="1215" y="345" font-family="Liberation Mono, monospace" font-weight="bold" font-size="8.2" fill="#eef4ee" stroke="#2a2a2a" stroke-width="0.8" stroke-opacity="0.5" paint-order="stroke" text-anchor="middle" dominant-baseline="central">32768</text>
<text x="1215" y="414" font-family="Liberation Mono, monospace" font-weight="bold" font-size="8.2" fill="#eef4ee" stroke="#2a2a2a" stroke-width="0.8" stroke-opacity="0.5" paint-order="stroke" text-anchor="middle" dominant-baseline="central">32768</text>
<text x="1200" y="459" font-family="Liberation Mono, monospace" font-weight="bold" font-size="8.2" fill="#eef4ee" stroke="#2a2a2a" stroke-width="0.8" stroke-opacity="0.5" paint-order="stroke" text-anchor="middle" dominant-baseline="central">32768</text>
<text x="1200" y="635" font-family="Liberation Mono, monospace" font-weight="bold" font-size="8.2" fill="#eef4ee" stroke="#2a2a2a" stroke-width="0.8" stroke-opacity="0.5" paint-order="stroke" text-anchor="middle" dominant-baseline="central">32768</text>
<text x="858" y="559" font-family="Liberation Mono, monospace" font-weight="bold" font-size="8.2" fill="#eef4ee" stroke="#2a2a2a" stroke-width="0.8" stroke-opacity="0.5" paint-order="stroke" text-anchor="middle" dominant-baseline="central">0</text>
<text x="907.5" y="575" font-family="Liberation Mono, monospace" font-weight="bold" font-size="8.2" fill="#eef4ee" stroke="#2a2a2a" stroke-width="0.8" stroke-opacity="0.5" paint-order="stroke" text-anchor="middle" dominant-baseline="central">0</text>
<text x="739" y="575" font-family="Liberation Mono, monospace" font-weight="bold" font-size="8.2" fill="#eef4ee" stroke="#2a2a2a" stroke-width="0.8" stroke-opacity="0.5" paint-order="stroke" text-anchor="middle" dominant-baseline="central">0</text>
<text x="831" y="597.5" font-family="Liberation Mono, monospace" font-weight="bold" font-size="8.2" fill="#eef4ee" stroke="#2a2a2a" stroke-width="0.8" stroke-opacity="0.5" paint-order="stroke" text-anchor="middle" dominant-baseline="central">0</text>
<text x="877.5" y="605.6" font-family="Liberation Mono, monospace" font-weight="bold" font-size="8.2" fill="#eef4ee" stroke="#2a2a2a" stroke-width="0.8" stroke-opacity="0.5" paint-order="stroke" text-anchor="middle" dominant-baseline="central">0</text>
<text x="790" y="620.6" font-family="Liberation Mono, monospace" font-weight="bold" font-size="8.2" fill="#eef4ee" stroke="#2a2a2a" stroke-width="0.8" stroke-opacity="0.5" paint-order="stroke" text-anchor="middle" dominant-baseline="central">0</text>
<text x="641" y="597.5" font-family="Liberation Mono, monospace" font-weight="bold" font-size="8.2" fill="#eef4ee" stroke="#2a2a2a" stroke-width="0.8" stroke-opacity="0.5" paint-order="stroke" text-anchor="middle" dominant-baseline="central">0</text>
<text x="995.75" y="567.8" font-family="Liberation Mono, monospace" font-weight="bold" font-size="8.2" fill="#eef4ee" stroke="#2a2a2a" stroke-width="0.8" stroke-opacity="0.5" paint-order="stroke" text-anchor="middle" dominant-baseline="central">0</text>
<text x="1209" y="567.8" font-family="Liberation Mono, monospace" font-weight="bold" font-size="8.2" fill="#eef4ee" stroke="#2a2a2a" stroke-width="0.8" stroke-opacity="0.5" paint-order="stroke" text-anchor="middle" dominant-baseline="central">0</text>
<text x="1073" y="574.5" font-family="Liberation Mono, monospace" font-weight="bold" font-size="8.2" fill="#eef4ee" stroke="#2a2a2a" stroke-width="0.8" stroke-opacity="0.5" paint-order="stroke" text-anchor="middle" dominant-baseline="central">0</text>
<text x="1240" y="574.5" font-family="Liberation Mono, monospace" font-weight="bold" font-size="8.2" fill="#eef4ee" stroke="#2a2a2a" stroke-width="0.8" stroke-opacity="0.5" paint-order="stroke" text-anchor="middle" dominant-baseline="central">0</text>
<text x="1021.75" y="598" font-family="Liberation Mono, monospace" font-weight="bold" font-size="8.2" fill="#eef4ee" stroke="#2a2a2a" stroke-width="0.8" stroke-opacity="0.5" paint-order="stroke" text-anchor="middle" dominant-baseline="central">0</text>
<text x="1205" y="598" font-family="Liberation Mono, monospace" font-weight="bold" font-size="8.2" fill="#eef4ee" stroke="#2a2a2a" stroke-width="0.8" stroke-opacity="0.5" paint-order="stroke" text-anchor="middle" dominant-baseline="central">0</text>
<text x="1076.75" y="605.6" font-family="Liberation Mono, monospace" font-weight="bold" font-size="8.2" fill="#eef4ee" stroke="#2a2a2a" stroke-width="0.8" stroke-opacity="0.5" paint-order="stroke" text-anchor="middle" dominant-baseline="central">0</text>
<text x="987" y="620.6" font-family="Liberation Mono, monospace" font-weight="bold" font-size="8.2" fill="#eef4ee" stroke="#2a2a2a" stroke-width="0.8" stroke-opacity="0.5" paint-order="stroke" text-anchor="middle" dominant-baseline="central">0</text>
<text x="1185.75" y="620.6" font-family="Liberation Mono, monospace" font-weight="bold" font-size="8.2" fill="#eef4ee" stroke="#2a2a2a" stroke-width="0.8" stroke-opacity="0.5" paint-order="stroke" text-anchor="middle" dominant-baseline="central">0</text>
<text x="453.75" y="598" font-family="Liberation Mono, monospace" font-weight="bold" font-size="8.2" fill="#eef4ee" stroke="#2a2a2a" stroke-width="0.8" stroke-opacity="0.5" paint-order="stroke" text-anchor="middle" dominant-baseline="central">0</text>
<text x="332" y="605.6" font-family="Liberation Mono, monospace" font-weight="bold" font-size="8.2" fill="#eef4ee" stroke="#2a2a2a" stroke-width="0.8" stroke-opacity="0.5" paint-order="stroke" text-anchor="middle" dominant-baseline="central">0</text>
<text x="267.5" y="598" font-family="Liberation Mono, monospace" font-weight="bold" font-size="8.2" fill="#eef4ee" stroke="#2a2a2a" stroke-width="0.8" stroke-opacity="0.5" paint-order="stroke" text-anchor="middle" dominant-baseline="central">0</text>
<text x="858" y="398.75" font-family="Liberation Mono, monospace" font-weight="bold" font-size="8.2" fill="#eef4ee" stroke="#2a2a2a" stroke-width="0.8" stroke-opacity="0.5" paint-order="stroke" text-anchor="middle" dominant-baseline="central">0</text>
<text x="828" y="532.5" font-family="Liberation Mono, monospace" font-weight="bold" font-size="8.2" fill="#eef4ee" stroke="#2a2a2a" stroke-width="0.8" stroke-opacity="0.5" paint-order="stroke" text-anchor="middle" dominant-baseline="central">0</text>
<text x="523.4" y="369" font-family="Liberation Mono, monospace" font-weight="bold" font-size="8.2" fill="#eef4ee" stroke="#2a2a2a" stroke-width="0.8" stroke-opacity="0.5" paint-order="stroke" text-anchor="middle" dominant-baseline="central">1</text>
<text x="548" y="391.9" font-family="Liberation Mono, monospace" font-weight="bold" font-size="8.2" fill="#eef4ee" stroke="#2a2a2a" stroke-width="0.8" stroke-opacity="0.5" paint-order="stroke" text-anchor="middle" dominant-baseline="central">1</text>
<text x="590" y="361.8" font-family="Liberation Mono, monospace" font-weight="bold" font-size="8.2" fill="#eef4ee" stroke="#2a2a2a" stroke-width="0.8" stroke-opacity="0.5" paint-order="stroke" text-anchor="middle" dominant-baseline="central">0</text>
<circle cx="431.6" cy="148.6" r="4" fill="#f5f5f5" stroke="#1d2a3a" stroke-opacity="0.5" stroke-width="1"/>
<circle cx="431.6" cy="148.6" r="1.7" fill="#484848"/>
<circle cx="1217" cy="368.3" r="4" fill="#80d47e" stroke="#1d2a3a" stroke-opacity="0.5" stroke-width="1"/>
<circle cx="1217" cy="368.3" r="1.7" fill="#123811"/>
<circle cx="919.5" cy="285" r="4" fill="#b98de4" stroke="#1d2a3a" stroke-opacity="0.5" stroke-width="1"/>
<circle cx="919.5" cy="285" r="1.7" fill="#2c1840"/>
<circle cx="386" cy="316" r="4" fill="#80d47e" stroke="#1d2a3a" stroke-opacity="0.5" stroke-width="1"/>
<circle cx="386" cy="316" r="1.7" fill="#123811"/>
<circle cx="386" cy="323.6" r="4" fill="#80d47e" stroke="#1d2a3a" stroke-opacity="0.5" stroke-width="1"/>
<circle cx="386" cy="323.6" r="1.7" fill="#123811"/>
<circle cx="386" cy="331.4" r="4" fill="#80d47e" stroke="#1d2a3a" stroke-opacity="0.5" stroke-width="1"/>
<circle cx="386" cy="331.4" r="1.7" fill="#123811"/>
<circle cx="386" cy="338.75" r="4" fill="#80d47e" stroke="#1d2a3a" stroke-opacity="0.5" stroke-width="1"/>
<circle cx="386" cy="338.75" r="1.7" fill="#123811"/>
<circle cx="1095" cy="681.25" r="4" fill="#ecc693" stroke="#1d2a3a" stroke-opacity="0.5" stroke-width="1"/>
<circle cx="1095" cy="681.25" r="1.7" fill="#44321b"/>
<circle cx="1095" cy="688.75" r="4" fill="#ecc693" stroke="#1d2a3a" stroke-opacity="0.5" stroke-width="1"/>
<circle cx="1095" cy="688.75" r="1.7" fill="#44321b"/>
<circle cx="957.5" cy="681.25" r="4" fill="#ecc693" stroke="#1d2a3a" stroke-opacity="0.5" stroke-width="1"/>
<circle cx="957.5" cy="681.25" r="1.7" fill="#44321b"/>
<circle cx="927.5" cy="688.75" r="4" fill="#ecc693" stroke="#1d2a3a" stroke-opacity="0.5" stroke-width="1"/>
<circle cx="927.5" cy="688.75" r="1.7" fill="#44321b"/>
<text x="1217" y="408" transform="rotate(90 1217 408)" font-family="Liberation Mono, monospace" font-weight="bold" font-size="8.2" fill="#eef4ee" stroke="#2a2a2a" stroke-width="0.8" stroke-opacity="0.5" paint-order="stroke" text-anchor="middle" dominant-baseline="central">Indirect Addr</text>
<rect x="0" y="0" width="1280" height="31" fill="#2f2a3c"/>
<rect x="0" y="30.3" width="1280" height="1.7" fill="#1b1927"/>
<rect x="9" y="2.5" width="27" height="27" rx="3" fill="#5d5870"/>
<rect x="15.2" y="9.95" width="15" height="2.5" rx="1" fill="#f2f2f2"/>
<rect x="15.2" y="14.95" width="15" height="2.5" rx="1" fill="#f2f2f2"/>
<rect x="15.2" y="19.75" width="15" height="2.5" rx="1" fill="#f2f2f2"/>
<ellipse cx="53" cy="15" rx="8.5" ry="6.2" fill="#ececec"/><path d="M47,18 L45.5,23.5 L51.5,20 Z" fill="#ececec"/>
<path d="M75,7.7 L86,7.7 L90.4,12.2 L90.4,24.8 L75,24.8 Z" fill="#e8e8e8"/><path d="M86,7.7 L86,12.2 L90.4,12.2" fill="#b8b8b8"/>
<rect x="105.6" y="7.7" width="14.2" height="17" rx="1" fill="#e0e0e0"/><rect x="105.6" y="22.5" width="14.2" height="2.3" fill="#9a9a9a"/><rect x="105.6" y="7.7" width="2" height="17" fill="#b0b0b0"/>
<g transform="translate(142.2,15.8)"><rect x="-1.8" y="-8.2" width="3.6" height="4" transform="rotate(0)" fill="#ececec"/><rect x="-1.8" y="-8.2" width="3.6" height="4" transform="rotate(45)" fill="#ececec"/><rect x="-1.8" y="-8.2" width="3.6" height="4" transform="rotate(90)" fill="#ececec"/><rect x="-1.8" y="-8.2" width="3.6" height="4" transform="rotate(135)" fill="#ececec"/><rect x="-1.8" y="-8.2" width="3.6" height="4" transform="rotate(180)" fill="#ececec"/><rect x="-1.8" y="-8.2" width="3.6" height="4" transform="rotate(225)" fill="#ececec"/><rect x="-1.8" y="-8.2" width="3.6" height="4" transform="rotate(270)" fill="#ececec"/><rect x="-1.8" y="-8.2" width="3.6" height="4" transform="rotate(315)" fill="#ececec"/><circle r="6" fill="#ececec"/><circle r="2.6" fill="#27232f"/></g>
<g transform="translate(172.3,15.8) rotate(45)"><rect x="-1.7" y="-3" width="3.4" height="12" rx="1.5" fill="#ececec"/><circle cx="0" cy="-5" r="4.5" fill="#ececec"/><rect x="-1.5" y="-10.5" width="3" height="5" fill="#27232f"/></g>
<path d="M199.5,8 L205.5,8 L205.5,9.3 L204.5,9.3 L204.5,13.5 L209.5,22 Q210,23 209,23 L196,23 Q195,23 195.5,22 L200.5,13.5 L200.5,9.3 L199.5,9.3 Z" fill="#ececec"/><path d="M198.2,18 L206.8,18 L208.4,21.5 L196.6,21.5 Z" fill="#27232f" opacity="0.35"/>
<text x="218.5" y="16.5" font-family="Liberation Sans, sans-serif" font-size="14" fill="#e6e6e6" dominant-baseline="central">+255</text>
<text x="638.6" y="16" font-family="Liberation Mono, monospace" font-weight="bold" font-size="16.6" fill="#8ade6a" text-anchor="middle" dominant-baseline="central">THE SANDBOX</text>
<text x="1272" y="9.3" font-family="Liberation Mono, monospace" font-size="10.2" fill="#dcdce4" text-anchor="end" dominant-baseline="central" xml:space="preserve">GATE SCORE: <tspan fill="#eab357" font-weight="bold">74498</tspan></text>
<text x="1272" y="23.2" font-family="Liberation Mono, monospace" font-size="10.2" fill="#dcdce4" text-anchor="end" dominant-baseline="central" xml:space="preserve">DELAY SCORE: <tspan fill="#eab357" font-weight="bold">1140</tspan></text>
<path d="M1157,17.5 h7 v1.2 l-2.8,4 l2.8,4 v1.2 h-7 v-1.2 l2.8,-4 l-2.8,-4 Z" fill="#e6e6e6"/>
<rect x="5.3" y="40" width="99.4" height="16" rx="4" fill="#322d3e"/>
<text x="9" y="48.3" font-family="Liberation Serif, serif" font-size="12" fill="#e8e8e8" dominant-baseline="central">Tick</text>
<text x="100" y="48.3" font-family="Liberation Mono, monospace" font-weight="bold" font-size="11.5" fill="#ececec" text-anchor="end" dominant-baseline="central">582K</text>
<rect x="5.3" y="62.2" width="99.4" height="150" rx="5" fill="#322d3e"/>
<text x="50" y="80" font-family="Liberation Mono, monospace" font-weight="bold" font-size="12" fill="#ececec" text-anchor="middle" dominant-baseline="central">INPUTS</text>
<text x="50" y="114" font-family="Liberation Mono, monospace" font-weight="bold" font-size="12" fill="#ececec" text-anchor="middle" dominant-baseline="central">MEMORY</text>
<text x="50" y="196" font-family="Liberation Mono, monospace" font-weight="bold" font-size="12" fill="#ececec" text-anchor="middle" dominant-baseline="central">OUTPUTS</text>
<text x="50" y="138.3" font-family="Liberation Mono, monospace" font-size="7.6" fill="#e0e0e0" text-anchor="middle" dominant-baseline="central">Counter</text>
<rect x="29.8" y="145.0" width="9.6" height="10.2" rx="4.2" fill="#ec4259"/>
<rect x="40.0" y="145.0" width="9.6" height="10.2" rx="4.2" fill="#ec4259"/>
<rect x="50.2" y="145.0" width="9.6" height="10.2" rx="4.2" fill="#ec4259"/>
<rect x="60.4" y="145.0" width="9.6" height="10.2" rx="4.2" fill="#ec4259"/>
<rect x="29.8" y="155.8" width="9.6" height="10.2" rx="4.2" fill="#ec4259"/>
<rect x="40.0" y="155.8" width="9.6" height="10.2" rx="4.2" fill="#ec4259"/>
<rect x="50.2" y="155.8" width="9.6" height="10.2" rx="4.2" fill="#ec4259"/>
<rect x="60.4" y="155.8" width="9.6" height="10.2" rx="4.2" fill="#ec4259"/>
<text x="50" y="172.5" font-family="Liberation Mono, monospace" font-size="9" fill="#e0e0e0" text-anchor="middle" dominant-baseline="central">0</text>
<rect x="110" y="39.5" width="25.2" height="13.5" rx="4" fill="#302b3c" stroke="#272332" stroke-width="1"/>
<rect x="142.5" y="39.5" width="25.2" height="13.5" rx="4" fill="#302b3c" stroke="#272332" stroke-width="1"/>
<rect x="110" y="59.6" width="25.2" height="25" rx="4" fill="#302b3c" stroke="#272332" stroke-width="1"/>
<rect x="142.5" y="59.6" width="25.2" height="25" rx="4" fill="#302b3c" stroke="#272332" stroke-width="1"/>
<rect x="110" y="92" width="25.2" height="25.2" rx="4" fill="#302b3c" stroke="#272332" stroke-width="1"/>
<rect x="142.5" y="92" width="25.2" height="25.2" rx="4" fill="#302b3c" stroke="#272332" stroke-width="1"/>
<rect x="110" y="125.6" width="25.2" height="25.6" rx="4" fill="#302b3c" stroke="#272332" stroke-width="1"/>
<rect x="142.5" y="125.6" width="25.2" height="25.6" rx="4" fill="#302b3c" stroke="#272332" stroke-width="1"/>
<rect x="110" y="157" width="25.2" height="25.6" rx="4" fill="#302b3c" stroke="#272332" stroke-width="1"/>
<rect x="142.5" y="157" width="25.2" height="25.6" rx="4" fill="#302b3c" stroke="#272332" stroke-width="1"/>
<circle cx="122.0" cy="45.5" r="3.5" fill="none" stroke="#e8e8e8" stroke-width="1.3"/><path d="M124.5,48 L126.5,50" stroke="#e8e8e8" stroke-width="1.5"/><path d="M120.2,45.5 h3.6" stroke="#e8e8e8" stroke-width="1"/><path d="M122.0,43.7 v3.6" stroke="#e8e8e8" stroke-width="1"/>
<circle cx="154.0" cy="45.5" r="3.5" fill="none" stroke="#e8e8e8" stroke-width="1.3"/><path d="M156.5,48 L158.5,50" stroke="#e8e8e8" stroke-width="1.5"/><path d="M152.2,45.5 h3.6" stroke="#e8e8e8" stroke-width="1"/>
<path d="M119.5,67.5 L124.5,72 L119.5,76.5" stroke="#6a6475" stroke-width="2.4" fill="none"/>
<path d="M151.5,66.5 L158.5,72 L151.5,77.5 Z" fill="#6a6475"/>
<rect x="118.3" y="100" width="8.5" height="8.5" rx="1" fill="#ececec"/>
<rect x="150.5" y="95" width="3" height="10" rx="1" fill="#f4f4f4"/><rect x="156" y="95" width="3" height="10" rx="1" fill="#f4f4f4"/>
<text x="155" y="112" font-family="Liberation Serif, serif" font-size="7.5" fill="#e0e0e0" text-anchor="middle" dominant-baseline="central">100kHz</text>
<circle cx="116.9" cy="132.8" r="1.25" fill="#ececec"/>
<circle cx="120.9" cy="132.8" r="1.25" fill="#ececec"/>
<circle cx="124.7" cy="132.8" r="1.25" fill="#ececec"/>
<circle cx="128.75" cy="132.8" r="1.25" fill="#ececec"/>
<circle cx="116.9" cy="144" r="1.25" fill="#ececec"/>
<circle cx="120.9" cy="144" r="1.25" fill="#ececec"/>
<circle cx="124.7" cy="144" r="1.25" fill="#ececec"/>
<circle cx="128.75" cy="144" r="1.25" fill="#ececec"/>
<circle cx="116.9" cy="136.75" r="1.25" fill="#ececec"/>
<circle cx="116.9" cy="140" r="1.25" fill="#ececec"/>
<circle cx="128.75" cy="136.75" r="1.25" fill="#ececec"/>
<circle cx="128.75" cy="140" r="1.25" fill="#ececec"/>
<path d="M150,133 h10 M152,133 v-1.5 h6 v1.5 M151,134.5 L152,144 h6 L159,134.5" stroke="#ececec" stroke-width="1.5" fill="none"/><path d="M151.3,134.5 h7.4 L157.8,144 h-5.6 Z" fill="#ececec"/><path d="M153.6,136 v6 M156.4,136 v6" stroke="#352f3f" stroke-width="0.9"/>
<path d="M116.5,175.5 L118,170.5 L126,162.5 L129.5,166 L121.5,174 Z" fill="#ececec"/>
<circle cx="155" cy="169.8" r="5.3" fill="none" stroke="#3fa0e0" stroke-width="3"/><path d="M155,164.5 A5.3,5.3 0 0 0 150,171.8" stroke="#e8a040" stroke-width="3" fill="none"/>
<rect x="176.2" y="38.6" width="99.6" height="25" rx="5" fill="#1a212c" fill-opacity="0.9"/>
<text x="180.5" y="51.5" font-family="Liberation Serif, serif" font-size="18.5" fill="#f4f2ea" stroke="#f4f2ea" stroke-width="0.35" dominant-baseline="central">Main menu</text>
<rect x="1122" y="39" width="148" height="20.5" rx="2" fill="#5a9e3e"/>
<text x="1196" y="49.5" font-family="Liberation Serif, serif" font-size="17.2" fill="#eaf2d0" stroke="#eaf2d0" stroke-width="0.3" text-anchor="middle" dominant-baseline="central">Save this schematic</text>
<path d="M0,713 Q0,720 7,720 L0,720 Z" fill="#1a1a20"/><path d="M1280,713 Q1280,720 1273,720 L1280,720 Z" fill="#1a1a20"/>
</svg></body></html>
